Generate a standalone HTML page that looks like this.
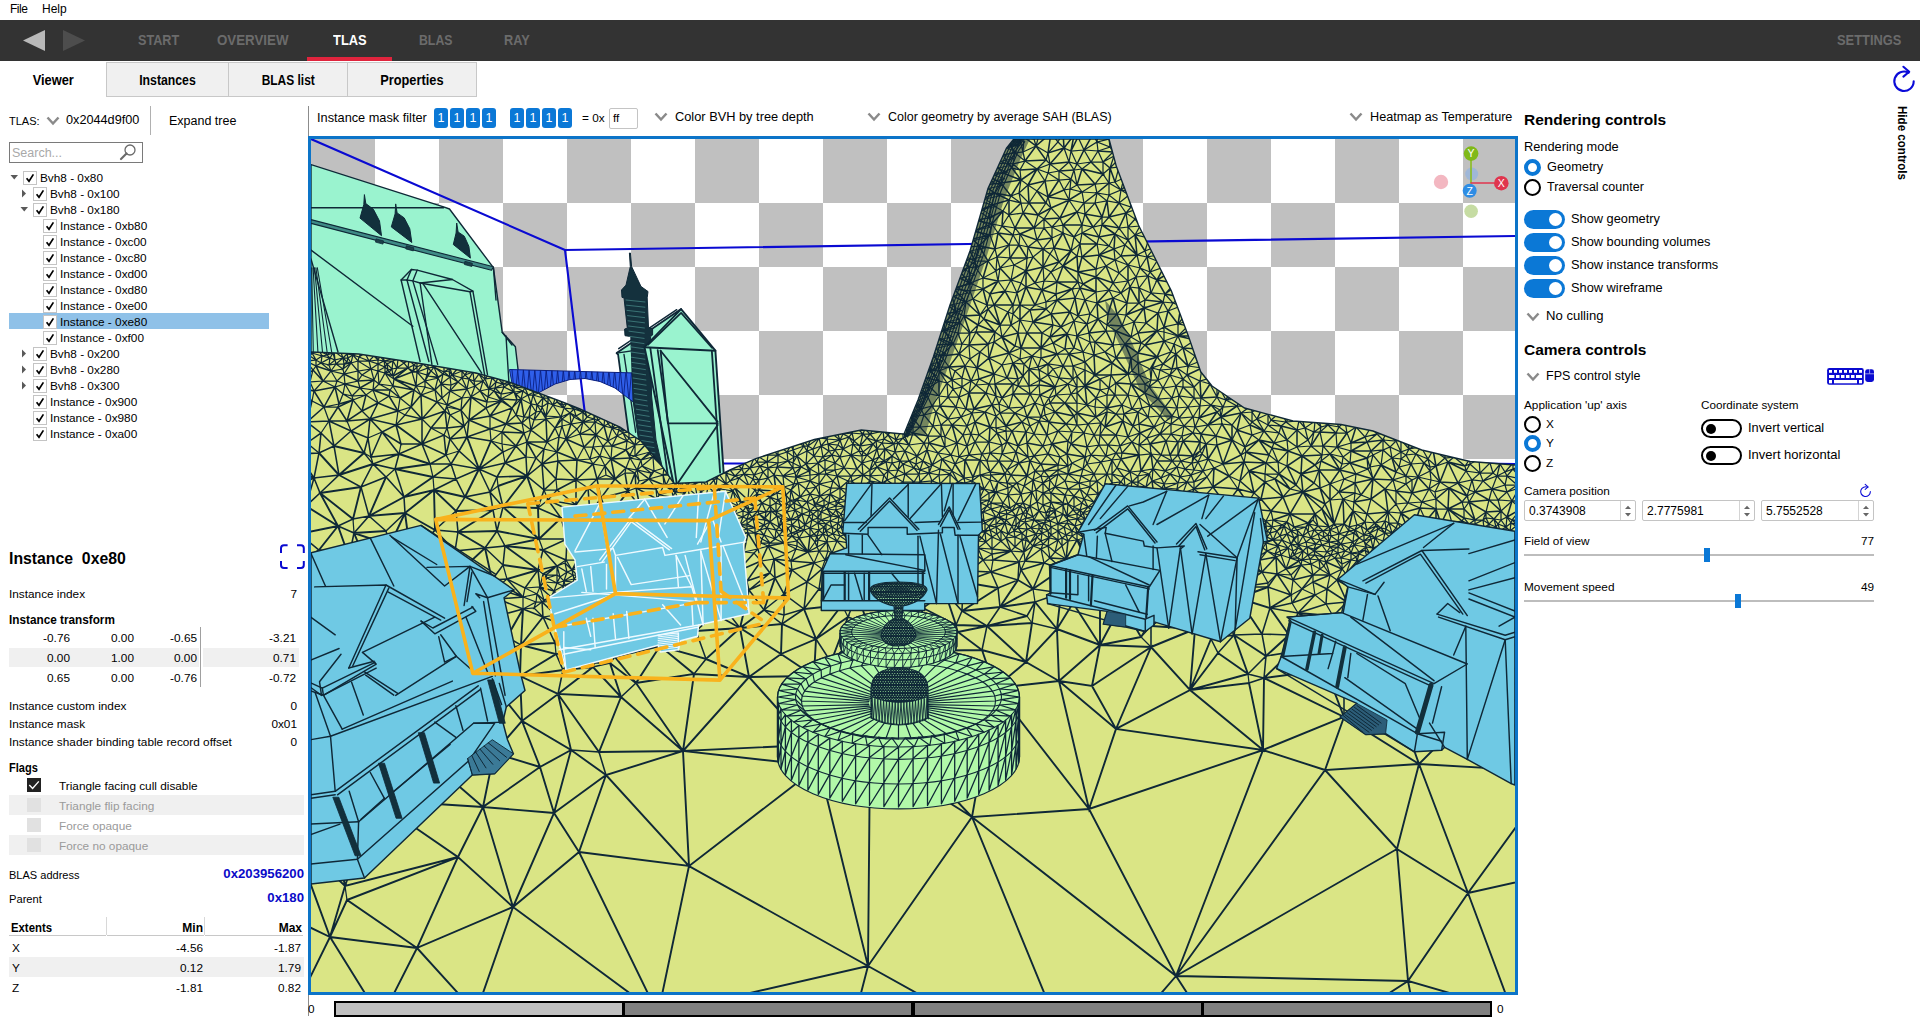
<!DOCTYPE html>
<html lang="en">
<head>
<meta charset="utf-8">
<title>Radeon Raytracing Analyzer - TLAS Viewer</title>
<style>
html,body{margin:0;padding:0;}
body{width:1920px;height:1024px;overflow:hidden;background:#fff;position:relative;
 font-family:"Liberation Sans",sans-serif;font-size:11.8px;color:#000;}
.a{position:absolute;white-space:nowrap;}
.t{position:absolute;white-space:nowrap;line-height:16px;height:16px;}
.r{text-align:right;}
.b{font-weight:bold;}
#nav{left:0;top:20px;width:1920px;height:41px;background:#333333;}
.nv{position:absolute;top:11.5px;font-weight:bold;font-size:14.6px;color:#6b6b6b;line-height:16px;transform-origin:0 50%;}
.tab{position:absolute;top:62px;height:35px;box-sizing:border-box;background:#f0f0f0;border:1px solid #c8c8c8;
 font-weight:bold;font-size:14.5px;text-align:center;line-height:34px;}
.tab span{display:inline-block;}
.cb{position:absolute;width:12px;height:12px;border:1px solid #c4c4c4;background:#fff;}
.cb svg{position:absolute;left:1px;top:1px;}
.tr{position:absolute;font-size:11.8px;line-height:16px;height:16px;white-space:nowrap;}
.bit{position:absolute;top:107.5px;width:14px;height:20px;background:#0b78d6;border-radius:3px;color:#fff;font-size:12.5px;line-height:20px;text-align:center;}
.tog{position:absolute;width:41px;height:19px;border-radius:9.5px;background:#0b78d6;}
.tog i{position:absolute;right:3px;top:3px;width:13px;height:13px;border-radius:6.5px;background:#fff;}
.togo{position:absolute;width:37px;height:15px;border-radius:10px;background:#fff;border:2px solid #000;}
.togo i{position:absolute;left:3px;top:2.5px;width:10px;height:10px;border-radius:6px;background:#000;}
.rad{position:absolute;width:13px;height:13px;border-radius:9px;border:2px solid #000;background:#fff;box-sizing:content-box;}
.rad.on{border:4px solid #0b78d6;width:9px;height:9px;}
.spin{position:absolute;top:499.5px;height:21px;box-sizing:border-box;border:1px solid #c4c4c4;border-radius:2px;background:#fff;font-size:12px;line-height:20px;padding-left:4px;}
.spin b{position:absolute;right:0;top:0;width:14px;height:19px;border-left:1px solid #d4d4d4;}
.sl{position:absolute;left:1524px;width:350px;height:2px;background:#bdbdbd;}
.sh{position:absolute;width:6px;height:14px;background:#0b78d6;}
.g{color:#9a9a9a;}
.stripe{position:absolute;background:#f0f0f0;}
</style>
</head>
<body>
<!--MENU-->
<div class="t" style="left:10px;top:1px;font-size:12px;letter-spacing:-0.5px">File</div>
<div class="t" style="left:42px;top:1px;font-size:12px">Help</div>
<!--NAV-->
<div class="a" id="nav">
 <svg class="a" style="left:20px;top:8px" width="70" height="26"><path d="M3,12.5 L25,2 L25,23 Z" fill="#b9b9b9"/><path d="M65,12.5 L43,2 L43,23 Z" fill="#4d4d4d"/></svg>
 <div class="nv" style="left:138px;transform:scaleX(0.866)">START</div>
 <div class="nv" style="left:216.5px;transform:scaleX(0.912)">OVERVIEW</div>
 <div class="nv" style="left:332.5px;color:#fff;transform:scaleX(0.884)">TLAS</div>
 <div class="nv" style="left:418.5px;transform:scaleX(0.842)">BLAS</div>
 <div class="nv" style="left:504px;transform:scaleX(0.873)">RAY</div>
 <div class="nv" style="left:1836.5px;transform:scaleX(0.883)">SETTINGS</div>
 <div class="a" style="left:307px;top:37px;width:85px;height:4px;background:#e0243d"></div>
</div>
<!--SUBTABS-->
<div class="tab" style="left:0;width:106px;background:#fff;border-color:#fff;"><span style="transform:scaleX(0.887)">Viewer</span></div>
<div class="tab" style="left:106px;width:123px;"><span style="transform:scaleX(0.846)">Instances</span></div>
<div class="tab" style="left:228px;width:120px;"><span style="transform:scaleX(0.823)">BLAS list</span></div>
<div class="tab" style="left:347px;width:130px;"><span style="transform:scaleX(0.882)">Properties</span></div>
<!--LEFT TOOLBAR-->
<div class="t" style="left:9px;top:113px;font-size:11px">TLAS:</div>
<svg class="a" style="left:46px;top:116px" width="14" height="10"><path d="M1.5,1.5 L7,7.5 L12.5,1.5" fill="none" stroke="#8a8a8a" stroke-width="2.5"/></svg>
<div class="t" style="left:66px;top:112px;font-size:12.7px">0x2044d9f00</div>
<div class="a" style="left:150px;top:106px;width:1px;height:29px;background:#b0b0b0"></div>
<div class="t" style="left:169px;top:113px;font-size:12.5px">Expand tree</div>
<div class="a" style="left:308px;top:106px;width:1px;height:910px;background:#8c8c8c"></div>
<!--SEARCH-->
<div class="a" style="left:9px;top:142px;width:132px;height:19px;border:1px solid #7a7a7a;box-sizing:content-box;background:#fff"></div>
<div class="t g" style="left:12px;top:145px;font-size:12.5px;color:#a9a9a9">Search...</div>
<svg class="a" style="left:118px;top:143px" width="20" height="18"><circle cx="12" cy="7" r="5" fill="none" stroke="#6a6a6a" stroke-width="1.3"/><path d="M8.5,10.5 L3,16" stroke="#6a6a6a" stroke-width="2.2" stroke-linecap="round"/></svg>
<!--TREE-->
<svg class="a" style="left:10px;top:174px" width="9" height="7"><path d="M0.5,1 L8,1 L4.25,5.5 Z" fill="#595959"/></svg>
<div class="cb" style="left:23px;top:171px"><svg width="10" height="10" viewBox="0 0 10 10"><path d="M1.6,5.2 L4,8.3 L8.4,1.4" fill="none" stroke="#000" stroke-width="1.7"/></svg></div>
<div class="tr" style="left:40px;top:170px">Bvh8 - 0x80</div>
<svg class="a" style="left:21px;top:189px" width="6" height="9"><path d="M1,0.5 L5,4.5 L1,8.5 Z" fill="#595959"/></svg>
<div class="cb" style="left:33px;top:187px"><svg width="10" height="10" viewBox="0 0 10 10"><path d="M1.6,5.2 L4,8.3 L8.4,1.4" fill="none" stroke="#000" stroke-width="1.7"/></svg></div>
<div class="tr" style="left:50px;top:186px">Bvh8 - 0x100</div>
<svg class="a" style="left:20px;top:206px" width="9" height="7"><path d="M0.5,1 L8,1 L4.25,5.5 Z" fill="#595959"/></svg>
<div class="cb" style="left:33px;top:203px"><svg width="10" height="10" viewBox="0 0 10 10"><path d="M1.6,5.2 L4,8.3 L8.4,1.4" fill="none" stroke="#000" stroke-width="1.7"/></svg></div>
<div class="tr" style="left:50px;top:202px">Bvh8 - 0x180</div>
<div class="cb" style="left:43px;top:219px"><svg width="10" height="10" viewBox="0 0 10 10"><path d="M1.6,5.2 L4,8.3 L8.4,1.4" fill="none" stroke="#000" stroke-width="1.7"/></svg></div>
<div class="tr" style="left:60px;top:218px">Instance - 0xb80</div>
<div class="cb" style="left:43px;top:235px"><svg width="10" height="10" viewBox="0 0 10 10"><path d="M1.6,5.2 L4,8.3 L8.4,1.4" fill="none" stroke="#000" stroke-width="1.7"/></svg></div>
<div class="tr" style="left:60px;top:234px">Instance - 0xc00</div>
<div class="cb" style="left:43px;top:251px"><svg width="10" height="10" viewBox="0 0 10 10"><path d="M1.6,5.2 L4,8.3 L8.4,1.4" fill="none" stroke="#000" stroke-width="1.7"/></svg></div>
<div class="tr" style="left:60px;top:250px">Instance - 0xc80</div>
<div class="cb" style="left:43px;top:267px"><svg width="10" height="10" viewBox="0 0 10 10"><path d="M1.6,5.2 L4,8.3 L8.4,1.4" fill="none" stroke="#000" stroke-width="1.7"/></svg></div>
<div class="tr" style="left:60px;top:266px">Instance - 0xd00</div>
<div class="cb" style="left:43px;top:283px"><svg width="10" height="10" viewBox="0 0 10 10"><path d="M1.6,5.2 L4,8.3 L8.4,1.4" fill="none" stroke="#000" stroke-width="1.7"/></svg></div>
<div class="tr" style="left:60px;top:282px">Instance - 0xd80</div>
<div class="cb" style="left:43px;top:299px"><svg width="10" height="10" viewBox="0 0 10 10"><path d="M1.6,5.2 L4,8.3 L8.4,1.4" fill="none" stroke="#000" stroke-width="1.7"/></svg></div>
<div class="tr" style="left:60px;top:298px">Instance - 0xe00</div>
<div class="a" style="left:9px;top:313px;width:260px;height:16px;background:#8fc1e8"></div>
<div class="cb" style="left:43px;top:315px"><svg width="10" height="10" viewBox="0 0 10 10"><path d="M1.6,5.2 L4,8.3 L8.4,1.4" fill="none" stroke="#000" stroke-width="1.7"/></svg></div>
<div class="tr" style="left:60px;top:314px">Instance - 0xe80</div>
<div class="cb" style="left:43px;top:331px"><svg width="10" height="10" viewBox="0 0 10 10"><path d="M1.6,5.2 L4,8.3 L8.4,1.4" fill="none" stroke="#000" stroke-width="1.7"/></svg></div>
<div class="tr" style="left:60px;top:330px">Instance - 0xf00</div>
<svg class="a" style="left:21px;top:349px" width="6" height="9"><path d="M1,0.5 L5,4.5 L1,8.5 Z" fill="#595959"/></svg>
<div class="cb" style="left:33px;top:347px"><svg width="10" height="10" viewBox="0 0 10 10"><path d="M1.6,5.2 L4,8.3 L8.4,1.4" fill="none" stroke="#000" stroke-width="1.7"/></svg></div>
<div class="tr" style="left:50px;top:346px">Bvh8 - 0x200</div>
<svg class="a" style="left:21px;top:365px" width="6" height="9"><path d="M1,0.5 L5,4.5 L1,8.5 Z" fill="#595959"/></svg>
<div class="cb" style="left:33px;top:363px"><svg width="10" height="10" viewBox="0 0 10 10"><path d="M1.6,5.2 L4,8.3 L8.4,1.4" fill="none" stroke="#000" stroke-width="1.7"/></svg></div>
<div class="tr" style="left:50px;top:362px">Bvh8 - 0x280</div>
<svg class="a" style="left:21px;top:381px" width="6" height="9"><path d="M1,0.5 L5,4.5 L1,8.5 Z" fill="#595959"/></svg>
<div class="cb" style="left:33px;top:379px"><svg width="10" height="10" viewBox="0 0 10 10"><path d="M1.6,5.2 L4,8.3 L8.4,1.4" fill="none" stroke="#000" stroke-width="1.7"/></svg></div>
<div class="tr" style="left:50px;top:378px">Bvh8 - 0x300</div>
<div class="cb" style="left:33px;top:395px"><svg width="10" height="10" viewBox="0 0 10 10"><path d="M1.6,5.2 L4,8.3 L8.4,1.4" fill="none" stroke="#000" stroke-width="1.7"/></svg></div>
<div class="tr" style="left:50px;top:394px">Instance - 0x900</div>
<div class="cb" style="left:33px;top:411px"><svg width="10" height="10" viewBox="0 0 10 10"><path d="M1.6,5.2 L4,8.3 L8.4,1.4" fill="none" stroke="#000" stroke-width="1.7"/></svg></div>
<div class="tr" style="left:50px;top:410px">Instance - 0x980</div>
<div class="cb" style="left:33px;top:427px"><svg width="10" height="10" viewBox="0 0 10 10"><path d="M1.6,5.2 L4,8.3 L8.4,1.4" fill="none" stroke="#000" stroke-width="1.7"/></svg></div>
<div class="tr" style="left:50px;top:426px">Instance - 0xa00</div>
<!--INSTANCE PANEL-->
<div class="t b" style="left:9px;top:550.5px;font-size:15.8px">Instance&nbsp;&nbsp;0xe80</div>
<svg class="a" style="left:279px;top:544px" width="27" height="26"><path d="M2,9 V4.2 Q2,1.2 5,1.2 H8.6 M18,1.2 H22 Q24.8,1.2 24.8,4.2 V9 M24.8,17 V21 Q24.8,24 22,24 H18 M8.6,24 H5 Q2,24 2,21 V17" fill="none" stroke="#0a0ad0" stroke-width="2"/></svg>
<div class="t" style="left:9px;top:586px">Instance index</div>
<div class="t r" style="left:200px;width:97px;top:586px">7</div>
<div class="t b" style="left:9px;top:612px;font-size:12px;transform-origin:0 50%;transform:scaleX(.98)">Instance transform</div>
<div class="stripe" style="left:9px;top:648px;width:190px;height:19px"></div>
<div class="stripe" style="left:203px;top:648px;width:96px;height:19px"></div>
<div class="a" style="left:200px;top:627px;width:1px;height:60px;background:#a0a0a0"></div>
<div class="t r" style="left:10px;width:60px;top:630px">-0.76</div>
<div class="t r" style="left:74px;width:60px;top:630px">0.00</div>
<div class="t r" style="left:137px;width:60px;top:630px">-0.65</div>
<div class="t r" style="left:236px;width:60px;top:630px">-3.21</div>
<div class="t r" style="left:10px;width:60px;top:650px">0.00</div>
<div class="t r" style="left:74px;width:60px;top:650px">1.00</div>
<div class="t r" style="left:137px;width:60px;top:650px">0.00</div>
<div class="t r" style="left:236px;width:60px;top:650px">0.71</div>
<div class="t r" style="left:10px;width:60px;top:670px">0.65</div>
<div class="t r" style="left:74px;width:60px;top:670px">0.00</div>
<div class="t r" style="left:137px;width:60px;top:670px">-0.76</div>
<div class="t r" style="left:236px;width:60px;top:670px">-0.72</div>
<div class="t" style="left:9px;top:698px">Instance custom index</div>
<div class="t r" style="left:200px;width:97px;top:698px">0</div>
<div class="t" style="left:9px;top:716px">Instance mask</div>
<div class="t r" style="left:200px;width:97px;top:716px">0x01</div>
<div class="t" style="left:9px;top:734px">Instance shader binding table record offset</div>
<div class="t r" style="left:200px;width:97px;top:734px">0</div>
<div class="t b" style="left:9px;top:760px;font-size:12px;transform-origin:0 50%;transform:scaleX(.92)">Flags</div>
<div class="a" style="left:27px;top:778px;width:14px;height:14px;background:#222"><svg width="14" height="14" viewBox="0 0 14 14"><path d="M2.3,7 L5.6,10.4 L11.8,3.4" fill="none" stroke="#fff" stroke-width="1.4"/></svg></div>
<div class="t" style="left:59px;top:778px">Triangle facing cull disable</div>
<div class="stripe" style="left:9px;top:795px;width:295px;height:20px"></div>
<div class="stripe" style="left:9px;top:835px;width:295px;height:20px"></div>
<div class="a" style="left:27px;top:798px;width:14px;height:14px;background:#e1e1e1"></div>
<div class="t g" style="left:59px;top:798px">Triangle flip facing</div>
<div class="a" style="left:27px;top:818px;width:14px;height:14px;background:#e1e1e1"></div>
<div class="t g" style="left:59px;top:818px">Force opaque</div>
<div class="a" style="left:27px;top:838px;width:14px;height:14px;background:#e1e1e1"></div>
<div class="t g" style="left:59px;top:838px">Force no opaque</div>
<div class="t" style="left:9px;top:867px;transform-origin:0 50%;transform:scaleX(.935)">BLAS address</div>
<div class="t r b" style="left:180px;width:124px;top:866px;color:#0a0ac8;font-size:13.2px">0x203956200</div>
<div class="t" style="left:9px;top:891px;transform-origin:0 50%;transform:scaleX(.945)">Parent</div>
<div class="t r b" style="left:180px;width:124px;top:890px;color:#0a0ac8;font-size:13.2px">0x180</div>
<div class="t b" style="left:11px;top:920px;font-size:12px;transform-origin:0 50%;transform:scaleX(.945)">Extents</div>
<div class="t r b" style="left:140px;width:63px;top:920px;font-size:12px">Min</div>
<div class="t r b" style="left:240px;width:62px;top:920px;font-size:12px">Max</div>
<div class="a" style="left:9px;top:935px;width:97px;height:1px;background:#c8c8c8"></div>
<div class="a" style="left:107px;top:935px;width:97px;height:1px;background:#c8c8c8"></div>
<div class="a" style="left:205px;top:935px;width:98px;height:1px;background:#c8c8c8"></div>
<div class="a" style="left:106px;top:917px;width:1px;height:18px;background:#d8d8d8"></div>
<div class="a" style="left:204px;top:917px;width:1px;height:18px;background:#d8d8d8"></div>
<div class="stripe" style="left:9px;top:957px;width:295px;height:20px"></div>
<div class="t" style="left:12px;top:940px">X</div>
<div class="t r" style="left:140px;width:63px;top:940px">-4.56</div>
<div class="t r" style="left:240px;width:61px;top:940px">-1.87</div>
<div class="t" style="left:12px;top:960px">Y</div>
<div class="t r" style="left:140px;width:63px;top:960px">0.12</div>
<div class="t r" style="left:240px;width:61px;top:960px">1.79</div>
<div class="t" style="left:12px;top:980px">Z</div>
<div class="t r" style="left:140px;width:63px;top:980px">-1.81</div>
<div class="t r" style="left:240px;width:61px;top:980px">0.82</div>
<!--VIEW TOOLBAR-->
<div class="t" style="left:317px;top:110px;font-size:12.75px">Instance mask filter</div>
<div class="bit" style="left:434px">1</div><div class="bit" style="left:450px">1</div><div class="bit" style="left:466px">1</div><div class="bit" style="left:482px">1</div>
<div class="bit" style="left:510px">1</div><div class="bit" style="left:526px">1</div><div class="bit" style="left:542px">1</div><div class="bit" style="left:558px">1</div>
<div class="t" style="left:582px;top:110px">= 0x</div>
<div class="a" style="left:609px;top:108px;width:27px;height:19px;border:1px solid #c4c4c4;border-radius:2px;box-sizing:content-box"></div>
<div class="t" style="left:613px;top:110px">ff</div>
<svg class="a" style="left:654px;top:112px" width="14" height="10"><path d="M1.5,1.5 L7,7.5 L12.5,1.5" fill="none" stroke="#8a8a8a" stroke-width="2.5"/></svg>
<div class="t" style="left:675px;top:109px;font-size:12.8px">Color BVH by tree depth</div>
<svg class="a" style="left:867px;top:112px" width="14" height="10"><path d="M1.5,1.5 L7,7.5 L12.5,1.5" fill="none" stroke="#8a8a8a" stroke-width="2.5"/></svg>
<div class="t" style="left:888px;top:109px;font-size:12.5px">Color geometry by average SAH (BLAS)</div>
<svg class="a" style="left:1349px;top:112px" width="14" height="10"><path d="M1.5,1.5 L7,7.5 L12.5,1.5" fill="none" stroke="#8a8a8a" stroke-width="2.5"/></svg>
<div class="t" style="left:1370px;top:109px;font-size:12.65px">Heatmap as Temperature</div>
<!--VIEWPORT-->
<div class="a" id="vp" style="left:308px;top:136px;width:1210px;height:859px;background:#0c74c8;">
<svg class="a" style="left:3px;top:3px" width="1204" height="853" viewBox="311 139 1204 853"><pattern id="ck" x="311" y="139" width="128" height="128" patternUnits="userSpaceOnUse"><rect width="128" height="128" fill="#fff"/><rect width="64" height="64" fill="#c0c0c0"/><rect x="64" y="64" width="64" height="64" fill="#c0c0c0"/></pattern><rect x="311" y="139" width="1204" height="853" fill="url(#ck)"/>
<path d="M311.0 139.0L565.0 250.0L1515.0 236.0" fill="none" stroke="#0a0ad2" stroke-width="2.1" stroke-linejoin="round" stroke-linecap="round" /><path d="M565.0 250.0L593.0 480.0" fill="none" stroke="#0a0ad2" stroke-width="2.1" stroke-linejoin="round" stroke-linecap="round" /><path d="M700.0 463.5L770.0 463.5" fill="none" stroke="#0a0ad2" stroke-width="2.1" stroke-linejoin="round" stroke-linecap="round" /><path d="M1480.0 463.5L1515.0 464.0" fill="none" stroke="#0a0ad2" stroke-width="2.1" stroke-linejoin="round" stroke-linecap="round" />
<polygon points="311.0,164.6 443.6,206.8 449.5,209.0 493.4,267.7 502.2,332.2 515.4,346.8 518.0,369.0 521.0,392.0 521.0,420.0 311.0,420.0" fill="#9af3cf" stroke="#0f2837" stroke-width="1.4" stroke-linejoin="round" />
<path d="M311.0 207.7L443.6 207.7M311.0 250.1L412.8 326.3M311.0 259.0L338.0 352.0M502.2 332.2L512.0 345.0M506.0 336.0L509.0 384.0M493.4 267.7L496.0 300.0" fill="none" stroke="#0f2837" stroke-width="1.4" stroke-linecap="round" />
<path d="M420.1 361.5L401.1 280.0L411.4 269.5L417.2 270.1L452.4 279.5L472.9 291.2L487.5 374.7" fill="none" stroke="#0f2837" stroke-width="1.4" stroke-linejoin="round" stroke-linecap="round" />
<path d="M401.1 280.0L407.0 280.0L428.9 361.5" fill="none" stroke="#0f2837" stroke-width="1.4" stroke-linejoin="round" stroke-linecap="round" />
<path d="M411.4 269.5L407.0 280.0" fill="none" stroke="#0f2837" stroke-width="1.4" stroke-linejoin="round" stroke-linecap="round" />
<path d="M417.2 270.1L412.8 280.9L437.7 364.4" fill="none" stroke="#0f2837" stroke-width="1.4" stroke-linejoin="round" stroke-linecap="round" />
<path d="M407.0 280.0L412.8 280.9L420.1 283.0L470.0 291.8L472.9 291.2" fill="none" stroke="#0f2837" stroke-width="1.4" stroke-linejoin="round" stroke-linecap="round" />
<path d="M420.1 283.0L431.9 364.4" fill="none" stroke="#0f2837" stroke-width="1.4" stroke-linejoin="round" stroke-linecap="round" />
<path d="M452.4 279.5L420.1 283.0" fill="none" stroke="#0f2837" stroke-width="1.4" stroke-linejoin="round" stroke-linecap="round" />
<path d="M423.1 283.8L481.7 373.2" fill="none" stroke="#0f2837" stroke-width="1.4" stroke-linejoin="round" stroke-linecap="round" />
<path d="M470.0 291.8L484.6 374.7" fill="none" stroke="#0f2837" stroke-width="1.4" stroke-linejoin="round" stroke-linecap="round" />
<path d="M311.7 267.7L313.3 352.0M313.1 267.7L317.9 352.0M314.5 267.7L322.5 352.0M315.9 267.7L327.1 352.0M317.3 267.7L331.7 352.0" fill="none" stroke="#0f2837" stroke-width="1.1" stroke-linecap="round" />
<polygon points="311.0,219.6 493.4,266.8 491.5,270.3 311.0,223.4" fill="#3f8a86" stroke="#0f2837" stroke-width="1.1" stroke-linejoin="round" />
<polygon points="364.4,194.6 365.8,203.6 373.4,209.3 379.5,221.0 381.5,235.7 360.0,218.1 363.8,204.6" fill="#12303c" stroke="#0f2837" stroke-width="1" stroke-linejoin="round" />
<polygon points="376.0,238.9 383.5,240.9 383.0,244.1 375.5,242.1" fill="#1b4048" stroke="#0f2837" stroke-width="0.8" stroke-linejoin="round" />
<polygon points="395.7,203.9 397.1,212.9 404.2,217.9 409.8,228.8 411.8,242.5 391.3,226.9 395.1,213.9" fill="#12303c" stroke="#0f2837" stroke-width="1" stroke-linejoin="round" />
<polygon points="406.3,245.7 413.8,247.7 413.3,250.9 405.8,248.9" fill="#1b4048" stroke="#0f2837" stroke-width="0.8" stroke-linejoin="round" />
<polygon points="456.7,223.0 458.1,232.0 464.3,236.2 468.9,246.4 470.4,258.1 453.3,244.5 456.1,233.0" fill="#12303c" stroke="#0f2837" stroke-width="1" stroke-linejoin="round" />
<polygon points="464.9,261.3 472.4,263.3 471.9,266.5 464.4,264.5" fill="#1b4048" stroke="#0f2837" stroke-width="0.8" stroke-linejoin="round" />
<polygon points="616.6,353.1 681.1,309.1 645.9,348.7 673.8,483.5 650.3,464.4 628.4,432.2 618.1,354.5" fill="#9af3cf" stroke="#0f2837" stroke-width="1.8" stroke-linejoin="round" />
<path d="M616.6 353.1L645.9 348.7" fill="none" stroke="#0f2837" stroke-width="1.4" stroke-linejoin="round" stroke-linecap="round" />
<path d="M624.0 354.5L635.7 432.2" fill="none" stroke="#0f2837" stroke-width="1.4" stroke-linejoin="round" stroke-linecap="round" />
<path d="M618.7 348.7L676.7 309.7" fill="none" stroke="#0f2837" stroke-width="1.4" stroke-linejoin="round" stroke-linecap="round" />
<polygon points="509.5,369.5 636.0,373.0 636.0,404.0 628.0,398.0 615.0,388.0 600.0,381.5 585.0,378.5 570.0,379.5 555.0,384.0 540.0,392.0 530.0,400.0 515.0,400.0" fill="#2f5fea" stroke="#0b1f80" stroke-width="1" stroke-linejoin="round" />
<clipPath id="bc"><polygon points="509.5,369.5 636.0,373.0 636.0,404.0 628.0,398.0 615.0,388.0 600.0,381.5 585.0,378.5 570.0,379.5 555.0,384.0 540.0,392.0 530.0,400.0 515.0,400.0"/></clipPath>
<g clip-path="url(#bc)"><path d="M512.0 370.0L515.0 400.0M517.7 370.0L515.0 400.0M517.7 370.0L520.7 400.0M523.4 370.0L520.7 400.0M523.4 370.0L526.4 400.0M529.1 370.0L526.4 400.0M529.1 370.0L532.1 400.0M534.8 370.0L532.1 400.0M534.8 370.0L537.8 400.0M540.5 370.0L537.8 400.0M540.5 370.0L543.5 400.0M546.2 370.0L543.5 400.0M546.2 370.0L549.2 400.0M551.9 370.0L549.2 400.0M551.9 370.0L554.9 400.0M557.6 370.0L554.9 400.0M557.6 370.0L560.6 400.0M563.3 370.0L560.6 400.0M563.3 370.0L566.3 400.0M569.0 370.0L566.3 400.0M569.0 370.0L572.0 400.0M574.7 370.0L572.0 400.0M574.7 370.0L577.7 400.0M580.4 370.0L577.7 400.0M580.4 370.0L583.4 400.0M586.1 370.0L583.4 400.0M586.1 370.0L589.1 400.0M591.8 370.0L589.1 400.0M591.8 370.0L594.8 400.0M597.5 370.0L594.8 400.0M597.5 370.0L600.5 400.0M603.2 370.0L600.5 400.0M603.2 370.0L606.2 400.0M608.9 370.0L606.2 400.0M608.9 370.0L611.9 400.0M614.6 370.0L611.9 400.0M614.6 370.0L617.6 400.0M620.3 370.0L617.6 400.0M620.3 370.0L623.3 400.0M626.0 370.0L623.3 400.0M626.0 370.0L629.0 400.0M631.7 370.0L629.0 400.0M631.7 370.0L634.7 400.0M637.4 370.0L634.7 400.0" fill="none" stroke="#0b1f80" stroke-width="0.9" stroke-linecap="round" /></g>
<polygon points="629.4,253.0 630.3,266.5 626.0,285.1 621.5,290.0 622.0,297.4 624.0,297.8 627.3,328.2 624.6,329.0 625.0,335.7 630.8,336.5 633.0,400.0 641.0,458.0 662.0,466.0 656.0,440.0 651.5,395.0 650.6,336.5 652.6,335.0 652.6,328.5 648.5,327.5 647.2,297.8 648.0,291.5 641.0,286.5 631.6,266.5 630.4,253.0" fill="#14313d" stroke="#0f2837" stroke-width="1" stroke-linejoin="round" />
<path d="M626.0 300.0L645.0 302.0M626.5 305.2L644.9 307.2M627.0 310.4L644.7 312.4M627.5 315.6L644.6 317.6M628.0 320.8L644.5 322.8M628.5 326.0L644.4 328.0M629.0 331.2L644.2 333.2M629.6 336.4L644.1 338.4M630.1 341.6L644.0 343.6M630.5 346.8L644.3 348.8M630.9 352.0L644.6 354.0M631.4 357.2L644.8 359.2M631.8 362.4L645.1 364.4M632.3 367.6L645.4 369.6M632.7 372.8L645.6 374.8M633.1 378.0L645.9 380.0M633.6 383.2L646.1 385.2M634.0 388.4L646.4 390.4M634.5 393.6L646.7 395.6M634.9 398.8L646.9 400.8M635.6 404.0L647.6 406.0M636.3 409.2L648.4 411.2M637.0 414.4L649.2 416.4M637.7 419.6L650.0 421.6M638.4 424.8L650.8 426.8M639.1 430.0L651.7 432.0M639.9 435.2L652.5 437.2M640.6 440.4L653.3 442.4M641.3 445.6L654.1 447.6M642.0 450.8L654.9 452.8" fill="none" stroke="#4b8f8c" stroke-width="0.7" stroke-linecap="round" />
<polygon points="644.5,347.2 681.1,309.1 715.4,350.7 723.6,471.8 723.9,484.4 673.8,484.4" fill="#9af3cf" stroke="#0f2837" stroke-width="1.9" stroke-linejoin="round" />
<path d="M644.5 347.2L715.4 350.7" fill="none" stroke="#0f2837" stroke-width="1.9" stroke-linejoin="round" stroke-linecap="round" />
<path d="M648.0 344.9L681.1 312.9L711.9 347.8" fill="none" stroke="#0f2837" stroke-width="1.7" stroke-linejoin="round" stroke-linecap="round" />
<path d="M657.7 350.1L676.7 483.5" fill="none" stroke="#0f2837" stroke-width="1.8" stroke-linejoin="round" stroke-linecap="round" />
<path d="M660.6 350.7L667.9 423.4L717.7 423.4" fill="none" stroke="#0f2837" stroke-width="1.8" stroke-linejoin="round" stroke-linecap="round" />
<path d="M660.6 350.7L717.7 421.9" fill="none" stroke="#0f2837" stroke-width="1.8" stroke-linejoin="round" stroke-linecap="round" />
<path d="M717.7 424.9L678.2 482.6" fill="none" stroke="#0f2837" stroke-width="1.8" stroke-linejoin="round" stroke-linecap="round" />
<path d="M711.9 351.6L720.1 472.6" fill="none" stroke="#0f2837" stroke-width="1.8" stroke-linejoin="round" stroke-linecap="round" />
<path d="M650.3 347.8L667.9 476.2" fill="none" stroke="#0f2837" stroke-width="1.8" stroke-linejoin="round" stroke-linecap="round" />
<clipPath id="tc"><polygon points="311.0,352.0 358.6,354.0 417.0,363.0 476.0,373.0 511.0,382.6 563.7,402.5 580.0,409.0 620.0,427.0 641.0,441.0 659.0,462.0 674.0,483.5 706.0,482.0 730.0,470.0 755.8,458.6 814.4,439.5 861.3,430.0 900.0,433.7 904.0,434.0 918.0,400.0 933.3,357.0 950.0,305.0 970.0,251.0 988.0,188.6 1006.5,148.0 1013.8,139.0 1109.0,139.0 1116.4,166.6 1138.4,225.0 1171.4,291.0 1188.0,335.0 1200.7,371.8 1212.0,386.0 1244.5,408.0 1293.0,421.0 1341.0,424.5 1373.0,431.0 1421.7,450.0 1470.0,461.5 1515.0,465.0 1515.0,992.0 311.0,992.0"/></clipPath>
<polygon points="311.0,352.0 358.6,354.0 417.0,363.0 476.0,373.0 511.0,382.6 563.7,402.5 580.0,409.0 620.0,427.0 641.0,441.0 659.0,462.0 674.0,483.5 706.0,482.0 730.0,470.0 755.8,458.6 814.4,439.5 861.3,430.0 900.0,433.7 904.0,434.0 918.0,400.0 933.3,357.0 950.0,305.0 970.0,251.0 988.0,188.6 1006.5,148.0 1013.8,139.0 1109.0,139.0 1116.4,166.6 1138.4,225.0 1171.4,291.0 1188.0,335.0 1200.7,371.8 1212.0,386.0 1244.5,408.0 1293.0,421.0 1341.0,424.5 1373.0,431.0 1421.7,450.0 1470.0,461.5 1515.0,465.0 1515.0,992.0 311.0,992.0" fill="#dae585"/>
<g clip-path="url(#tc)"><path d="M1367 564l6-2l-1 12l13-1l-7 7l10 6l-3-13l-2-12l8-4l5 1l5 3l12 3l9 10l3-7l9-8l11 7l-12 6l2 11l-8 7l-2 9l-4-2l6-7M1367 564l3 4l-9-1l-4-6l-6-1l-10-2l-3-5l-7 2l-4-3l-5-7l8 2l3 3l-6 2l3-5l8-3l-9-2l-5-5l4-2l2-5l-7 1l5 4l1 7l-7 3l-8 6l1 4l-7 0l2 4l9 1l7 2l-2-5l3-5l-13-1l0-2l2-5l-10-2l-3-6l-5-1l-4 5l4 5l5 6l4-4l9-3l4-4l-2-6l6 3l-1-6l6-4l-11-1l-4 4l4 4l5-3l-9-1l-3 8l-3-6l-5 4l-6-6l9-3l-12 0l-7-5l4 9l-7-5l3 8l-5 6l6 8l-8 3l1 4l5 14l5 6l10-10l1-5l1-9l-9 4l-4 3l9 3l-1-3l-8 0l3-7l-2-7l3-6l4-3l0 10l8-3l1 5l-9-2l-7-1l7 4l-4 7l-1-4l5-3l5 3l-5 7l4 2l8-1l1 5l9 5l10 6l-6-9l2-4l9-4l3-5l0-6l-8 0l-1-5l-9-2l-9-2l7-4M1367 564l-6 3l11 7l6 6M1367 564l0-7l-2-7l1-3l7 1l-2-9l-5 5l7 4l8 7l0 2l-11-3l3 8l-6-5l3-3l3-6l2-10l-4 1l-1-3l5 2l5 7l3-4l-2 6l0 3l0 5l7-4l3 6l2-3l0-7l-5-3l2-7l-7 4l2-8l-4-5l-5-2l2 3l7 4l7 0l6 5l11-3l-2 5l3-2l-2 5l5 7l2-4l5-2l-4-4l-1-6l-6 1l1 3l5-4l3 4l3-8l6 3l6-4l3-4l4 2l1-3l-5 1l-10-4l-8 6l-7 2l-4-2l-6 2l8 6l2-6l4-6l3 4l8-4l10 2l-5 1l-5-3l0-2l-11 2l-8 4l-9-4l-10-11l13 1l-5-9l0-13l-3-11l13-4l-10-4l3-5l2-8l-9-1l7 9l12-3l13-1l-8-9l5-7l-12 2l-8 3l0 7l5-4l-5-3l-11-5l6-6l-10-8l-9 1l-6-7l-6 10l-9-10l9-11M1367 564l-10-3l10-4l-8-3l-3 3l-5-4l-6-2l4-3l5-3l5-7l5-3l-3-9l4-4l2 8l8-7l10-2l4 2l-1-11l-3 9l1 8l-5-1l-3 1l-3 9l10-5l5 4l2-4l9-4l-3 9l9 2l1 3l7 3l9 3l7 4l-6-6l10 4l2-4l-1-3l-11 3l12 0l4 3l7-4l3 6l1 3l7 5l-9-2l-4 2l-9-6l-6-1l3 6l3-5l4-4l10 2l2-11l-10 2l8-10l-10 5l6-8l-8 3l2 5l-6-1l1 4l5-3l2 5l-7 1l0-3l-11 6l-1 2l-10 4l-7 0l-4-7l5-3l8-3l-1 6M755 533l5-3l4-5l3 3l8 11l-11-4l-2 4l8 4l5-4l9 4l8-7l-6 0l5-3l6-2l7-1l1-5l5 3l4 6l3 2l1 4l9 2l-4-8l5 2l9 5l9 9l-14 3l8 5l3 5l3-13l8 10l2 10l7 8M755 533l-8-4l8-1l-2-9l6-5l-7 3l6-6l8 1l5-1l5 1l5-7l-3-5l9 4l3-4l-4-5l-8 5l-2 3l-6 3l-8-3l-4 8l-3-4l-8-4l-1 4l-3 4l6 2l6-6l7-4l-6-5l-8 2l-7 2l5 5l-8-1l-8-4l-10-1l-1 9l6 1l2 5l-3 5l-1-7l-6 2l7 5l1 1l8-2l2-6l8 3l4 2l-7 6l1 6l-6-5l5-1l7-1l8 4l0 5l-7 0l-1-4l-6 2l7 2l-10 2l-3 1l0-10l-2-6l10-3l0-6l-5-5l-3 8l-8 2l-2 6l-2 5l-8-4l9-2l-1 6l5 2l2 8l-11-7l-5-3l-4-5l3-2l-2-4l-8-5l4-8l-3-3l-2 8l1 3l10-5l-2 8l8-4l8-3l3-5l-11-6l-6-2l2 6l1 2l4-1l-1-5l14-5l2-3l-5-7l-4-8l-7 1l7 10l0-11l2-9l2 6l12-1l-6-6l-6 7l5 6l4 2l5-4l5 12l7-2l-3-5l6 1l4-8l5-4l6 7l9 1l10-8l0-5l-5-2l6-4l3-1l9 8l4 5l0 6l0 6l9-7l-9 1l-1-4l-13 6l-13-1l12-3l6-6l5-3l8-8l-1-7l6-11l0-3l8 4l1 5l1 7l3 4l-7 5l10 3l9 5l13 1l5-6l-11-8l8-4l1-5l3-12l2-5l-10-3l8 8l-11-1l3-7M755 533l6 10l-3 6l10-3l2-3l-6-8l3-7l9 2l3-3l3-4l1 8l-4 4l5 8l13 3l-1 3l12 3l11-1l-5 12l8 6l3-9l7-7l-4-2l-1-9l-10 5l2 4l6 9l-11 3l-6-11l9-5l1-7l-3 2l2 5M755 533l7 6l-1 4l7 3l6 13l-13 2l-7-8l-10-1l14-3l3 12M755 533l9 2l-4-5l-5-2l9-3l-11-6l-6 0l0 5l6-5l12 1l5 2l7-6l-6-5l-1-5l0-9l6 6l0 9l9-3l5-3l5 4l-4 10l1 5l-1 8l-3-5l-6-5l9-3l-8-4l-6 0l4 3l1 4l10 2l8 3l5-3l-7-6l4-5l7 2l3 4l-7 5l-3-11l-4 2l0 3l-7 1l-10-1l2-3l4-4l8-2l7-3l8 4l5-5l-8-4l-7-5l-2-14l12-2l-14-4l2 6l-7 7l9 7l6-8l10-2l3-3l1 12l10-2l-6 6l5 3l7 3l-9 3l2-6l1-9l10-6l0 11l-4 2l0 5l9 1l-4 7l-5-4l3 7l-6-3l-2 2l-10 4l5 4l4-3l2 6l5 3l7 5l7 2l3-6l1 3l6 3l3 3l-6-1l-8 4l1-6l4-3l3-4l-2-4l-2 5l4-1l5 4l9 4l7-4l2-3l-5-1l-13 4l1 6l10 4l-2-6l10 4l3-4l9 0l8-1l-9 9l4 6l5 10l6-11l0-8l10 2l7 3l9-7l7 9l9 6l-6-8l-3 2l-12-1l7 10l5-9l3-9l4-10l0-5l0-2l-7 0l-1 10l-5-3l-1-5l-2-5l-5 3l0 6l-4-3l4-3l-3-4l4-4l-1-5l2-5l6-2l13-2l3 4l7-2l-10-2l-1 4l-2 8l-4-4l-6-6l-8-1l2 3l5 7l7-3l-7 8l7 6l7 7l9 3l6 2l4-1l-5-8l5-3l6 4l4-9l2-3l-5-4l6-1l7-5l4 3l11-3l-11-3l5-11l-7 1l-5-4l10 2l2 1l7 11l5-8l5-9l4-3l7 3l-3 8l2 9l7 3l-3 7l-4 0l3 5l-6 3l3-8l-7 3l-10 4l1-6l-7 3l6 3l-5-1l-5-2l-11 6l4 3l7-9l-12 4l-5-5l4-4l13 5l3-4l7-3l4-2l6-4l4 2l-4 10l-4 10l4-1l0-9l-4-5l4-7l7-1l3 6l1 4l6 4l6-6l7 9l2-3l2-6l4 1l1-2l1 7l2 7l6 3l-6 4l8 4l-4 3l-4-7l-7 4l-2 3l-1 8l10-6l4-2l6 3l-6 5l-7 6l-5 6l-6 5l-3-14l-8-3l10-2l-2-3l-4-4l5-4l6-2l-4-8l-5 1l0 5l3 4l-6 1l1 3l-7 6l-6 9l-9-5l7-7l-7-3l-7-3l4-8l-7-3l1-3l6 6l2 5l8 2l0 7l4 0l0-3l1-8l-2-7l9-2l12 0l-2 3l7 4l-1-6l8 3l5-10l0-9l-8 5l-4-8l-1 5l5 3l8 4l4 2l1-12l-3-9l9 1l0 11l6 3l-7 0l1-3l-6-3l6-8l8 7l2-4l4 8l7-1l-4 4l-3-3l-8 3l-3 4l4 2l2-3l2 6l8-2l8 3l4 6l9-2l-2-4l-4-7l-3 4l7 3l6-4l4-4l5 6l2 6l5 0l8 2l0-6l-1-6l-8 4l1 2l-5 4l3 3l-7 3l5 5l-8-1l5 3l3-2l6 1l4-5l0 2l11-2l3 4l2 5l-5 4l-11-3l1 7l-11 4l-9-6l7-4l3 6l-10-2l-5 3l-12 5l-7-6l4-8l-2-3l-5 4l3 7l-3 0l-7 3l-3 5l13 7l7-9l-10-6l-8-5l8-2l0 7M810 511l-3-9l6-3l7-3l11-8l9 0l8-7l3-5l6-7l6 6l-1-12l0-7l5-1l6 5l6-3l5 4l1-12l9-5l-12-1l3 6l7 7l0 7l-4 8l-1 9l-6 7l14-1l12 2l3 7l-10 0l3 12l-5 4l-9-6l-3 4l-5 4l-6-6l-2 2l2-6l6 0l-1-9l1-7l1-4l-12-2l-1 6l12 0l5 10l5 4l6 2l3-8l9 8l1-8l2 9l1 10l7-5l7 2l7 2l0 5l-6-2l6-3l1-9l4-14l11-3l-10-3l10-10l2-3l6 11l1 5l6-4l7 3l0-5l-7 2l4 10l-2 6l1 6l-3 8l-7-2l-3 2l-4-7l-4 0l2 5l6 2l4 4l-1 5l4 5l-5-1l-2-5l4-4l3 2l5 5l5 5l4 4l9-2l-12-3l3 5l-1 4l7 1l4 4l6-5l9 4l10 10l8 11l2 8l4-9l-6 1l5-10l9-6l8-5l8-3l9 2l-3 12l-7-6l-7 3l9 9l-2-12l-5-2l6-6l-1-7l3 4l0-8l7 4l0-7l10-4l-1 3l5 8l5 2l2-2l3-7l-5-5l-10-3l1 4l9-1l8 0l3 6l1 4l-3-1l-1 5l7 4l-8 1l-7 2l-9 1l4-5l5-3l-2-7l-8-3l-3 4l2 8l2 6M810 511l-1 5l4-2l5-4l3 2l0 8l-3-2l0 5l6 4l2 4l0-7l-2 3l-5 3l-1-7l3-3l9 1l8 2l5-3l5-4l8-2l1 5l1-3l11 3l0 4l10 2l-8-8l2-8l8 4l6 1l11-3l5-2l5-3l1-3l3 1l7-4l6 6l4 0M810 511l3 3l5 4l3-6l3-6l5-3l7-2l2 2l7 4l2-6l11 1l-3 3l-5-1l8-2l2-2l4-1l3-5l-8 1l1-6l-8-8l-4 0l3 9l9-1l10-8l-7-6l-3 14l9-2l11 7l6 3l-3 4l-2 2l0 10l0 3l-10 1l-2 6l7 7l3-5l9 2l-8-1l1 5l7-4l1 6l9-3l8 0l-4-6l7 2l8-1l7-5l-5-7l-6 1l6 4l-6 1l-9-3l-2-3l-1 7l3-4l5 10l1 9l6 1l-2-6l7 5l-5 5l-8 3l-6-6l4-7l4 5l4-5l9-3l1-7l8 1l2-3l0 8l-7 4l2 3l6-2l2 6l7 4l-4-7l8-3l4 7l5-4l0-4l-9 1M810 511l-8 3l0-7l-8-4l3-3l-3 0l0 3l-4-3l0 6l-3-2l-1-9l-9-2l-1-2l-8-13l0-10l10-5l-11-1l-7 4l-6 9l-4-7l4-10l-9-6l-1 11l-2 6l8-1l10-2l-3-4l10 0l1-7l10 0l0-10l9 7l4-7l2 5l11-4l-10-5l-1 9l4 6l-4 7l1-6l-1-7l-6 2l7 5M810 511l8-1l0 8l-6 2l1-6M1148 276l-8-8l-4 9l-8 4l-9-8l-4-13l-1-11l11-4l-4 11l7 9l9-10l10 2l10 4l-7 11l-2 4l-9 12l-9-1l6-10l12-1l9 4l-7-8l14-5l-7-6l9-8M1157 280l-6 13l-12-5l6 12l-6 3l-12 0l-14-5l-4-8l12 3l-8-10l-4 7l-13 2l1 11l-7 11l-5-14l-5-12l3-4l-5-2l2 6l-5 10l-5 14l4 9l-7 13l10 2l13 6l-1-9l6 9l11-11l-8-12l10-5l9 0l9 1l1-12l-6-10l-8 5M1433 572l-11 2M1433 572l2-4l-10-1l-13-6l-4-3l-7 3l11 0l2-8l-6 5l-1-5l-11-1l6-7l-4-4l-10 3l0 7l5 3l3-2l7-6l-1-1l5-5l-9 1l-5 6l3 5l5 9l6-8l6-3l1 3M1433 572l-8-5l-12-3l-1-3M1226 543l2-2l5 2l10-3l6 2l-2-5l1-4l-7-6l-3-6l7-8l-12 1l-1 9l-3 5l-8-1l0 7l8-1l-1-3l1-2l-3-5l6 0l-6-4l-11 2l-5 2l-6 7l6 5l-1 4l-3 7l-9-7l3-5l-2-6l4-5l8 0l1 4l4 3l6 4l0 4l7 3l1-8l8 5l-5-8l10 4l5 3l12-1l3-2l4-8l0-5l5-10l2 9l9 5l-5 6l-4 9l-7 3l-3 5l4 3l11-5l-5-6l-7 1l1-4l-8-1l7 5l0 2l-9 1l-6 4l-1-4l-1-2l10-6l-2 8l-7 0l-11 4l10 4l-6 3l-3 11l-6 6l2-10l4 4l-2-7l5-4l-5-5l0 9l-6-2l-15-3l2 11l-5 5l-3 12M1226 543l6 4l1-4l-7 0l-8-3l-1 9l-4 1l4 4l0-5l9-6l-5-5l8-5l3-3l-4 0l-7-3l-6-6l0 9l-3 8l9-4l7-4M1226 543l-9 11M783 476l-6-9l1-4l0-8l-4-4l-3-5M783 476l1 11l10-3l2-7l5-10l-8-4M783 476l11 8l-3 6l-7-3l-8 4l-6 6l7-4l7-6l2 8l5-5l3 10l-4 0l1-10M794 484l4-1l8 6l4-8l6 6l4 9l-4 8l8-4l0 6l-8-2l-3-5l-3-5l-10 3l-3 3l5 7l5-5l3-8l10 2l4 4M1290 558l-9-3l-6-1l5-3l-2-6l10 3l3-4l-9-4l-9 0l-3-7l2-6l10-2l5-3l-3 4l-4 10l-3-5l7-5l-2-1M1290 558l-2-10l-7 7l-5 2l-1-3l3-8l2 5M1290 558l-4 11l-9 5l-9 9l-6-11l-2-12l-2-3l9-6l-7 9l-11 2l-9 4M1093 517l4-3l8-4l6-1l2-5l6 2l3 6l4-3l1-7l5 4l1 8l3-5l3-7l4 3l0-5l10 6l5 3l8 4l-6-8l12-4l-6-9l-6 13l-5-2l3 6l-3 7l3 7l-4-4l-7-3l2-7l5 5l4-5l2-4l-5-4l-2 5l-10-1l-2 9l-5-5l2-8l-9-1l3 6l4 3l7-4l6 4l-8 5l-7 6l8 0l5-4l4 7l0 5l9 3l3 4l-5 2l6 10l0 2l-13-2l-10 1l2 10l-13-6l-7 7l-7-10l-2-7l-8-8l-6-1l1-7l4 0l-5-4l1 4l1 3l3-3l0-9l-8-3l4 6l4-3l0-7l-1-7l3-8l12-2l11 0l2-11l-2-10l-13-4l7 9l6-5l8 4l3-5l-11 1M1093 517l7 5l-12 3l-2 3l-4-4l3-5l-4-3l-4 3l0-5l-10 2l-4-11l5-1l5 6l4 4M1093 517l-2-7l6 4l-2-8l-1-4l-7-7l11-1l-8-7l-10 2l7 6l3-8l-11-4l-11 6l-3-8l14 2l-11-9l-10-4l0-5l10 1l-1-12l5 9l11 6l-2 7l9 5l7 0l-3-7l13 0l5-14l-6-4l-5 6l6 12l-3 13l3 8l-4 6l-5-7l9 1l6 9l6-11l6-7l7-4l6 4l8 1l-3 13l-5 1l-6 5l-6 3l7 5l0 4l-6 0l7 2l0 4l8-4l9 3l3-4l0-5l1 2l11-3l5-4l-11-4M1093 517l-5 8l-6-1l-7 2l4 5l7-3M1093 517l-10-4l8-3M797 500l10 2M1505 485l-8-9l-14 5l-11-1l-14 3l11 7l-2 6l-5 6l2 7l0 9l5 6l-4 6l4 5l-6 0l-3-9l9-2l6-4l0 4l-2 4l11 0l1 5l-3 7l1 7l2 4l2 4l-5 5l-8-6l-6-2l-1-4l-2-5l-7 0l0-6l4 0l1 2l2 4l8-6l1 3l1 3l1 7l-8 2l-10 3l1 5l12 2l-8 8l-4 3l-5-5l-9-2l1-6l-5-10l-6 1l2 3M1505 485l12 0l4-6l-8-10l-8 3l-5-8l-10-1l5-5l5 6l5-8l8 7l0 6l-6 7l-2-4l8-9l12 1l-12 5l13 1M1505 485l2 7l-9 8l-6-11l5-13l-4-3l-13 0l10-10l-11-4l1 14l-14-2l-1-5l5-2l0-5l-5 7l-11-9l2-6M1505 485l-13 4l-9-8l-3-8l-10-9l9-5M1505 485l2-9l14 3M1212 538l-2-3l5-5l6-3l5-4l0-4l-5-3l-5-5l0 3l5 2l-6 0l-8 3l-1-5l-3-8l1-9l-10-8l-11 4l-6-4l-12-1l13-5l2-6l7 5l4-7l3 7l13-5l6 10l-9 10l-12 9l5 7l2-4l-7-3l-5 4l-5 0l1-7l-9 4l8 3l-7 3l6 1l4 7l8-3l1 3l1 1l3 6l-4 10l-10 3l-3 3l-4-8l7 5l13 6l-11 4l-3 10l-1-8l4-2l-5-7l-6-4l3 6l-14 1l-8-7l-6-3l4-2l4 2l2-6l-6 4M1212 538l6 2l-7 4l4 2l-3 3l-14 6l-1-8l0-8l5-2l2-7l7-3l4-6l11 2M1212 538l9 0l-3 2l-3 6l2 3M1212 538l-3 1l2 5l-5 2l6 3l1 1l2-4M1212 538l-1 6l1 5M1338 544l3 0l12-2l6-4l-4-8l-6 1l0-4l8-2l-4-14l1-9l7-7l10 4l-4 15l8 9l6 5l4-7M1338 544l0 3l7 4l-7 2l-5-3l5-3l3-3l4-8l4-5l-10 3l-1 7l7-5l-6-2l5-10l5 3l6 3l9 5l0 6l7-2M1338 544l0-3l-7-5l8-2l-2-7l7-3l5 7l5 2l-9 3l8 6l-4 6l-8-4l4 7l-4 7l1 6l0 5l-12 6l-3 14l-12 6l-13-6l11-7l2 13l11 9l7 12M1051 272l-7 9l13 1l-1 12l1 6l-6 14l-5-5l-11-4l-15 0l-7 0l4-12l9-6l9-4l7 7l4 12l10-8M1051 272l-8-5l1 14l-9 2M1051 272l12-6l-4-4l-9-8l4-6l-11 1l9-11l0-11l11 6l-11 5l2 10l5 14l-8 10l6 10M1175 540l2-4l6-6l2 3l-1 8l2 10l12 4l5 10l11 5M1175 540l-9-1l2-3l5-1l2 5l-11 7l-13 0l5-7l2-3l8 2l-2 8M1175 540l-7-4l5-5l-10-4l0 8l3 4M1297 430l-10 10l-8-7l-5 10l13-3l10 7l5 9l9-10l11 9l-1 6l-2 9l-5 13l-11 9l-13-3l-7 8M1297 430l8-2l10-7l6 6l7-2l6-6l5 8l6-6l11 6l1-9M1297 430l2-9l-13 1l-5 4l-13-1l-11-6l-5 3l-11-9l10-7l-14 0l-14 1l-6-10l9 3l11-6M1297 430l-11-8l8-11l5 10l6 7l-4-12l-2 5M1297 430l11 10l3 6l3-14l-6 8l-11 7l14-1l12 0l-3-14l8-7l1-11l-10 7l-4 0l-1 11l-9-4l3 12M1042 528l-3 1l-3 5l-6 9l3 3l4-9M1042 528l2-5l-10-3l-3 8l-4 1l-9-1l7-6l-5-1l-2 7l-4 3l1 6l7-4l4 4l10-3l-9-5l-5 4l-4-5l-2-3l-2 6l-6 3l-7-3l0 10l-4-7l-1-7l0-3l5-5l-1-2l-1-4l8 1l-1-4l-4-4l-3 7l-8-4l0-6l12 0l7 5l-8-2l1-3M1042 528l-3-4l-5-4l5-9l-2-9l6-9l6-3l1-10l-7 3l6 7l6-3l13 2l12 0l4 10l10 3l4-8l6-7l8-4l0-9l5-6l4-9l-5-6l6 0l10-11l-4-5l-12-2l4 11l8-9l5-11l7 7l-8 9l7 3l8-7l7-11l6 7l11-10l-6-2l-5 12l11 0l-5 7l4 14l2 6l5 6l3 10l11-2l3-5l4-8l4-8l-2-3l-7 5l-1 7l2 7l-9-1l-4-8l12-5l1 2l-2 5l-7 6l-8-2l-7 7l8 9l-14 1l1 4l9 6l9 9l0-10l-9 1l-8-2l-1-4l-3 0l-10-7l12 3l-2 4l4 4l-11 9l-1-5l-8-9l6-6l-3-7l4-5l12 2l7-10l-11-6l5-14l12 1l0 13l3 6l-9 0l6-6l-8 0l-9 0l-4 6l-6-7l-12 1l0-10l12 9l-1-10l-11 1l1-12l-1-9l-6 2l-10-5l1-7l8-5l-10-4l6-10l3-11l8-9l-11-1l3 10l14 0l6-4l-1-11l-11 6l-1-12l0-10l-7 5l1 13l7 4l6 9l0 9l13 6l7 8l-5 9l-10-10l-8 2l6 9l2-11l-11-9l-11-2l-13 0l-6-7l2-13l1-12l-7-11l-11 3l-9 7l-2-10l11 3l-4-13l5 0l10 10l11 6l-3-13l3-14l6-5l9 11l-6 7l-12 1l-8 7M1042 528l0 5l-1 8M1042 528l6 3l3-4l7-3l9-1M1319 560l5 6l-4 3l-1-9l-4-5l9 2l7-2l4 3l7 6l9-4l5-3l1 4l2-7l6-4l-6 2l7-5l-2-6l6-5l0-3l5 5l8 3l5 3l-7 3l-1-2l-7 3l8 2l7 1l5-4l9-2l6-2l-1 10M1319 560l-8 4l2 11l7-6M1319 560l5-3l-10-6l-7-4l1 8l-6 5l-3 1l2 4l10-1l-9-4M1024 407l-15 1l4-14l5-8l12 8l-1-8l11-6l-1-10l9 5l11 3l4-12l10 0l12 4l10 5l5 4l9 9l-2 7l0 13l-12-1l-8-2l9-7l4-8l9-2l7-5l12-9l4-3l6-8l-7-5M1024 407l11-4l6 14l8 5l-10-1l-5 13l13 1l-4 11l-9-12l-4-8l-3-9l-5 5l4 10l1 11l7 13l14-2l12 3l-8-13l-4 10l-5-8l9-2l6-13l8-7l11 1l11-1l8-7l11-5l9 2l-9-6l-11-10l11-3l8 0l7 10l2 9l-8 0l6-9M1024 407l3 10l12 4l-9 5l-4 6l-14-1l-6 0l1 11l11 4l10 11l-12-5l-14 2l5-12l-10-9l-1-5l0-12l4-3l15 0l-6-5l-10-4l3-6l11-4l0-10l-6-6l-5-13l7-12l12-5l11 8l-12 3l4 5l-11-1l7-4l1-11l-6-2l3-13l2-13l7 13l6-11l-3-12l5-5l11-3l0 7l11-9l-11 2M1024 407l-9 6l12 4l14 0l3-11l6-3l5 9l-11-6l1 9l-4 2l-2 4M1024 407l6-13l10 1l4 11l5-8l7-3l9 8l-10 9l-10 3l4 7l9 9l14 1l-4 9l-1 13l4-10l-3-3l-10-10l-11 4l2-13l6-10M1107 495l7-5l-2-7l9-1l4 4l-1-9l8 5l6 0l8 5l3-13l-11 8l0 4l0 10l5 4l11-4l12-4M702 508l-5 3l-10 1l-6-2l2-4l10 0l-3-6l7-4l-2-12l-7 4l-6 1l2 4l0 2l4-7l-4 5l-9-1l-2 5l-1-6l-13 4l14 2l6 3l4 6l0-3l-4-3l-4 4l-1 7l0 7l-1 5l5-2l-3 10l8-5l3 0l4-6l6 3l0-6l-9-5l-5 2l-8-3l-4 2l0-5l5-4l-2-7l-3 11l4 3l7-1l1 4l2 2l0 7l-6-2l-4-3l-4-5l-7-3l-4-2l-2-9l-3 13l-14-5l10 10l-13 1l5 6l6-4l-2 6l8 3l-3 7l6 4l0-6l-3-5l6 0l5 9l-4 5l6-2l2 8l-1 5l5 3l-4-8l-10 0l-4-1l6-5l-2 6l-7 1l-3-2l-9 3l-7 1l-6-9l-3 12l7 4l-2 1l2 4l-1 11l4-6l4-9l2-9l-3-5l-3-7l-7 4l-7-2l-4 3l-4 5l4 6l-4 3l4 4l5 2l-4-7l7-2l8-2l6 7l-5-8l4-6l2-1l10 3l3-5l-8-2l-10-2l-3-3l-4 7l10 3M702 508l-2-6l4-2l-3-8l-6-8l7-3l-1 11l5 5l7-6l7-2l-4-2l-3 4l-5-4l-2 10l9 3l-8 3l-1-6l7-3l7-5l6-5l7 7l8 11l6 1l2 6l0 4l-3-6l3 2l6-2l-7-7l9-6l-2-4l-6-4l-1 14l7-10l4 0l-3-6l3-4l9-2l-9 12l0-10l-5-5l9-3l-3-6l8 2l-1-6l-8-5l8-5l1 3l-9 2l-4-8l-1 9l5-1l-2 5l-3-4l-10 5l-8 0M702 508l-1 5l2-2l8 3l6 2l-4 4l2 3l4 7l-2 3l-3-6l-9-1l5-4l-6-2l7-4l0-2M702 508l-9-2l-6 6l3 8l6-3l8 3l-8 3l9 3l5 5l-8 1l-7-2l-2 4l-9 3l-8-3l7-3l-8 0l1 3l4 7l-9-5l-4-3l-2 5l-8-4l-6 2l-6-2l-7 1l6 6l7-5l-7 1l1-3l1-8l-7 4l3-6l-5 3l1 8l-4 4l5 6l5-4l0-4l-6-2l-7 1l-11 5l-3 0l-5 2l-8 5l-13 4l8-1l-6 4l8 2l-2 4l6 5l11 2l-7 6l-4-8l11-4l1-5l-5 1l-11-4l-8 1l-8 3l-8 2l-5 10l-5 2l-10-6l9-6l11 0l2 3l-7 7l11-3l2 5l4-6l0-2l-4-6l-2 9l6-1l4 9l-8-3l-1 6l9-3l5-4l3-6l2 2l2-1l-4-1l-12-1l-6 3l-4-4l6-5l6-6l2 3l6 6l2 4l-10-4l2-6M702 508l5-5l6 3l3-4l3 8l4 4l2-3l10 3l-8-7l11-1l3-4l-5-1l-3-10l-3 11l6-1l2 5M768 468l9-1l11-6l-10-6l9-3l1 9l5 7l8-1l8 4l-3-7l12-1l5-6l-2-11l6-7l3-7l10 8l9-3l5 4l-2-8l-9 1l2-7l7 6l-3 4l-6 12l-8 1l5 7l11-2l2-11l6 7l3 5l-11-1l-8-6l-3-9l-4-10l7 4l6 3l4 7l7 2l3 6l10-8l-13 2l-6-5l9-7l7 0l13-3l1-8M777 467l-3 8l-6 3l-5-6M1114 524l7 2l4 4l-3 4l-6-3l5-5l-3-6l-6 0l-7 6l1 8l11 4l5-4l-1-8l8-2l-4 6M1114 524l4-4l9-2l-1-9l-7-3l-1 10l-7-7l-1-3l3-2l-9-1l6 3l-5 4l3 3l3-4l8-3l0-13l8 9l2-2l9-4l0 5l1 1l4-2l12 1l0 2l-2 3l-4 3M1114 524l2 7l1 7l11 4l2-7l2-8l4 9l4-3l2-7l-2 5l-8-4l2-3l6 7M605 572l-1 4l-6-5l-1 6l-2 9l-3 2l-4-6l-4-4l0 8l1 5l-8 11l-1-6l1-7l-3-4l-7 9l-4-8l-6-3l0-8l-10 3l-1-3l-2 7l-4 5l3-13l1 8l13 1l-3 8l9 7l0 5l-7 12l-1-14l-4-4l-7 3l11 1l-1-10l-3 6M605 572l-7-1l5-4l2 5l0-6l7-8l-11-1l0-3l11-5l5 0l-1 6l1 2M605 572l4 2l1 4l-6 3l-7-4l7-1l6 2l9-3l-2-4l6-5l8-2l7-4l6-1l-4-8l6 2l1 7l-3-1l2-6l3-5l-5-7M609 574l-5 2l0 5l6-1l-6 12l2 3l12-2l-7 9l-2 15l-10 5l10 0l0-5M609 574l10 1l4-9l-2-2l3-9l-3-7l-1-7M609 574l8-3l-1-3l5-4l8-4l-5-5l-7-6l4-1l-5-4l-4-1l-1 5l-7 0l-5 3l2 3l3-6l8 1l-1-1l5-4l1-3M616 544l1 5M1060 218l3 7l-11 2l-8 1l-7 12l-3-12l10-9l7-11l-5-5l-8 12l-4 13l10 0l0-9l8 8l8-9l-9-10l-3-11l-11-6l-8 12l-6 10l-2-10l-10-7l-2 4l12 3l-2-10l9-8l-7-5l-1-10l5-9l-2-9l-8 1l5-13l4-3l10 2l5-4l-3 11l12 7l-2 7l4 4l-13 5l9-9M1097 244l2-7l3-12l7-8l-7 0l0 8l-9 2l-11-2l-8 12l6 7l-9 7l3-14l8-4l-2 11l2 13l-5-1l3-12M1097 244l12 2l-10 9l7 11l-10 3l0 8l10-11l9-6l6-4l-7-7l-5-3l6-12l10 11l3-5l0-13l7-8l-9-6l11-4l-2 10l6-5l-1 12l-5 9l-7-8l-2-14l-7-10l-10-8l-12-2l10 8l2-6l12-5l8 5l-10 8l12 4l3-3l-5-9l5-3l-13-2l-2 13l-12-2l-12 2l-10 11l-8-2l-8-12l15 3l-7 9l5 13l3-11l-1-11l-2-11l-5-7l-7 4l12 3l15 1l-2 10l-11 0M1097 244l2 11l-3 14M710 531l4-4l1-4l-5-1l1-6l-10-3l3 7l1 6l-3 6l-9 2l-7-8l9 4l1-7l-10 3l-2-3l6-3l-6-4l3-4l-4-6l-8-2l6 6M710 531l7 2l13 4l-1 8l6-9l-7-7l7-3l-10-4l3 7l-9 1l4-3M710 531l1 14l6-12M711 545l2 8l0 4l-8 7l-7-10M982 538l-4 3l0 7l14 6l-9 6l8 12l2-12l-1-6l0-5l9-8l5-3l-5-7l4-8l-9 4l5 4l-4 3l-7-4l-1-4l7-2l9-1l3 11l-2 4l5 13l4-4l0-10l-9 1l9 9M982 538l3-6l7 5l-2-7l6-3l-7-1l-4 5l0-8l-1-2l-1-9l4-6l2-6l0-7l5-2l-4-11l-6 9l-4-14l0-15l2-6l-13 1l6-13l4-7l-8-1l4-12l-8 4l-4 9l4 11l2 9l11 5l10 12l9-11l6 13l2 9l1 5l0 7l-12-3l12-4l-10-6l-7-7l14-1l6 1l-4 8l6 3l8 8l11-2l-2 14l7-4l6 3l3 8l4-6l-7-2l8-3l12 1l2-8l-10-8l10-6l3-7l13 2l13-2l7-12l11-2l0 14l9 8l-7 8l11-4l5 7l8 3l8-9M982 538l-6-5l9-1l5-2l-5 1l0 1l1 10l-8-1l-3-4l-6 6l-6-7l-1-9l10 2l1-1l12-5M1059 180l5 10l7-11l6 6l-3-15l-5-8l2-11l6 13l-8-2l-10 9l12 8l-12 1l-11-7l-11-4l8 12l-8 10l-9-6M1059 180l0-9l-9-7l-2 9l11-2M1059 180l-14 1l3-8M577 575l8-3M577 575l-5-5l-7-7l1-3l6 10l1 5l1 4l4 2l-5 1l1 3l4-4l-1 8l8 2l-9 5l-1-5l-1-6l-9 0l8-3l-9-1l9-6l-6-3l-3 9l-1 5l2-1l-1-4l-4-4l-3-11l0 9l-11 0l-3-1l-5-4M577 575l7 3l-6 3l-1-6l6-8M577 575l-4 0M577 575l-3 4l-1 3M574 579l-10 2l-7 2l3-6l-3-2M1267 551l-1-8l12 3l0-1l4-5l-2-4l7-2l7 4l-3-7l7 4l-1-5l-3-3l14-4l-2 4l3-3l4-4l2-6l7-5l3-5l5-4l13-1l-4-7l-9-8l-10 4l-6-5M1267 551l8 3M1267 551l9 6M1311 538l-8-2l3-9l2 5l1-8l9 2l-5-6l-5 3l1 1l5 6l-6 2M1311 538l-5 4M1311 538l5 6l6 1l-8 4l-7-2M1128 240l-9-12l-4 6l13 6l7-5l14 3l-4 13l10-4l-8 10l-2-6l-8 4l3 13l-12-3l-13-5M1135 235l9-4l-4-5l8-4M1119 506l8-4M927 450l2-7l-1-7l-4 7l3 7l-10 6l-12-5l4-6l-11-2l7 8l-5 10l9 0l5 7l6 2l9-3l-6-6l-7 3l-7-3l-6 3l11 4l5 6l-5 8l-9-8l-10 3l3-7l2-9l-8 2l-6-1l-9 5l-2-4l4-6l6-8l10 3l3-9l5-5l2-1l8-4l0-6l-1-10l12-2l9 11l8 10l4 1l0 10l-4-11l-12 7l9 10l13 2l8 2l6 3l4-5l-10 2l-2-14l6-8l8-1l4 8l14 0l1 11l12-8l-13-3l-7 12l5 7l-7-1M927 450l11 3l4 6l-10 6l-3 8l10 2l1 9l-1 6l8 4l1 8l4-7l6 9l10 1l7 1l-6 4l5 2l3 7l-10-3l2-6l-1-5l1-3l10-2l-4 6l-1 6l-7 4l0 8l10-5l7 2l-11 7M927 450l-4 11l-6-5l-1 8l4 6l9 3l-9 9l9 6l-10 7l12-2l4 11l12 2l-6 4M539 393l-6 2l-2 9l-3-9l6-3l6-2l6 4l2 4l5 7l4-3l2-4l4 7l4-2l0-7M539 393l4 5l5 0l8-2l-3 9l8 12l3-9l6 5l4 4l9 5l-7-6l-2-7l9 3l2-1l5-5M539 393l1-3M539 393l7 1l2-5M539 393l-5-1l0-7l-9 3l-2 3l-9-4l3-9l-5 4l1-4l-5 4l1-10M1407 527l2 8M1354 533l-1 9l1 3l-3 8l8-1l0 2l-8-1l-10 5l-6 0l7 11l4 5l6 6l1 9l-6 13l9-3l8-4l-11-6l3 10M1354 533l5 5l5 3l2 3l0 3l4 7l11 1l10 2l-10 0l2 4l-10 1l8-5M1354 533l1-3l6-4l6 4l9-4l-1-3l-10-1l2-8l-14-3l-10-12l12-6l-1 9l-11-3M990 472l1 3l-1 5l-10-5l-7 2l-1 4l-8-3l-12-7l-12-2l10 5l-11 1l1-6l2-10l9-4l-6-8l12-4l10 3l8-4l7 12l8-1l12 1l-3 7l14 0l6 2l11-2l11 3l-7-8l-6 1l-1-14l7-9l-8-2M990 472l-3-11l12 0l8 9l4 5l8-12l-3-11l-3 9l-6 9l-2 4l-7 8l9 1l10 0l4 11l-5 10l-8-9l2 13l2 3l-5 3l9 2l4 5l-4 4M990 472l-10 3l11 0M980 475l-8 6l12 8l-12-3l1 6l11-3l-5 11l2 3l6 3l4-3l-2-3l-10 0l10-7M1273 540l5 5M1273 540l7-4M1273 540l-6-3l0-6l-1-5l6 1l5 4l-7 2l-3-2l5-4l-6-6l-1 3l1 2l-9 5l-7-1l-9-3l1 7l-5 4l6 2l-4 8l-1 2l-6-3l0 10l6-7M1161 478l3 6l6-10l10 3l5-8l6 6l12-4l4 6l7-9l-6-9l15 5l6 12l9 13l2-8l9-10l-5-9l2-10l-1-5l7-12l7 5l5-9l-7-12l11-5l3 6l-3 5l11 8l2-7l-10-6l11-9l4 11l-15-2M1161 478l9-4l-5-3l-8-10l-4 8l-1 12l9-3l4-7l12-4l4-6l11 2l6-1l5 9l5-12l-10 3l-4-4l6-7l6-7l-6-2l1-8l5 10l10-8l1 9l-11-1l-4 10l-8 4M1161 478l-8-9l-12 2l8 3l-11 2l0 6M1128 281l2 6l-9 6l7-12l-15 2l6-10l-13-7M1142 526l9-3l7 0l5 4l8-2l3 2l9 0l5 2l7-7l2-9l9 1l-2 2l-7-3l-3 8l-9 0l-4-4l3 7l4 5l6 9l6-4l2 3l7 2M1142 526l9 2l7-5l7-3l6 5l2 6l4 5l-4-1l0-4l1-4l9 3l0-3l1-3l1-3l3 8l10-1l6 2l-4 4M1142 526l9 5l-1 6l-10 4l-12 1l-1-5l-10 1l-3 4l-13-2l5-6l10-3l-11-5M944 548l0-7l3 3l10 3l12-4l9 5l14 1l0-12l5-3M944 548l13-1l6-11l-11 2l-5 6l-3 4M371 369l-9 6l-4 6l2 7l-8 8l1 4l13-5l12 8l11-7l1-6l10 8l11 9l-13 4l2-13l-7-12l-8-13l9 6l-1 7l-3 4l-11-6l-6 6l1-10l-3-11l7-5l6-3l1 6l-7-3l0-4l2-4l3-3l12 5l-11 3l9 0l-1 8l-5-5l6-3l4 7l11 0l5 3l4-4l0 5l8 9l0 6l10 3l-14 5l-7-5l2-4l9-5l3-5l10 2l-3 12l-10-9l13-3l0-1l-7-6l3-4l-6-3l0 4l6-1l-7-5l1 2l-5 0l5 4l3 3l-4 4l-10-3l6-8l-6-2l0 5l-3-2l-1 6l-1 1l5 0l-1 14l-4-14l-4-4l6-3l3-3l-8-2l-1 8l-4-5l-7 5l-4 8l-8-3l4-1l-1-2l-1-6l-2 3l3 3l-3 3l-7-2l0-7l-9-3l-4-8l3-4l6 7l4 4l-9 1l5-5l1-2l3 6l6 1l3 3M371 369l-13 2l-7-8l-3-5l-5 0l4 4l1-4l5-3l10-5l-4 7l-6-2l-3-5l-3 4l3-6M371 369l-13-8l0 10l4 4l12 5l5 4l-1-13l-4 9M371 369l-2-8l-11 0l1-4l6-4l9 3M371 369l7 2l7-4l0 6l-6 11l14 2M501 584l-3 5l0 10M501 584l-9-4l6 9M501 584l6-5l-4-14M744 474l6-6l7-6M744 474l-2-5l-7 7l-5 5l9-3l10 8l-14 2l-9-4l-10 3l-2-7l-8-4l11 2l2-4l-9-6l7 10l-3 2l-6 7l-2-11l-4 5l-7-9l0 12l-5-4l-2 6l-6 3l-4-2l-4 3l-8-5l6 6l2-1l1-7l0-6M744 474l10 1l-1 4l-4 7M744 474l9 5M744 474l-9 2l-9-3l4-3M1388 512l8-8l12-1l12 5l2-6l14 7l0-10l-14 3l-10-9l0-13l-6 4l-13-4l-8 9l11 2l10-7l6 9l-4 10l-7 10l-3 10l3 6l-5-1l-4 5l-3-10l9 0l-2 5l-7-5l-3 6l6 4M1006 510l6 1l8-5l3 7l3-4l4-3l9 5l7 2l4-2l0-4M903 464l-5 6l-10 1l7 6l-8 3l-5 3l2-8l3 5l8 6l5 9l7-7l-4-6l2-8l14 0l1 8l12-1l8 3l-11 4l10 2l-8 3l-2-5l3-7l7-6M903 464l-3-3l-5-9l-3 4l8 5M903 464l2 10l9-6l2-4M905 474l-7-4l-6-7M713 491l0 3M837 476l-2-6l-10 0l-7-7l-8 6l-1 2M837 476l3 12l-7-7l-2 7l-12-4l7-10l9-4l0-7l5-6l4 11l7 8l1 5l-1 9l8 5l-1 7l8 4l2 6l5-3l-7-3l9-3l-11-4l2 7l-8 4l-2 4l-7-5l1-5l-3-3l-9 2l-2 3l0 4l9-3l5-3M837 476l11 5M837 476l7-8l7-13M837 476l14 0l12-1l7-5l0 6l7-9l11 4l-4 4l-14 1l12 7M837 476l-4 5l-14 3l-9-3M837 476l-11-2l-1-4l0-10l-7 3l1 11l6-4l10-7l-3-8l3-5l-6 1l-8-5l-2-8l-6-5l-5 13l-1 5l7 5l7-10l7-2l7 6l3-5l5 4l10-5l1-3M697 511l-1 6l5-4l-4-2l-4-5l7-4l-10-2l-2-12l9 8l7 4l2-3M1014 265l12 6l-5 12l-4 10l-6-13l10 3l5 4M1014 265l-4-7l-1-13l-14 4l2 8l-1 14l4-3l10-10l-13-1l3 11l-2 13l13-1l-6 11l12 2l3 12l10 5M1014 265l-3 15M1014 265l-14 3M1014 265l13-7l6-1l-5-10l-9-2l-10 0l4-10l-11-9l7-11l-6-4l-11-6l-13-4M637 518l11 2l6 4l6-1l1 5l7-8l2 8l5 3l-8 2l-7-4l-6-5l-4-7l4-5l9 4l-6 4l3 3l3-7l0-6l7-2l-11 0l4 8l7-3l-2 7l6-2l8-4l-4 7l6-5M637 518l3-11M637 518l0 9l2 3l6 4l9-5l0-5l3-4l-3-8l5-4M637 527l-6 9M795 510l-1-7l-4 3l-3 6l4 8l7-4l-3-6l7 4M919 495l-5-5l-4 5l9 0l1-13l-6 8l0-8l-11 0l-8 4l-9 11l14-2l-9 6l-2 4l-8-2l5 6l1 5l8 3l-1 7l-4-4l-9-4l0 3l-2 6l11-5l-3-6l-6 2M919 495l0 5l8 3l-2 3l2 5l-8 2l0 5l-2 7l6 2l-2 8l8-2l1 4l5-6l-8-1l-6 5l9 2l4 4l3-4l3-3M919 495l8 8l4-10M1341 544l-3-3l-9 1l2-6l-1-6l4-6l10 0M1506 527l1-10l4 6l6 1l-5-4l-5-3l-6 3l0-9l6 6M1506 527l4 4l-4 6l0-4l4-2l6-5l-5-3l-1 8l7 2l2 7l-8 5l0 7l-8 0l8-7l4 2l2-2l-6 0l-8-4l-3 3l2-6l-2-7l-4-4l-7 3l2 5l-6-2l5 3l3 5l7 3l1 4l10-3l-5-8l13 3M1506 527l-6 4l-7 10l-2 4l-6 6l-2 5l-9-2l3 9l9 6l9-8l6-4l-9-2l3 6l-1 0l-4-4l-4 12l10 11l3-3l8 1l6-12l12 2M1506 527l-5-7l-3 4l-4-5l-8-1l-3 2l6 4l7 3l-2-8l7-8l-3-11l14 1l9 8l-9 11l-1 3l-5 4l-8-3l2 7l6 2l-4 5l1 3l3-4l11-4l6 4M1506 527l0 6M894 444l-10-5l-1-8l5 4l8 5l2 3l-4 1l2-4l-3-12l-5 7l-4 4l-2 4l-5 6l-1-8l-9-3l3-4l6 7l6 2M894 444l-6-9l0-8l-5 4l-7-5l-6 8l-5-5l3-5M894 444l1 8l10-1l4 10l8-5l-8-11l4-12l-10-5l0 10l-7 2l7-12l10-1l7 0l4-12l-3-6l11-3l7-10l-13-3l4-6l-7-4l-9 1l6 5l10-2l9-6l-9-11l9-3l0 4l-9-1l-7 7l0 6l-3 6l-3 4l9 0l-12 7l1 6l-6 3l3 8l8 10l8 9l5-10l8-1l7-6l8-12l3-10l7 12l6 4l2-4l-8 0l-5 8l11-4l13-1l11 4l-6 11l7 6l9-2l0-5l-6-13l9-5l-7-10l-6-2l-7-12l-3 9l6 12l-7 7l-10 10l-3-9l-5 13l-15-1l-7 12l-4-12l11 0l9-8l6 9l4 8l-4 12l-8 11l-4 7l-4-9l6-12l-12-6M1451 533l0-6l1-4l10-2l7 3l4 4l1 2l10-2l5 2l-4 3l-11-3l-9 0l8-2M1451 533l2 8l5-4l5-2l-1 2l7-2l4 2l12-4M1451 533l7 4l-3-8l-4-2l-10-3l11-1l-4-14l-12 0M1451 533l4-4l8 6l2-5l-5-4l-5 3l-3-6l8 3l2-5l2-3l11 2l8 0l3-8l8 7l-5 5l0 6M1451 533l-4-3l-6-6M1023 376l6 10l10-1l1 10l-5 8l-5-9l9-9l1-5l8-5l5-6l10-3l-15-2l-10 3l3-9l0-10l12-5l-3-6l-8-4l11-8l8 2l13-6l4-5l12-2l8 5l-11 5l3-10M1023 376l-5 10l0-7l-11-1l-12 6l1 12l3 8l-7 1l4-9l-10-3l-10-8l3-6l-2-11l-7-9l-1-14l1-12l-12 0l2-10l-4-11l-13 2l2 8l-6 3l5 5l14 3l4 11l-3 10l-6-10l5-11M1023 376l6-7l9-2l-6-11l9-8M1023 376l-5 3l-5 5l5 2l11 0M1023 376l1-12l5 5l3-13l9 2l7 6l5 5l6 9l9 6l5-5l4 8l0 6l8-7l-8-10l8-6l0-8l-12 4l4 10l0 11l-6 7l-3-10l-13 3l1 8l-6 8l-1-5l6-11l-7-12l0-11l-9 6l-1-3M1024 364l8-8M1321 427l-2-6l9 4l8 8l11 0l9-6l15 0M1321 427l-1 5l-6 0l7-5M1486 512l3-12l3-11M1486 512l0 6l3 6l-5 4l-1-8l-8 4l9 4M1486 512l-11 8M1060 457l8 9l-10 4l0 4l-3 13l-4 6l14 2l3-6l6 7l6-7l-1-6l2-7M1060 457l-2 8l-10-11l-7 10l3 7l-3 5l2 7l0 10l-7-3l1 12l-5-10l1-12l3 10l7-7l-10-3l-6-4l-3 10l9-6l2-9l9 0l14-1l-9 7l1 3l8-6l7 7M1060 457l7-3M1476 550l7-3l-8-4l7-3l9 5l4 3l5-4M1476 550l9 1l7 4l-5 0l3 2l2-2l3-7l6 9l12 9l-13 8l7 4l-1 11l-7-12l1-3l-5-13M1476 550l-9-2l-6-1l-3 8l-7-3l7-9l5-4l6-4l5-5l-1 7l9 3l8-4l1-1l2 6l2 7l8 4l4 2l4 0l3 1l-1 11l-2-12l0-2l4-5l8 4l-9 4l14 2M1476 550l-2 4l-3 8l6 1l5-3l8-3M1476 550l7 6l-1 4l4 9l-2 6l12 5l10 9M1483 556l4-1M1315 421l0-6l4 6M427 375l1 1l10 1l-4-10l10-2l6 3l-3-4M427 375l1-7l-11 4l-4-1M427 375l-2 6M837 541l3-5l-3-6l4-3l12-5l4 2l7 3l-1 7l-2 3l-3 2l-3-5M837 541l-4-7l7 2l10 7l-4 7l-6 8l-15 2l3-9l-9 0l8-9l1-6l5-2l4-4l1-7l1-6l4 3l-2 7l-3-4l-6 4l-6 4l7 3l-1-7l-6-3l-8-1l-8 5l0 8l5 6l2-6l6-2l-4-4l-9-2l2-8l6 3M837 541l-10 1l5 11l5-12l13 2l14-3l8-2l4-8l4-4l-1-1M957 547l13 3l-1-7l-2-8l8 2l-3-8l-5 6M957 547l-5-9l-8 3l-10 0l-5 8l-4-1l-4-13l-5 1l0 4l2 5l-10 6l-6 8l-5-7l11-9l2-8l-8 2l-3-2l7-5l3-4l5 4l3-5l-4-6l0-5l-9 2l-1-7l10 5l-5-8l-5 1l6-4M957 547l-7 9l5 10l-4 5l-1-15M725 511l2-4l-7-6l-5-1l-2 6l6 4l-2 6l-6 0M841 514l7 2l1-7l-4-2l3 9l5 6l3 4l1-2l0-5l12 0l2-2l10-4M841 514l2 6l10 2l1 9l-10 4l-4 1M841 514l-2 3l-8-1l-4-7l-3-3l-9 0l1-2M839 517l-9 4l1-5l-10-4l6-3l6 5l3-4l-9-1M1376 526l-6 7l8-4M898 511l-1-8l6 4l0 2l-1 4l-7 4l6 3l1 4l-6 2l-7 7l5 5l0 3l-9-3l8 8l-15 2l5 11l3 14l-8 12M898 511l4 2M898 511l-3 6l-5 3l-2 7l8-1l-2-2l7-4l-5 6l2 4l4-6l2-8M1469 535l-4 8l9-3l8 0M1465 543l-4 4l7 5l-9 8l4 10l-9-2l5-8M642 524l4 2l8-2M684 495l6 5l-7 3l1-8l-5 5l-4-8l-3-1l-8-6l-1-10l1-7l6-4M679 500l5-7M655 548l-3 2l-5 10l-9 0l-7-1l0 5l3 5l14 3l-1-12M655 548l-3-5l5-3l4 3l8 6l11-8l4-4l-1-6l3-5M655 548l2-8l8-2l2 3l4-5l5-2M910 535l6 5M649 479l14-4l-9-4l10-3l7-1M649 479l5-8l-1-14l-12 3l1 6l11-9l-3-3l6-3l-3 6l6-3M649 479l7 10l1 10l2-4l5-10l-8 4l3 6M649 479l-10 2l-3 7l-8 3M649 479l2-6l-9-7l-5 4l-11-2l4-10l7 12l2 11l-4-8l-10 0l-10 6l-9-4l-1-9l-8 13l-9 9l-12-8M1437 547l6-4l-2 7l9 8l1-6l10-5l-3-4l-5-2l-5 5l-5-3l-7-2l-12-2l-4 5l4 5l-11 1M767 452l7-1l4-6l13 0l-4-6M774 451l-6 4M1197 513l-4 5l-6-8l10 3l5 10l-7-1M1202 523l2-7l3 3l3 4M1202 523l5-4l8 2l6-5l5-11l-10 6l-13-5l-4 3l7 5l10-3M1202 523l2 7M1491 545l-8 2M1491 545l-1-9M1491 545l1 10l2 6l-8 8M393 376l-1-7l-3 3l4 4l1 3M1112 144l8 0l-7 8l-10 10l-5-11l12-4l-1-8l9 1l-6 4l-2 3l-13-5l-13 8l-6-13l-4-2M1112 144l-3-5l1-5M1112 144l1 8l11-1M1113 152l5 6l-4-2l4 4l-8 8l-7 6l-8 10l14-1l6-1l9-4l-3 12l-6-8l4-15l-9 1l-7-6l11-6l-4 12M1113 152l1 4M1113 152l-3-5M1184 426l-13 8l11 2l11-3l8 1l-6-7l4-9l-6-1l2 10l13-2l8 11l6-12l-14 1l-7 9M1184 426l9-9l-14 1l-7-2l5-8l-5-10l-7 9l12 1l2-12l-3-10l-4 12l-9-10l-14-1l9 12l-8 7l-5-13l4-6l9-7l-7 0l1-12l5-11l6 7l8-12l-7-11l10 3l4-8l5 12l12-8M1184 426l-5-8l-8 6l1-8l-12 0l-12 1l6 10l11-5l7-6l-7-9M1184 426l-13-2l0 10l7 8l5-1l-1-5l-4 6M1184 426l9 7l7 9l0 9M1184 426l11 1l-2 6l-10 8M1184 426l-2 10M359 357l10 4M1138 476l-6 6M344 364l1 0l-2 5l8-6l-7 11l1 10l-8-3l-2 6l10-3l-2 10l-8-7l-12-6l-9 10l-4-9l-11-1M344 364l-8 0l-1-4l8-2l-7 6l-5 7l-2-6l-8-2l-5 3l0-6l5 3l10 8l-8 10l14 0l-6-10l13 3l14-3l0 10l-13 3l7 12l14-1l7-5l-13-2l6 7M344 364l3-2l4 1l2-8l1-8M344 364l-1 5l-12 2M344 364l-1-6l-3-8l-6 1l0-3l-1 5l-6 2l-3-9M1161 455l-10-1M1440 482l-11 7l7 10l-1-7l14-4l-9-6l-9-2l-13-3l-12-1l5-12l-5-9l10-1l-5 10l-10-5M1440 482l-10-11l0-4l-2-8l-7-12M1440 482l-5 10l-6-3l2-9l-1-9l6-5l9-8l3 4l-12 4l-8-7l-12-5l-7-5l-8-9l6-7M1042 533l7 5M932 521l-4-5l-9-3l1-4l-1-9l-9-5M1241 455l3 7M1241 455l4-8l-13-7l5-10l13-5l-9-12l-4-7l-11-6l-6-11l13-4M1241 455l5-3M329 365l1-7l5 2l-1-9l-1 2l2 7l-6 5l7-1l7 5l1 5l-7 7M987 461l3-8l9 8M990 235l8-2l4-7l13 2l5 6l8 13l9-7l6 9l7 5l-7 13l-10-10l10-8M990 235l2-11l-3-6l-14 2l5-8l-1-2l13-5l-12 7l-8 2M990 235l5 14l-7 12l-13 0l1 7l-7-1l-7-12l13 6l-6 6l-8 6l-2 5l11 5l13-5l-7-10l12-7l8 10l2 10l7 10M735 526l3 9l3-4M1163 527l-3 4l-2-8M1163 527l2-7l1-7l5 5l0 1l0 6M1163 527l5 9l-5-1M1477 563l7 12l-6 12M945 514l4-3l3 6l-5 4l1 3l9 2l0 4l-9-4l-7-2l-6 7M945 514l-4 10l6-3l8 0l3 1l4-3l3-6l4-3M945 514l7 3l7 0l6-4l2 3l-5 3l0 8l-5 3l6 6M945 514l2 7M945 514l-11 4M1411 529l4 5l6-4l5-7l1 10l4-7l2 3l6 4l-4 4l-11 2l-6-1l-2 2l-6-2M1415 534l3-7l3 3l3 9l1 8l-5-3l-2-6M1469 524l6 0M1082 192l13-8l2 9M1315 465l7-10l8-1l7-7l6 10l-1 7l-2 6l10-7l1-12l0-8l-14 4l-14-1l7 8l13 3l7 6l6 11l-12 5l11 4l6 12l-6-2l0-10l1-9l12-5l5 10l-3-12l-3-9l6-3l8 10l11-7l-9-8l-12 1l-4-9l10-8l-1-4M1315 465l6-4l9-7M1315 465l4 5M928 436l13 0l0-11l-5-13l4-6l-8 0l4 6l12 7l13-2l-5-10l-8-10l-9-1l8-13l5-3l10-2l0 9l-9 2l-6-6l-8-2l0-10l8 12l1 14l5-8l6 8l3-10l9-6l6-13l-12-2l-6-12l10-9l7-13l2-7l6-6l4-10l6-4l-4-11l-3 11l7 0l14 7l5 2l7 6l-9 5l-11 0l2 12l9-12l2-11l0-9l-5 7l3 13l7 8l9 0M373 390l5 13M1153 506l1 8l-7 2l-6-2l-8 0l-6 4l-9-2l-10-3M1160 531l-9 0l0-3M859 451l4 1l4 3l-5 8l11-3l2 3l-5 7l3-10l4-11l2 8M863 452l-1 4M501 394l3-7l-9 1l1-6l-4-4l-7 1l-1-10l-5 5l0-3l-6 1l1 9l9 0l-4-7l-5 7l1 5l5 5l7 11l-1 6l4 8l0 13l1 12l11-9l0 12l14 2l11-4l4-12l3-10l7-9l-4-6l-6-1l-7 13l-2 6l9 7l-2-13l7-5l5-1l1-4l6-4l-2 13l-4-9l1-9l-10-3l-5 0l-5-4l-2 8l10 5l-2 13l-5 0l-8-2l-4-7l5-8l-1-6l7-3l-9 1l-13 7l-7-8l-5-2l-1 8l-8-6l3-10l2-2l4-5l3 4l2-7M501 394l-7-3l7 10l0-2l11 9l9-9l-4 1l-3-8l0-5l11-3l0 4l-11-1l-5-3l-6 0l-7-2l2-4l5-4l5 8l4 0l-3 2l-5 3l10 5l-13 2l-6-6l-6 1l-9 2l-9 6l-9 1l-1 12l-11 5l-5-4l-8-9l5-4l-1-14l-3-6l5-4l1-2l0-7M501 394l0 5M693 506l-10-3M877 449l8 0M877 449l-4-5l3-3l7-10M877 449l-10 6l6-11l-6-6l-4-4M778 455l-11 7M846 494l-6 5l-10-5l6 7M846 494l13 1l1 5l6 6M846 494l5-4l-11-2l6 6l1 7l12-6l5 4M955 464l-3 7M955 464l-13-5M955 464l10-4M858 510l-3-5l-6 4l9 1l10 2l3 5l10 2l9 1M858 510l0-8M858 510l0 6l-2-2l-3 8l4-3l7 8l12 3l3 4l3 8l11 4l1-5l8-4M858 516l10-4l1 7l-5 8l5-4M1135 219l5 7l-12 1l-9 1l-10-11M1140 226l8 1M1025 561l-1-9l-2-12l4-3l4 6l-4-3l-2 12l-13-1M601 587l-6-1l2 9l-2 12l-4 9l-11 6l-9-4l6-9l3 13l7 12M601 587l3 5l11-6l11-1l-8 8l-3-7l-5-8l0 2l-9 7l-4 8l-5-7l-7 3l12 4l9 0l9-9l4-11l7 10l2-9l-5-10l7 9l-2 1l-9-1M601 587l3-6l-9 5l-7-4l-4 4l8 2M1174 344l9 4l-7 6l1 14l-7 7l2-6l5-1l10 7l1-9l7-10l3 6l-10 4l-11 2l6 11l11 8l0 11l-6 9l-9-11l4-9l0-8l-13-4l-10-5l-2 10l-6-12l-2 1l-12-6M1174 344l2 10l-5-2l-14 5l-7 12M1174 344l-3 8M1313 575l0 7M1109 246l-10-9l-6-10l9-10M779 535l7 1l2-8l4-3l6-6l2 9l4 2l6 6l-11 2l-2-5l7-3l6-2M779 535l-4 4l1-9l7 1l5-3M779 535l-3-5l-6-8l-5-4l6-7l-1 11l9 5l-2-11l-1-4l7 4l2-7l-4-4l6-1l-2 5l2 3M1181 514l0 3l-6-4l-4 6l10-2l-7 10l10-3M1181 514l1-4M1181 514l6-4l-4-7l-11-2l2-7l3-5l1-6l9-1l7 7l0-7l-7 0l-4 11l5 10l-5 0M1044 281l-2 9M965 366l5-7l10-7l9 6l13 7l-8 9l1 10l-6 0l-10-5l-8 2l-2 12l-7-6l-10-7l3-9l-6-4l-10 0l2-11l8 11l3 13l1 9M965 366l-10 5l7 7l9 3l5 4l-7 8l-10 4l-11 0l-8 9l-1-10l-9-9l-7-10M965 366l-3 12M1083 469l4-5l4-9l-4-8l12-2l9 0l-8-10l-6 0l7-12l4 4l11 8l-8 10l8 8l-10 3l-15-1l8-10l1-10l5-8M1083 469l2-12l2 7l7 10l-4 7l-11 2M1083 469l11 5M1039 524l-8 4l5 6M1340 470l4 9l-14 5M1344 479l-5 13l-9 8M760 530l7-2l3-6l-6 3l1-5l-6-6l-1-3l-9 2l3 4l1 2M1118 520l0-4M1107 474l5 9M1107 474l5 0l12 3l-3 5M1107 474l-10 7l7 6l10 3l5 3l10 7l1-7l8-7M1464 509l5-7l-7 0M596 409l0 6l2 5l6 6l1-10l3 8l4 4l7-1l6-3l-2 6l6 2l-6 1l6 5l7-1l5 3l4-4l1 8l5-3M952 296l-2-7M952 296l-10 0M952 296l-9 5M952 296l14 6l-2 14l-8-4l10-10l4-11l3 8l14 6l1 4l-8 6l4 4M952 296l2-7l5-11l-5-6l7 1l-3-13l11 7M496 382l-7 7l3-11l6 0l-2-4l-4 4M1268 414l1-10M1268 414l-4-9l-12 7l5 7M1268 414l0 11l-4 6l-12 4l-2-10l2-3l0-10l-1-6M959 517l-1-6l10-6M450 377l-1-6l3 4l10-4l-2-7M450 377l-7-3l-2 10l9 7l8-9l-7 3l-10-1l-6 6l2 12l10 3l-5-7l8-7l12 7l5-9l-5-11l0-7l-4-3l-8 0l2 7l10 3l7 1l-4-4l4-7l4 4l6 2l6 5l4 10l-6-8l-8 5l-4 11l-4-8l8-3l-6-7l-2 10l-9-7l-6-7l6-7M450 377l2-2M450 377l1 8l-1 6l-3 14l0 2l-2 4l2-6l14 5l8 10l-5 6l3 11M450 377l8 5l4-4l3-3l8-3l5-5M450 377l-9 7M450 377l-6-5l5-1l1-3l3-7M1323 446l-1 9M1503 541l-2 7l2 4l-2 5l6-3l4-2l3 3l1-8M1501 548l-6 0M1009 200l-6 11M652 550l9 3l8-4M652 550l0-7l-1-7M652 550l-6 3M411 407l-6 8l-7-4l-2 14l9-10M879 534l6 4l4-5l-8-2l4 7M808 552l-11-11l0 5l11 6l7-10M843 449l-3 8l-8-2l-9 2l6-6M522 423l2 10l7-3M522 423l-6-8l-10 9l-4 8l-12-3M522 423l7-6l5 3l2-8l1-7l5 2M1128 437l12-4l7 5l13-4l6 7M806 489l4 5l6-7M850 543l-6-8l-3-8l13 4M438 362l-4 5l9 7l-5 3M434 367l10 5l6-4M1145 384l4 3l2-7l-12-5M1272 448l6 14l-9-7l-3 8l12-1l1 12l8-8l1-15l-1-11M1272 448l2-5M1272 448l-3 7M1185 521l2-11l1-7l4 3l11 0M797 533l0-2l-5-6M797 533l-6 0l1 3l7 2l-2 3l-13 2l-14 0l-9 0M797 533l-5 3l5 5M616 555l8 0M1050 337l3-12l-2-11M930 370l-7-11l11-6l-11-1M930 370l-8-7M930 370l-6 2M606 595l5 7M861 537l-3-7l6-3l-8-1M1124 414l14-2l-6-3l7-12l3 11l-4 4l10 5l-9 7l-1-12M1249 552l2-4l4 4l-6 0l0 10l-6-7l-4-7l-7-1M1249 552l9 5l-3-5l8-4l-6-4l-2 8M1249 552l1-8l-7-4l4-3l10-6l-2-8l-5-4l0-10l-2 8l-3-4l-9 5l-4 5l9 4l4-2l3-8l2 2l-5 6l7 1l3-3l10 1l-8 7l5 3l5 3l3-4M621 548l6-5l5 10l1-1M909 445l-4-8l-2-9M909 445l-6-7M909 445l15-2l5 0M924 443l-7 13M678 521l5 5l0 5l10 3M683 526l1-3M564 408l-1-3l-6-3l-1-6M564 408l-11-3l-7 11l15 1l-6 11l-9-9l15-2l1 2l9 5l12-2l12 0l-1-3l0-7l2 3l-2 4l4 1l-3 2l9 4l4-2l5-4l3 4l3 3l4 3l7-3l-1 5l3-2l4 7l5-4l0 7l-6 5l-9 5l4 5l0 3l11 2l9-8l-15 4l-5 2l-4-8l1-9l8 4l-6-7l-2 3l-10-5l2-6l-7-2l-8-2l-8 9l-3 12l-9 0l-4-13l-14 5l-4-13l-3 11l7 2l11-10l-6-5l-1-11l4-4l0-2l0-7l-7 3l7 6l-10-1l3-5l-8-5M564 408l-7-6M1007 442l5-11l-6-5l-10-10l-4-11l8 8l-1-9M1007 442l-5 3l-5-12l-8 9l-10-7l11-8l6 1l10 3M1007 442l9 10l2-6l9-3M1474 540l-7 8l8-5M976 332l-6 1l-8 11l7 1l11 7l8-8l7-12l-1 10l8-5l-7-5l5-7M1337 580l-10 9M1337 580l9-6l5-14l0-7l-2-5M1337 580l-7-5l-4-13l5-7l2-5M1337 580l15 0M1337 580l5-11l9-9M1470 464l-4 7l6 9l3 12l-6 10l-2-6l8-4l8-11l10-8l7-9l13-1l5-5M1466 471l-8 12l-9 5M674 490l1 2l3-5l2-6l-5 2l-9 2l-3-10l6-2l-5-5l0-7l-11-4M675 492l7-3l1-9l5 6l0-5M1303 536l-5 9l0 3M1267 531l-5 3M993 560l-10 0l-5-12l-8 2M818 463l-4-7l9 1l2 3M781 519l-2 8l4 4l3 5l-2 7l12 6l-10 5l5 7l1 9M735 536l-5 1M1234 572l-7 10l13 5l-2 11l-14-4l0 8l1 14M1227 582l-3 12M1008 495l13-1M648 520l2-3l7 3M810 469l9 5l0 10M819 474l7 0l7 7M1424 463l4-4l5-9l12 8l9-1l-9-9l0 10M1424 463l6 8l-12 6l-6 3l-6-4l-7-9M1424 463l6 4l6-1M715 523l2-7M1077 336l-3 12l-9 1l4 5l5-6l9 4l-14 2l-12 0l8-5l-12-6l4 11l6 12l6-12l4 12l0 13l-14-1l-4 9M1077 336l-3-15l13 3l2 9l-12 3M610 580l5 6M548 403l0-5l5-6l-7 2l-3 4l-6 7l-4-10l1-3l-9-4l3 7l-7 4l-5-5l-2-2l-5-8l-1-2l-5 2l1 3M548 403l-5-5M548 403l5 2M1237 430l-5-5l-11-8l2-10l-3 3l1 7l-4-5l-6-7l-10-7l-1 8l-12 1l-11 1l2 10l9-11l5 10l7-11l11-1l6-8l0-11l-7-2l12-8l-2 13l-3-3M1458 537l5 2M862 463l8 7l7-3l7 8M1257 531l2 5M1257 531l-5-5l-2-7M1257 531l-9 2l2-3l-5-5l-7-4l-2-3l-3-4l-7 5M1364 535l6-2l-3-3l-3 5l6 1M939 371l10-4M1229 528l3 2l0-7l6-2l10-4M1232 530l9-3M934 353l-9-6M934 353l0-8l7 11l-7-3M897 503l-8 2l-2 9M889 505l-6-4l8 0M1263 548l-5 9l-9 5M752 517l-5 2l2-6l-6 4l-3 8l-7-5l-6-4l-4-2M1030 461l4-5l9-10M1030 461l-2-4l-9 6l-12 7M1030 461l5 10l6 5l8 1l9-3l10 0l0-8l4-3l13-6l2-10l-3-14l10 2l5 10l7 11l2-11l12 1l2 7l-1 6l-9 1l5 8M1021 570l-3 10M953 344l9 0M715 500l4-4l1-7l13 2M988 261l9-4M1112 460l4-7l4-7l12-4M1239 548l-6-5l4-5l-9 3M1090 481l0 6l7-6l1 13M1029 369l10 1M975 422l4 13M932 481l-3-8l0-6l3-2l6-12l7-6M1386 529l-1 4M1288 548l5 3M1330 530l9 4M1330 530l7-3l-3-3l-5 3l1 3M1383 440l3-7M1383 440l0 10l7-3l2 11l9-6l0-12l-5 1l3-8l2 7M1383 440l13 1l-3-11M1383 440l7 7M1383 440l-6-6l-12 3l2 5M708 487l-7 5l-4 4l3 6M708 487l-6-6M708 487l8 0l1-9l9 6l4-3M562 419l8-6l6 3l7-4l-9-5l9-1l2 5l9 1l-7 5l-4-5l0 10l7 7l-10 5l3-12l4-5l7 2l-11 3l-6 7l3 5M562 419l0 7l-7 2l4 9l-12 5l10 10l1 9M562 419l-7 9M1063 225l0 8l11 4M913 519l-4 7M1343 457l8-6l-14-4l-1-14l3-6l8 6l-2-12M531 404l5 8M642 466l12 5l-3 2l-14-3l-2 3l-9-5l-1 5M1445 566l-10 2l-1-9l12 1l8 8l-4-10l2-3l6 0M629 438l0-6l7 5l-1 8l-5 10l5 1l6 4l9-6l0-2l-4-8l7 2l-3 6l6-1M1084 433l-12-1l5-7l-3-9l3-3l0 12l7 8l4-9l6 11l-7 12M1264 431l15 2M913 427l-10-5l9-5l9-8l-6-3l-7-3M1388 551l-7-4l-8 1M1248 533l-6 1l1 6M1287 466l-9-4l10-11l9-4M1013 235l2-7l-6-13l14-2M1013 235l6 10l1-11l-7 1M1092 537l8-4l-1 4l7-3l-4-5l-2 4l-11-4l3 8l-6 6l-9-3l-5-4l0-5l3-5l2-7M1092 537l7 0M1092 537l2 4l7-1l3 14M1027 513l-1 5l-1 4l6 6l8 1M1050 480l5 7M1080 510l3 3l5-6l6-5l9-1l1 2l-9 3l10 4M1080 510l2-7l6 4M1080 510l1 6M956 407l10 2M626 450l-14-4l5-10l-9 5l4-13l4-4l1-4l2 7l0 3l4 0l0 3l4 8M903 482l-8-5l0 9M1406 476l0 8M1357 525l4 1M1357 525l8-3M1357 525l-2 5M547 442l-3 7l13 3M591 616l8 6M1429 489l-7 13l-14 1M948 419l4 6M705 564l-9 7l3 8M1047 435l5 9M560 577l7-5l-2-9l-8 3M1315 555l-5 4M925 548l5-11l7 0M1082 503l-8 4M1057 354l-9 10M490 492l8-6l-1-9M921 535l-3 10M1107 395l-7-5l0-11l11-4l5 8l-1 12M1127 518l-6 8M340 350l7 4l1 4M927 524l7 2l7-2M661 528l6 5l3-5l3-5l2 8l-4 5l-6 2M661 528l9 0M661 528l-1 1l-3 5M660 529l0-6l8-3l5 3M685 564l-15 0l-9-11l7 1l2 10l3-7l12 7l11 7M800 497l-6 3M319 350l8 5l3 3l-9 5l1-7l-6 4l-6-4l2-3l-7-7M319 350l-7 3l-8 0l6 3l-4 5l7 9l-3 12l-11 6M319 350l3 6l5-1l7-7M1147 438l3 6M750 468l-6-5l-2-8M1020 305l-7 9M1328 535l3 1M1050 164l-2-11l10-11l5-10M1215 516l1-2l-10 0l9 2l0 5M593 575l2 11M593 575l-5 7M593 575l4 2M1051 535l7 5l4 6l4 13l9 7l2 3l-9 10l-6-10l13-3l9-10M1058 540l0-9M668 520l-5-4M1273 520l-7 1l-11 2l-5-14l-2-6l13-4l-7-6l-6 10l-3 10l5-4M1273 520l-1 7M1273 520l14 2l3-8l4 13l-3 4l6-1M632 553l-1 6M883 501l-3-7l-5 9l-8-9l13 0M1221 516l12-2l-7-9M843 434l-3 6l-13-1l-8-1l-11 8l-6-7l2 7l-7 10l10-5l-1 13M1202 454l6 5M755 528l-8-2l0 3l-7-4l7 1l0-2M1043 544l-2 5M404 363l-6-4l11-5M404 363l5-3l5 5M404 363l5-5l-11 1l-2-5l-1 4l-6-8M975 506l6-3l8-3l7-8l2-10l-4 9M975 506l-6-4l4-10l-4 1l-10-6l-9 0l2 8l7-8l8 12l2 3M975 506l5 5l1-8M1085 457l6-2l10 7l-14 2M629 560l-6 6l-7 2l0-6M1322 545l-2-5l4-3M877 467l7-6l2 1l2 9M1084 150l7 12l12 0l0 12l6 9l12 7M1084 150l14 1l-7 11l-9 7l-5-5l-3 6l8-1M1084 150l-13 1l-7-3l-6-6l-7-9M1146 323l-8 10l-4-11l-3 15l7-4l3 10l4 2l-7 8l3-10l-10-6M1146 323l-12-1l-8-7l-4 11l12-4M1146 323l11 8l7-4l-6-14l5-11l5 9l5-8l-8-9l10-7M688 488l0-2l7-2M838 503l2-4l7 2M743 511l-8 3M996 428l10-2M765 520l0-2l1-6l-7 2l6 4M444 435l3-7l3-13l-3-8l14 3M444 435l6 4l9 12l-13 4l5 9M444 435l-13-7l-9-9M1015 413l7 9l8 4M1022 422l-10 9M465 375l-3-4l7-3M1002 445l0 9l11 7M1151 544l-1-7l-10-4l0 8l-4-5l-8 6M1151 544l-10 4l-10 0l9-7M1151 544l0 3l-8 11M1406 455l3-6l11-6M1040 395l9 3M1013 164l-5-1l4 5l-9 5l-2 10l-6 10l-12-8M1013 164l7 6l-8-2l1-4l12-3l-10-8l-7 10l-13 1l8 9l5-10l-5-8l-6-8M1013 164l2-11l-12 2l-11 2M488 397l6-6l1-3l8-4l-5-6M488 397l13 4l-14 1l1-5M1095 506l8-5M474 381l-5-2l4-7l2-8M1173 303l-10-1l2-8l10-11M1173 303l8-6M1173 303l8 3l-13 5l-10 2l-14-5l1-8l6-7l14 1M612 549l0 9M914 490l-7-2l7-6l6 0M1116 414l7 7M380 351l0 5l4 5l-1-8M380 356l-5-2M1139 397l6-4M1308 523l7-9l3 12l5 5M1085 533l4-4l12-3M1085 533l-6-2l5 7l2 5l1 8M1085 533l-1 5l-7-5l0 7M1109 183l0 12M1008 488l5-2M974 409l11 3M1252 526l-2 4M1073 379l4-3M987 305l-7 10l-2 10l-8 8l-10-10l4-7M1185 533l9 5l3 9l9-1l-8 9M1185 533l3-4l-5 1l-10 1M1185 533l-8 3M1032 492l4-2M1032 492l-8-6M1032 492l-9 11l-3 3l6 3M671 475l-8 0M671 475l4 8l3 4M671 475l-5 10l-2 0M398 359l-1 9l-5 1l-4 1M398 359l-5 2l2-3l3 1M1303 551l5 4l6-4M1077 403l-6-9l-6 9l12 0l0-10l-6 1l-15 1M1077 403l10 2l9 12l5 6l6-11l0-4l-11 9l-1-10l1-9M1077 403l0 10l10-8M1051 502l0-9l-2-3M1051 502l-8-9l0 12l-4 6M1051 502l12 3l0-2l5 1M1011 475l6 8l10-7l8-5l6-7M1144 308l-5-5M555 601l8-3l4-4l8-3l2-2l7-3l-6-5M555 601l8 2l14-1l-10-8l-2-9M555 601l-13 1l-5-8l-14 3l2-9l15-1l-3 7l-12-6M542 602l-8 6l2-6l-13-5l0 12l13-7l1-8l7 6l-4-13M542 602l2-2M542 602l-6 0M1070 189l-6 1l5 10l1-11l1-10l3-9M1164 558l0-9l14-3l4 7l-1-9l-3 2M1001 519l4 4M978 541l-9 2M1117 538l4 8l2 13l0 6l-13 7l6 10l7 8l-1 14M1121 546l-7-4M613 420l-1 8l5 8l6-3l-4-3M605 566l-4-9M323 381l-13 1l-2-8l5-4l3-4l-10-5l10-1l-4-7l-8-4M659 549l2 4M1516 526l1-2M1516 526l1 7l4-2l-5-5M1165 520l6-2l4-5l-1-6l-3 2l0 9M1165 520l-10-4l-1 3M1165 520l6-1l3 8M1033 517l-3-11M1033 517l-7 1l8 2l-1-3M1048 197l-2 6M1101 520l-1 2l-11 7M748 500l-1 3M1002 226l-10-2l6 9M563 603l4-9l9 2M1119 273l9-8l8 12l3 11M777 493l1 7l-8-3l-11-7l-2 4l-1 4l-1 9M950 487l8-5l7 1l-1-5l9-1M950 487l0-13l8 8l6-4M950 487l-3 7l5 1M948 526l9 0l1-4M1175 513l-4-4l1-8l2 6M1365 550l5 4M635 456l0-11l11-1l-5-4M1128 395l4 14l10-1M813 499l2 7l3 4l6-4M1025 161l12 8M1009 353l6-7M1009 353l11 6M1009 353l4 10l-11 2M762 503l8-6l-13-3l5 9l4 9l4-6l6 6M1221 417l1 7l10 1l9-12l11-1M990 480l8 2M524 433l3 9M1507 492l12-4l-2-3l-10 7l5 9l-11 10M1512 501l7-13M1493 541l9-3l4-1M503 384l0-10M778 463l10-2M959 278l-10 7M913 433l7-6l13-1l3-14l-12 3l8-9l-6-13l-6-4l-8-2M333 353l-3 5l-8-2l-10-3l2-3M835 470l9-2M626 585l9 5l5 8M682 489l-2-8M1211 527l-1 8l-8 2l4 9M776 503l5 2M1364 541l-10 4l5 7M719 474l-1-7l8 6M339 404l-15 3l-12-6l-11 6M339 404l4-10l9 2M339 404l-1 3l-14 0l5 14l-8 12M1507 554l6 12M1082 225l0 8l11-6M1127 303l-10 11l-10 11l9 6l9 13M1117 314l5 12M867 438l-7 8M948 524l7-3l-3-4l3-4M1468 552l3 10M1194 398l7 0l-7-11l-7-12l13 6l7-2l3 5l-10-3l-6 6l-11 0l-7-1l-6-11l-7 13l-5 11l14-1l7-2l15 2l6 8l-1 12l9 7M591 561l-6-3M591 561l-2 3M591 561l8 0M875 503l0 4l6-4M1373 562l-3 6l2 6M447 428l3 11M570 413l-9 4M1480 473l-8 7l-3 10l6 2M876 426l-11 3l-5-9M590 459l-13 1l7-13l6 12l10-3l5 10l6-7l-11-3l-7 8l12 2M590 459l3-12l7 9l3-10l-7-11l-1-13l-5 7l6 6l12 6l4 5l-1 13l-8-13l5-5M590 459l3 5M970 283l13 6l-13 2l0-8l-9-10l-8-9M1044 471l5 6l-6 6M949 511l2-5l7 5l0-7l9-5l6-7l6 8M1044 523l6-2l6-4l-2-5l-6 5l8 0l7-3l5 6l7 6M1044 228l8 10M536 458l-10-1M536 458l6 6M536 458l8-9M597 595l7-3M1035 403l9 3M804 530l-5 8M970 571l-7 11M1328 425l11 2M1424 539l3-6l8 4l-2-8l7-2l-1 6M567 403l7 4l4-4M1095 342l-1 13M1194 482l9-11l11-3l9-4M1088 424l13-1l-1 12M705 526l-10 4M1041 476l-8 4M1440 527l7 3l4-3M1020 320l13 2l9 11M976 385l13-1l5-10l13 4M925 506l-5 3l-8-5l-4 2M1220 389l-3 8l-7-13M1294 555l4 3M347 362l-2 2l6-1l7-2l-5-6l-6-1l-4 4l-9-7M800 528l-3 3M639 530l-1 5M1085 386l-8 1l-9-3M1087 324l-9-8l-8-4M641 460l-4 10M758 549l-4 4M1194 538l3 1M915 406l-3 11l-5-3M1393 554l3 4l0-6M809 516l-4 9M491 441l11 3l1 8l13-6M1023 152l13-6l-2-7l-2-5l-8 3l-3-2l-1 5l-2-2l-6-3M1023 152l-3-12l-13-1l11-1l3-3M1023 152l1-15M343 394l10 6l9 11l8 8M797 456l4 11M1294 538l0 2l-3 4l-4-10l4-3M435 390l7 8M978 548l8-6l6 7M1098 319l9 6l-1 6l10 0M1107 325l1-11M1043 493l8 0M1154 427l6-11l5 6M739 478l-4 10M1291 595l11-6l-9-9l-2-5l-14-1M1291 595l2-15M1291 595l1 8l6 10M1248 674l1 9M503 452l2 11M1187 482l-10 7M886 462l6-6l-8 5l-9 2M1194 470l9 1M1229 476l11 5M512 382l2 5l10-5M577 602l0 7M860 489l7 5l2-7M1055 552l11 7l-4 10M1072 289l3 9l10 2l12 3M1072 289l8-1M1072 289l6-7l0-10l5 12M1011 196l8-3l2-13M1019 193l10 10l-8 0M813 449l-6 2l-3-5l4 0l5 3l8-3M1497 476l3-12M1497 476l8-4M1497 476l10 0l10 9M784 543l2 11l-12 5l-4 14l5 5M979 516l1-5l3 1l8-3l5 8l4 0M597 479l9-4M831 488l-1 6M1347 433l4 10M824 527l-1 7l3-3l2 5M823 534l-5 6M919 518l5 2M585 411l2 6M1028 247l-1 11l-1 13M1200 381l2-13l-14-2M1249 542l8 2l9-3M1425 599l3 13M1075 566l-7 13M1354 545l12 2M858 539l-7-2M996 517l0 7M593 447l10-1l9 0M966 302l7-3l10-10l7 5M793 468l2 5l1 4l14-2M936 559l0 7M915 574l3 9l1 6M1083 352l7-10M1098 151l-1-9l1-8l11 5l-12 3l-4-8M363 350l2 3M1195 356l4-7M1195 356l-12-8M1195 356l10 0l-7 6l4 6l5 11l6-11M1073 510l-6 6M1038 215l6 4M1396 472l-3 8M501 401l11 7M876 441l8-2M1064 148l5 14M1490 463l3 10M1164 341l14-5l-14-4l-7-1l7 10l0-9l0-5l14-3l10 2l-10 10l0-12l9-11M1160 370l12-1l-9-5l-11 4l8 2l3-6M382 432l-14 6M881 487l-11-6l0-5l-7-1l-11 6M1481 604l-4 14l-6-2M562 426l9-2l3-7l2-1M1237 406l3-7l-14 1l-3 7l-12-2l9 5l-3 2M756 484l-1 6M1373 455l10-5l-2 15l-11 2l-2 2l-1-11l4-7l2 4l-3 12M546 419l-12 1M546 419l0-3l-5-5l5 8M1498 524l-2 3l-5 8l9-4M1170 375l-12 5l5 8l13-2l7-7l4-4M972 486l-3 7M349 557l-9 7M874 544l4 4l-1 3l6 8M874 544l3 7M874 544l8-2l-4 6M1072 536l-6-1l6-4l-8-4M1077 164l14-2M1083 131l-5 6M1350 463l-8 1M423 364l-6 3M423 364l4-2M423 364l2-7l-8 5l0-9M598 571l-9-5l12-1M595 663l-2 4M921 409l-7-9M639 545l1 6M1396 441l5 11M1062 538l0 8M1183 561l-1 3l-10 9M1154 496l8-8M995 193l-3 12l-3 13l-9-6M389 396l11 2M557 583l-10-5l-3 4l10 9l9-5l0 12M1150 272l-10-4l7-11l11-2l-1 6M1489 500l9 0M1494 519l7 1M1420 508l6 13M523 609l11-1l9 9l13-2l2 8l13-5M1203 565l-8 8M1178 324l12-4M888 527l6-3M1050 511l5-1M718 597l4 8l-7 9M1188 529l6-8M1131 548l-1 4M996 271l-13 7l0 11M610 663l5-6M1435 551l-4 2M941 317l4 5l-1 8l-8 7M1224 602l14-4M1071 444l1-12l-6-8l8-8M1072 463l-4 11M1232 557l4 5l2-3M1061 327l6 7M1131 207l-2-12l8 3M1131 207l6 2M1131 207l-5 6M431 371l-3 5M598 420l7-4l-9-1l8-2M902 559l0 3M548 500l-4-10l13 0l-1-11M548 500l9-10M548 500l-10 8M843 563l11-3M794 441l-3 4M842 605l6 12M1074 496l10 3l3-4M1071 251l6 5M1508 605l-13 7M1096 292l-11 8M999 152l4 3l-8 9M583 406l0 6M796 549l-5 12M609 517l2 10M989 358l-1-14l6-2M782 624l2-9M1419 624l-6 7M1397 682l-3 12M667 541l13 0M959 354l11 5M493 510l10-3M411 558l-10 7M973 231l0 8l-5 8l11-1l-6-7l-3-3M956 625l2 7M434 490l-1-13l-3-13M1116 358l-4 5M1512 520l12 1M345 886l2 14M734 564l4 7l9 10l2 9M1266 463l-1 11l14 0l-4 5l-10 3l0-8l10 5M1454 457l-6 5M314 391l-2 10M1151 647l-10-10l10-11l-1-4M1296 485l7 7M1296 485l5-11M1296 485l-6 4M1032 623l-5-7M401 444l-2 10M1446 592l2 13M307 443l12 10M680 582l-3 6M352 586l3 11l7 10M897 552l11-1M891 628l-6-11l-1-13M807 582l12 7l10-5M1195 629l8-6M665 605l10 1M561 518l12-6l3-7M1268 583l0 4M347 421l4 10M353 519l1 14M447 651l6 3M395 469l-9 8M692 624l4 7M555 643l1 11M383 649l-3 11M1033 589l2 13M539 539l4 11M501 615l-14 5M923 461l-3 9l-1 4l10-1l11-4l-8-4l-9-4M840 440l-2 5l-10-1l12-4M898 530l1 5l-5 3l4-8M416 386l9 1l-4 8l-5-9M1046 513l2 4l2 4l-4-1l0-7M819 530l-2 6l-7 0l4-2l5-4M1390 537l8 4l0-3l-8-1M371 457l-7-4l9 11l-2-7" fill="none" stroke="#0f2837" stroke-width="1.25"/><path d="M1301 565l-15 4l13-8M1301 565l12 10l17 0l-17 7l14 7l20 13l-21 2l-28 9l17-18l-23 8l10-14l11-14l-20 5l-16-6l-1-17l-16 3M1301 565l-8 15M1107 325l15 1M1041 348l16 6l-16 4M1041 348l-20 0l6-15l15 0l-1 15l-14-15M1041 348l9-11l17-3l-14 9M506 424l16-1M506 424l6-16l-22 8l11-15l-15 7l-17 12l21 9l-23 8l24 4l12 11l-24 17l-23 10l-5-15l-21 0l16-9l-24-11l22-9l2 20l4-16l14-13l-17 2l-16 0l-9 16l8 20M506 424l18 9l-22-1l14 14l10 11l1 19l-30 1l-7 15l-25 5l-9 14l2 21l-3 19l-20-21l23 2M506 424l-16 5M506 424l-16-8l-21 4l-2 17l-17 2M412 697l15-21l20 16M546 575l11-9l-19 4l2 17l11 10M447 635l25-8l15-7l-26-13l-20-17l-19-16l-11-16l-21-13l11 20l21 9l-5 18l24-2l16-16l21 17l20-2l25 8l-22-13M447 635l0 16M447 635l6 19M995 332l-17-7l-14-9l16-1l-14-13l-12-13l16 2M995 332l-11-13l16 6l8-13M995 332l-19 0l12 12l-19 1M877 551l-21 19l-13-7l-14 21l-7-15l-15 13l-3 27l-22 15l-18-14l20 5l20-6l-20-15l8-24l-17 8l-1-19l18 11l22-7l-7 19l-23 12l-9-16l-26 12l21-17l-23 8l14-20l7-15l18 8M877 551l-23 9l-4-17M877 551l-13-11l-10 20M923 377l16 4l0 15M1436 525l0-16l-10 12M1085 370l0 16l11 12M936 566l15 5l12 11l-1 29l25 15l-5 24M936 566l14-10l-14 3l-21 15l-13-12l-16 11l13 19l-21-7l6 19l15-12l19-9l27 9l-26-3l4 19l-24-16l16-18l10-26l-17 3l7 23l-29-1l-23 5l20-19l10-13l15-3M936 566l-18 17M936 566l9 26l17 19l-6 14M936 566l-21 8M391 594l26-2l4 21M957 547l-2 19l15-16l13 10l-13 11l21 1l28-10l-26-2l18-9l-19 3M992 224l11-13l-14 7M992 224l-17-4M992 224l-19 7l17 4l-11 11l9 15l-5 17l15 3l-8 13l15-3l8 14l-19 0l11-14M1123 565l-7 17l-16 9l-27 12l-12-10l-26 9l-3 21l25 6M1123 565l20-7l4 15l19 19l21 1l8-20l-12-12l15-6l15-5l-10 15l14-11l15-7M1123 565l0 25l24 9l0-26l17-15l-21 0M1123 565l7-13M1123 565l24 8l-24 17l-23 1l-3-28l-20 6l7-13l-7-16l-11 19l2-18M1147 573l25 0l-8-15l19 3M1286 569l-10-12l-14 15l15 2l-9 13l23 8l-14-21M1021 180l16-11l-17 1M1021 180l-18-7l-20 0l18 10l10 13l-16-3l-16 8M1021 180l-9-12M1021 180l-10 16M1021 180l-20 3l-18 2M973 299l7 16M1097 563l-3-15M1097 563l13 9l-6-18l19 5l-13 13l-10 19l22 13l25-5l19-7l6-19l15 20l24-11l-1 28l14-16l-13-12l-16-9l-13-9l-18-6l18-5l-18-4M1097 563l-10-12l-10-11M1166 592l10 16l19 21l16 10l14-23l-22 7l8 16l7 14l16-18l-9-19l-15-6l14-8M1065 403l9 13l-19-4l11 12l-17-2M1065 403l-15 0M1065 403l12 10l19 4M1077 413l11 11M393 376l15-8l-14 11l18-7M1183 441l10 15l7-14l-17-1l-5 14l15 1M404 646l-14-11l-7 14l21-3l-24 14l-14 22M380 660l-12-26l-6-27M1297 447l0-17l-16-4l6 14M1428 612l20-7l-23-6l21-7l-11-9l-13-9l-19 5l-15 7l-24 9l8-21l-20 6l12 15l14-15M1428 612l-7-15l-22 1l4-19l-2-18l-16 12l18 6l10-15M1428 612l-9 12l2-27l-18-18l24 11l19 2l8-24l-19 15l10-17M1419 624l-29-8l-2-30l11 12l-9 18l23 15l-15 1l-8-16l-29-2l-28 2l1 20M1062 569l-12-11l16 1l18-3M1062 569l-1 24l7-14l5 24M1062 569l-18-6l-19-2l8-15M991 572l27 8l15 9l-12-19l23-7l-11 26l28 4M991 572l-28 10l-8-16l15 5l0-21M991 572l7 16l2 19l27 9l8-14M998 588l20-8l1-18M1037 191l9 12l-17 0l9 12l13-7l18-8l-9 18l-16 1M431 428l14-17l2 17M445 411l-23 8l-1-24l16 7l-15 17l-17-4M713 553l-15 1l13-9l18 0l5 19l-29 0l-6 15l-19 3l-10-18l-22 8l-10-12M713 553l16-8l-12-12M713 553l21 11l10-12l-9-16M734 564l-21-7l-15-3l-14-17M919 589l-20 3l-14 25l-17 8l-20-8l9-24l6-15l15 7l-21 8l-1-23l27-11l14-7M1229 476l-16 11l1-19l15 8l15-14l22 1l13 11l17 11l-9-19l15-10l-14-5l-14-8l-10-12l-14-6M498 599l-11 21l20 17l-9 15l23-7l-14-8l-6-22l-3-16l25-2l-16-18l-15 1l11-15l-18-17l12-17l-4-21l-3-18l13 15l-6 24l8 15l-20 2l-30 3l2 23M498 599l-20-8l14-11M498 599l25 10l20 8l-1-15l14 13l15 3l-8-15l14 6l18-2l14 10M523 609l-22 6M567 539l10 21l14-8l-24-13l-1 21l-23-10l-5 20l-13 18l-18-9M567 539l-6-21l-13-18l28 5l12-17l2 26l-17-2l-6 27l-28 0M567 539l-24 11l14 16l-14 8M1448 605l23 11l8 20l-4 21l-18 14l-16 22M1471 616l10-12l-3-17l-19-14l-13 19M1237 430l4-17l-20 4l16-11M1237 430l8 17l14-7l10 15l-23-3l20 11l-17 8l16 11l-4 17l10 12l-21-2l11-10l22-2l20-5l-13 22l-17 6M1237 430l15 5M1009 200l-17 5M1009 200l0 15l12-12M1009 200l-14-7l-17 2M1221 417l-13 8l9-13l-18 6l12-13M738 571l23-10l9 12M738 571l16-18M738 571l6-19l-15-7M1288 451l-16-3l-13-8l-13 12M956 312l-11 10l15 1l-16 7l9 14l-12 12l18-2l-10 13l16-1l6 15M956 312l-4-16M956 312l-13-11M1219 565l15 7l6 15l28 0l2 21l28 5l-9 22l2 17l-25 4l-18 18l16 4l-15 5M1219 565l13-8M1219 565l17-3M1219 565l8 17l-16 0l-8-17l16 0M673 497l-16 2l13 9M640 507l-12-16l-13-12l-14 19l-4-19l-21 1l-20-1l2-18l18 19l17-16l4 15l18 0l-10-13M640 507l17-8l-21-11l13-9l-12-9M640 507l-4-19l-1-15l-7 18l-3-18M636 488l20 1M1207 379l15-3M1330 500l0-16l10-14l-10-16l12 10M1330 500l4 24l-12-15l7 18l-14-13l-12-22l17-4l5 16l9 20l9-25l1 25l9-13l-4 16M1330 500l-10-12l-1-18l21 0l16 4l17 5l-2 20l17 13l-3-23l11 15M1327 589l-1 15M1214 570l13 12M1113 298l-5 16l-11-11l16-5l4 16M577 609l14 7l-4 18l12-12l-4-15l11-12M486 408l-15-11l-10 13l3 16l-14-11M665 605l-14 18l9 23M665 605l-25-7l-29 4l-16 5l-10-16M665 605l12-17l-2 18l17 18l23-10l-19 17l10 28l-12 15M456 511l-21 19M577 460l-20-8l-15 12l2-15l-17-7l9 16l-9 18l17 14l-6 18l23 10M577 460l-11-21l5-15M577 460l-1 20l-19 10l19 15l0-25M577 460l-19 1l-16 3l14 15l-12 11l-2-26l-15 12l-22-13l11-17l8-13M577 460l16 4M998 281l-15 8l4 16M1250 509l16 12M1071 444l16 3M1071 444l13-11M1071 444l14 13l-18-3l-15-10l16-3M1248 503l-15 11M1248 503l-10-14l16 4l-14-12l4-19l-21 2l18-9l-9-15l-9 24l-6-19l15-5l-16-4l-15-2M1248 503l-22 2l-22-8l-16 6l6-14l13-12M1011 475l16 1l3-15M1027 476l-8-13M819 589l3-20l21-6l-18-3M819 589l23 16l-13-21l28 9l27 11l-16 21l23 3M819 589l-15 20M963 582l-18 10l-22 16M945 592l6-21M987 626l13-19M1201 398l9-14M1201 398l-1-17M1201 398l16-1M1099 255l15-6l1-15l-16 3l-17-4l15 11l-15 13l14 12l-18 3l-15-6l15 16l-21 0l-15 8l-16-3l0-16l9 12l8-16l0-18l-15-2M1099 255l-17 2l-4 15l-1-16l-14 10l-6 16l15 7l-16 5l-14-4l-7 15l-9-18l-6 18l0 15l10-10l16-1l-13 13l18-8l10 13l9-15l-13-12l18-2l3 18l7-16M1099 255l16 5M1315 514l-25 0l-19-3l12-14l7 17l18 9M640 598l8-26l-18 3l5 15l-7-14M640 598l11 25l24-17M640 598l-22-5l17-3l13-18M1477 618l25 15l-7-21l-14-8l25-15l27-2l-26-9l23-3M1477 618l2 18l23-3l6-28l-2-16l-11 23l-18 6M1330 484l-11-14l-18 4l1-18l20-1M1147 599l3 23l-9 15M1211 639l23-4l28-1l4 22l-2 22M1041 464l17 1l-14 6M857 593l-15 12M1364 595l-3 19l-14-12l-10-22l16 9M1361 614l-5-15M1039 421l8 14M1408 503l-12-12l16 2l17-4l-11-12l6-14M1102 217l-7-14M1102 217l-17-3l8 13M1102 217l5-16l2 16l10-14M1015 153l-8-14l-4 16M320 493l-6-15l5-25l2-20l-14-11l22-1l22 10l17 7l2-19l12 13l-11 25l28-3l23-10l0-25l-26 6l5 19l-19-12l14-7l-26-6l-19 12l-17 15l5 29l-25 3l-16-24l21-1l15-7l-5-25l9-14l15-7l-6 21l15-10l4-16M320 493l-14 13l8-28M320 493l19-18l22 12l8 29l-15 17l-16-7l15-7l16-3l17 15l19-18l-1-16l-18-20l-25 10l12-23l22 5l4-15l-17-22M1265 474l-16-3l5 22l11-11l18 15l-8-18l15 10l-11-15M1291 595l-21 13l-8 26l27 1M1270 608l22-5M1139 303l0-15M1139 303l-13 12l18-7l-10 14M1139 303l-9-16l-3 16M1050 337l11-10M1448 509l14-7l-13-14l-13 11l12 10l16 9M1448 509l16 0l11 11l-6-18l20-2l-14-8l17-3l15 3M1448 509l-7 15l-5-15l-16-1l-5 15l-14-10l19-5M1448 509l14 12M1448 509l1-21l18 8l-9-13l-18-1l8-20l17 4M1073 379l-10-13M1021 348l-3-15l-16 4l13 9M524 417l-3-18l-5 16M351 431l13 22l4-15l3 19M469 420l2-23l16 5M1023 213l15 2M1023 213l11 15l-14 6l17 6l15-2M1023 213l-8 15l19 0M637 527l-26 0l1 16M1262 572l-13-10M1262 572l-22 15l28-4M1262 572l-22-6l0 21l-16 7M956 407l-16-1l8 13M1072 289l-15 11M1139 455l-7-13M1139 455l2 16l10-17l2 15M1139 455l-17-2M1139 455l-9 17l-9-13l18-4M478 591l-17 16l11 20M1007 378l6-15l10 13M1013 363l5 16M307 443l14-10l13 13M609 517l-8-19l27-7M609 517l-19-3l21 13l9 14M609 517l28 1l-26 9l20 9M1213 487l25 2l-12 16l-13-18l-19 2M1150 622l26-14l11-15l23 17l-7 13M1041 549l-16 12M1157 461l15 0M1481 604l15-24l-18 7l-15-17l21 5M329 421l18 0l23-2l28-8l-9-15l-16-6l17 0M347 421l-9-14M588 488l13 10l-11 16l-14-9M505 546l-2 19M404 497l-9-28M1029 386l0-17l11 11l15 7l-15 8M1458 483l-10-21l18 9M1427 590l-5-16M505 463l-8 14l-18-8l-28-5l-18 13l23 2l9 18M505 463l-26 6l-20-18l-8 13M505 463l21-6l1-15l20 0l8-14M1109 217l17-4l-7 15l-17-3l13 9M411 407l10-12M411 407l11 12M411 407l3-17l-21-4M698 554l-18-13l-7 16M698 554l-13 10l-5-23M698 554l4-22l9 13M698 554l-5-20M698 554l-2 17l-16 11l5-18M1198 555l-3 18l-23 0M1069 162l-19 2l14-16l-16 5l3-20l-15 13l-11 15l21-1l-10-14l-12-9M1063 225l14-13l-17 6M1063 225l11 12M1063 225l19 0M1373 562l12 11l6-16M1385 573l11-15M1063 266l8-15l-8-18l-9 15l17 3l-12 11l-16 5l-17 4l7-14M386 531l4 14M749 590l15 20l20-16l0 21M354 533l-5 24l3 29l17-18l-20-11M1116 358l12 16l-17 1l-16 0l17-12l-18-8l1 20l-10-13l-16-8M1116 358l9-14l13 9l19 4l-12-12l12-14l-16 12l-16 1l6 14l-3 16l-16-11M1116 358l15 0M1353 511l12 11M399 454l-26 10l13 13M1176 354l-13 10M1176 354l-4 15M1176 354l12 12l-5-18l16 1M383 649l-15-15l22 1M792 570l15 12M1217 445l-9 14l-2-15M1114 542l-10 12M1222 424l10 16l0-15M1302 456l13 9l-14 9l13 9M1160 434l-10 10l11 11M1150 444l16-3M456 479l-22 11M1002 337l7 16l-20 5l5 16l-17-6l12-10l5-16l15 11M1065 349l2-15l7 14M1039 385l16 2M401 444l21 0M1367 442l-16 1l5-16M1367 442l16-2l-12 11l-20 0l16 7l-17 5l18 6M1367 442l-16 9M1115 395l-8 13l15-3M378 403l20 8M378 403l-8 16M378 403l-16 8M1084 203l13-10l12-10l1-15l5 14M1287 466l14 8l2 18l22 12M611 641l-24-7l-12 19l19-5l21 9l-4-16l-2-19M611 641l-12-19M611 641l-17 7l16 15l-17 4l-18-14l20 10l15 0M1352 580l9-13l-15 7l11-13M661 553l-14 7l23 4l7 24l22-9l19 18l-3 17l25 14l-18-23M929 443l16 4M1131 384l-15-1l12 12M1131 384l14 9M1131 384l8 13M646 444l-11 12M1100 379l-15 7l15 4M969 393l5 16l12-16l-17 0l-3 16M558 623l-3 20l-12-26l15 6l22-1M1037 169l-9 16l1 18M1028 185l17-4l3 16l16-7M1164 558l-13-11M479 469l11 23M1121 256l16-1l-12-10M1145 300l18 2l-19 6l2 15l12-10l-1 18l-19 2M1163 302l-12-9l-3-17M1303 492l19 17M1373 479l-18 4l-16 9l16 1M1373 479l12 10l-14 10l-17 3l13 12l21-2l-13 11M1373 479l20 1l-12-15l15 7l-4-14M1373 479l8-14M1373 479l-12 16M925 548l11 11M299 534l20 16l21 14l12 22M353 400l-14 4l-4-17l-11 20l-10-16l-15-3l13 13l-5 21l17-15M955 464l9 14l1-18l8 17l7-17l-15 0M1252 422l12 9M927 450l5 15M1095 375l-10 11l2 19l-10-12M1508 605l29 6M912 651l-18 10l1 29M467 437l-8 14M968 247l7 14l4-15l16 3l3-16l11 12l-12 12M990 427l-15-5M990 427l-5-15M990 427l-1 15M1469 502l17 10l15-1l-12-11M1365 437l-14 6M1087 324l-10 12l6 16M939 371l13 9M988 309l12 16l-6-20M664 485l-15-6M1063 132l1 16l10-13l-3 16l7-14l15-3l-9 16l-7 14M462 398l-15 7M1268 414l14-3M1521 509l-14 8l5-16l19 0M309 632l21 12M939 367l-5-14l-4 17M816 639l15 23l-17 14M344 374l14 7l16-1l-14 8l-15-4M555 643l20 10l-12 17l-7-16l19-1M1080 244l17 0M970 283l6-15M970 283l-1-16M970 283l-16 6M1321 461l19 9M1082 192l-13 8l-21-3l11-17M571 750l28 2l7 23M952 495l15 4M1259 440l15 3M814 563l-23-2l17-9l2-16M1164 267l-7 13l14-8M738 535l6 17l4-19l10 16l-3-16M774 559l17 2M1140 433l14-6l-15-3M992 549l19 2M1033 322l20 3M1051 314l19-2M1204 497l12 14M1026 271l-15 9l-11-12M851 455l6 14M1194 336l-16 0l14-7M1233 385l-7 15M1022 422l-16 4l9-13M1105 427l11-13M1105 427l2-15M1105 427l18-6l5 16M1123 421l-7 14l-16 0M810 745l9 21M587 634l7 14l1 15M1301 416l14 5M595 607l-18-5M1068 384l-12 11M1412 493l6-16l-7-13M1121 190l12-10M1150 406l15 1M883 559l19 3M548 500l25 12M498 486l5 21M799 538l9 14M1059 171l15-1M777 467l16 1M630 458l-19 1l15-9M1151 626l0 21M964 316l6 17M1347 602l-14 14M1096 277l-13 7l13 8l-16-4M1096 277l17 6l-7-17M1096 277l13 13l-12 13l1 16l-9 14l17-2l7 14l-18-3M1096 277l-18-5M1096 277l0 15M501 399l16 1M759 490l17 1l-2-16l10 12M1477 563l-14 7M580 434l16 1l-12 12l-18-8l-9 13l2-15M1003 211l-1 15M1175 283l-18-3l8 14l16 3M604 548l7-21l6 14M1311 446l9-14l16 1l-13 13M979 379l15-5M980 352l-3 16M741 502l-6-14l13 12M1507 578l18-10l-11-13M1454 457l16 2M768 546l16-3M1147 257l3 15M1440 482l-4-16l-3-16M974 409l18-4M314 391l21-4M934 345l19-1l-17-7M1424 549l1 18l-11-14M1425 567l6-14M331 371l-15-5l7 15l-10-11M1398 632l-25 14l-9 14M973 239l17-4M1098 151l15 1M1082 169l13 15l-18 1l5-16l21 5l-12-12M416 386l-22-7l20 11l-14 8M990 472l15 2M1035 403l-8 14M1083 469l-15 5M1051 493l12 10M1145 251l-10-16l2 20l-9-15M554 591l-14-4M1030 394l-17 0l11 13M1116 331l15 6M563 670l-5 24M1499 577l-13-8l14 5l1-17M1181 306l-3 18l-10-13l-4 16l14 9l17 4M1027 443l16 3M486 681l16 15l18-20M1347 433l-10 14M604 426l4 15M1138 363l19-6l7-16l-19 4M1187 375l15-7M942 459l10 12M636 683l-15 14M924 443l-11-10l15 3M1012 431l6 15l8-14M998 233l15 2M311 814l-18 22M957 443l-5-18l11 10M1225 616l13-18M1264 405l-7 14M1178 442l-8 13M1401 513l6 14M1344 694l0 23M1183 387l11 11M1152 481l2 15M1128 265l0 16M653 457l11 11M1138 412l-5 14l-9-12M947 494l-12 10M467 389l-17 2M627 441l-15 5M1326 562l16 7M1407 433l2 16M926 393l-5 16M611 459l4 20l11-11l-15-9M1019 245l-9 13l17 0l-8-13M995 384l7 14l11-14l-18 0M547 442l-1-23l-15 11l16 12" fill="none" stroke="#0f2837" stroke-width="1.55"/><path d="M640 507l-31 10l19-26M870 753l-60-8l-61-68l-66 74l127-6l67-28l18-27l-64-28l37-37l-11-32M870 753l-2 213l104-149l110 268l-214-119l-179-100l130-100l49 200l-210 48l31-148l-83-91l-35-25l-13-56l-38-18l-22-24l-45 2l33 27l-42 42l50 30l-70 3l-49 44l83 57l25-50l71 6l25 39l-66 55l-30-100l57-40l-18-46l49 29l-17 63l-41 94l145 107l-79-162l27-77l77-24l-47-68l-21-26l45-11l32-22l-41-1l-42-1l31-24l-31 19M870 753l7-36l-63-41l2-37l-34-15l-1 30l33 22l-65 1l-55-3l-11 77l136 15l51-13l102 64l23-129l-100 2l17-39l-21-23l32-20l33 17l-44 26l83 37l94 121l87 167l221-127l22-85l35-35l44-22l58 65l-137-8l-94 6l72 79l71 44l-60 88l104 30l-44-118l166-37M405 513l29-23l1 40l-24 28l44-7l-33 23l35 0l28-26l7 32l-35-6l4 33l-40 6l-31 22l1-41l-29 13l-32 37l50 16l47 16l26-22l-6 38l-35 5l12 59l20-33l3-31l39-11l12-29l-11-32l-9-29M405 513l-36 3l17-39M405 513l6 45M405 513l30 17M405 513l-15 32l-36-12l15 35l22 26l30 19l20-23M390 545l-21 23l32-3l16 27M540 767l14 46l52-38M540 767l31-17M540 767l-46-14l8-57l20 25l36-27l41 58l22-55l-28-30l-30 3l-43 6l36-22l-35-9l34-2l25-21M683 751l6 115l-110-14M683 751l-84 1M683 751l-62-54l-63-3l35-27M621 697l-11-34l26 20l24-37l46 13l34-31l24-18l11-32M1457 671l-31-11l-7-36l29-19l33-1M1457 671l41 36l33-47l-29-27l35-12l-29-16l25-18M1457 671l42 6l-24-20l-49 3l53-24l-31-31l30-18l-32 5M1499 677l32-17M1499 677l-1 30l-57-14l-44-11l-33-22l-20 34l50 0l-50 23l-81 33l1-72l62-8l8-34l27-22l12 32l17-30l-26-21M1499 677l3-44l-27 24M373 464l-34 11l25-22l-30-7M339 475l-20-22M483 807l-108-7l-64 14l25 27l39-41l-49-62l34-15l-30-22l-4 37l-38-37l42 0l0-57l38-10M483 807l11-54l28-32l-2-45l-34 5M483 807l-59-51l-64-33l15 77l-30 86l-15 51l-123-59M651 623l-40 18l49 5l36-15l44-3l9-38l-27 15M380 660l32 37l-46-15l-36-38l25-47l-52 12M404 497l30-7l22 21l37-1l-28-13l-31-7M404 497l29-20l-38-8l35-5l-31-10M404 497l-35 19M636 683l58-9l-34-28M587 634l-32 9M1059 681l-2-52l-22-27l-35 5l33-18l29-20M1059 681l33 5l8-41l51 2l39 43l58-16l-14-39l32 21l23-21l-19-27l-32-10l24 36M1059 681l41-36l-27-42l-16 26l-31 33l33 19l30 128l27-80l74-39l28-37l30 21M1059 681l57 48l35-82l-59 39l24 43l147 21l-87 226l232 5l24 122M1059 681l-64 7l-13-38l-24-18l-46 19l70-1l44 12l-31 26l-118 29l-46-55l63-1l-3-33M1397 682l29-22l-13-29M1397 682l-24-36l-39-10l30 24l-38 10l18 47l75 47l-25-70l47-1l13 36l-60-35l-30-34M1397 682l1-50l28 28l15 33M330 937l87 11l-70-48l-17 37l-37-101l52 50l113-29l-41 91l59 65l37-106l-96 41l-36 71l-51-82l-67 136M362 607l28 28M447 635l14-28M447 635l-43 11l23 30l20-25l-43-5l17-33l26 22M856 570l-27 14M502 696l-58 27l-32-26l-52 26l6-41l-36 19l-27-32l27-25M718 597l20-26l-33-7l13 33l29-16M718 597l31-7M718 597l-43 9l40 8M675 606l24-27M453 654l19-27l26 25M831 662l17-45l-32 22l26-34l-38 4l12 30l-35 15l-32 23l-43-18M781 654l-41-26l9 49M1344 694l-18-24l-35-18l43-16l-36-23l35 3M987 626l40-10M987 626l-31-1l-11-33M987 626l45-3l-6 39l-39-36l-29 6M347 900l111-43l55 50M345 886l-9-45l-43-5M868 625l26 36M479 469l12-28M479 469l-12-32M479 469l-14 28M354 533l32-2M810 745l4-69M311 814l-16-62l31-14l-15 76l-74-38M1082 1085l94-109l149-206l19-53l-80-39l27-26M740 628l42-4M320 493l33 26l8-32l-41 6l18 33l-32-20M338 526l-39 8M338 526l11 31l-30-7l-26 18M338 526l-19 24l-20 36l41-22l-37 35l52-2l36-3l10-29M507 579l31-9l-35-5M538 570l-33-24l34-7l-42-8l-39 1l27 16M303 599l49-13M1325 770l-62-20l-174 59l-117 8l204 159l71 109l161-104l-11-132M1419 764l49 129l88-121l-102-43M1567 679l-69 28M877 717l95 100M539 539l22-21M539 539l-1-31l-35-1l24-31l-29 10M539 539l-36-32M527 476l11 32M396 425l26 19M1334 636l-45-1M1018 580l-18 27l-38 4l36-23l-35-6M369 568l-14 29l-46 35M1122 604l19 33l-41 8l0-54l-32-12M1122 604l-22 41l-43-16l4-36M1122 604l28 18M283 491l31-13l-32-15M1211 639l-21 51l59-7l14 67l-73-60l5-61l-44-3l25-18l34 2M868 966l-37 143M912 651l11-43l-38 9M493 510l-35 22M1195 629l-44 18M1234 635l4-37l30-11M1147 599l29 9l27 15M520 676l1-31l2-36l-16 28M543 617l-22 28M1100 591l-23-22M590 514l-23 25M590 514l14 34M590 514l1 38M665 605l-17-33l29 16M505 546l38 4M1479 636l-60-12l-20-26" fill="none" stroke="#0f2837" stroke-width="1.9"/>
<polygon points="904.0,436.0 918.0,400.0 933.3,357.0 950.0,305.0 970.0,251.0 988.0,188.6 1006.5,148.0 1013.8,139.0 1030.0,139.0 1020.0,160.0 1004.0,200.0 985.0,262.0 965.0,320.0 950.0,362.0 935.0,402.0 925.0,436.0" fill="#0f2837" opacity="0.5"/>
<path d="M904.7 436.2L919.6 400.4L935.7 357.6L952.7 305.7L972.7 251.7L990.5 189.2L1008.9 148.6L1016.0 139.5" fill="none" stroke="#0f2837" stroke-width="1.2" stroke-linejoin="round" stroke-linecap="round" />
<path d="M905.5 436.4L921.3 400.8L938.0 358.2L955.5 306.4L975.5 252.4L993.1 189.9L1011.2 149.2L1018.2 140.1" fill="none" stroke="#0f2837" stroke-width="1.2" stroke-linejoin="round" stroke-linecap="round" />
<path d="M906.2 436.5L922.9 401.2L940.4 358.8L958.2 307.0L978.2 253.0L995.6 190.5L1013.6 149.8L1020.3 140.6" fill="none" stroke="#0f2837" stroke-width="1.2" stroke-linejoin="round" stroke-linecap="round" />
<path d="M906.9 436.7L924.5 401.6L942.8 359.4L960.9 307.7L980.9 253.7L998.2 191.1L1016.0 150.4L1022.5 141.2" fill="none" stroke="#0f2837" stroke-width="1.2" stroke-linejoin="round" stroke-linecap="round" />
<path d="M907.6 436.9L926.2 402.0L945.1 360.0L963.6 308.4L983.6 254.4L1000.7 191.8L1018.3 151.0L1024.7 141.7" fill="none" stroke="#0f2837" stroke-width="1.2" stroke-linejoin="round" stroke-linecap="round" />
<path d="M904.0 436.0L908.0 433.0L906.3 430.0L911.2 427.0L908.7 424.0L914.3 421.0L911.0 418.0L917.5 415.0L913.3 412.0L920.7 409.0L915.7 406.0L923.8 403.0L918.0 400.0L927.0 397.0L920.5 392.8L930.2 389.8L923.1 385.7L933.4 382.7L925.6 378.5L936.6 375.5L928.2 371.3L939.9 368.3L930.8 364.2L943.1 361.2L933.3 357.0L946.3 354.0L936.1 348.3L949.4 345.3L938.9 339.7L952.5 336.7L941.6 331.0L955.6 328.0L944.4 322.3L958.8 319.3L947.2 313.7L961.9 310.7L950.0 305.0L965.0 302.0L953.3 296.0L968.3 293.0L956.7 287.0L971.7 284.0L960.0 278.0L975.0 275.0L963.3 269.0L978.3 266.0L966.7 260.0L981.7 257.0L970.0 251.0L985.0 248.0L973.0 240.6L987.8 237.6L976.0 230.2L990.7 227.2L979.0 219.8L993.5 216.8L982.0 209.4L996.3 206.4L985.0 199.0L999.2 196.0L988.0 188.6L1002.0 185.6L991.1 181.8L1004.9 178.8L994.2 175.1L1007.8 172.1L997.2 168.3L1010.8 165.3L1000.3 161.5L1013.7 158.5L1003.4 154.8L1016.6 151.8L1006.5 148.0L1019.5 145.0L1007.7 146.5L1020.6 143.5L1008.9 145.0L1021.6 142.0L1010.1 143.5L1022.6 140.5L1011.4 142.0L1023.7 139.0L1012.6 140.5L1024.8 137.5" fill="none" stroke="#0f2837" stroke-width="1.0" stroke-linejoin="round" stroke-linecap="round" />
<polygon points="1105.0,300.0 1120.0,318.0 1133.0,345.0 1150.0,385.0 1175.0,418.0 1168.0,420.0 1140.0,390.0 1122.0,350.0 1108.0,320.0" fill="#0f2837" opacity="0.5"/>
</g>
<polyline points="311.0,352.0 358.6,354.0 417.0,363.0 476.0,373.0 511.0,382.6 563.7,402.5 580.0,409.0 620.0,427.0 641.0,441.0 659.0,462.0 674.0,483.5 706.0,482.0 730.0,470.0 755.8,458.6 814.4,439.5 861.3,430.0 900.0,433.7 904.0,434.0 918.0,400.0 933.3,357.0 950.0,305.0 970.0,251.0 988.0,188.6 1006.5,148.0 1013.8,139.0 1109.0,139.0 1116.4,166.6 1138.4,225.0 1171.4,291.0 1188.0,335.0 1200.7,371.8 1212.0,386.0 1244.5,408.0 1293.0,421.0 1341.0,424.5 1373.0,431.0 1421.7,450.0 1470.0,461.5 1515.0,465.0" fill="none" stroke="#0f2837" stroke-width="1.4"/>
<polygon points="846.7,483.1 979.5,483.4 982.4,531.3 978.5,535.2 977.5,603.6 924.8,603.6 924.8,610.4 821.3,610.4 821.3,600.7 822.2,571.3 830.0,553.8 846.7,547.9 845.7,534.2 842.7,533.3" fill="#6fc9e4" stroke="#0f2837" stroke-width="1.45" stroke-linejoin="round" /><path d="M858.4 529.3L889.6 498.1L918.9 529.3" fill="none" stroke="#0f2837" stroke-width="1.45" stroke-linejoin="round" stroke-linecap="round" /><path d="M860.3 531.3L889.6 501.0L917.0 530.3" fill="none" stroke="#0f2837" stroke-width="1.45" stroke-linejoin="round" stroke-linecap="round" /><path d="M938.5 524.5L949.2 506.9L960.0 529.3" fill="none" stroke="#0f2837" stroke-width="1.45" stroke-linejoin="round" stroke-linecap="round" /><path d="M940.4 526.4L949.2 509.8L958.0 529.3" fill="none" stroke="#0f2837" stroke-width="1.45" stroke-linejoin="round" stroke-linecap="round" /><path d="M842.7 533.3L868.1 534.2L868.1 527.4L907.2 527.4L907.2 534.2L942.4 532.7L942.4 527.4L954.1 527.4L955.1 535.2L978.5 535.2" fill="none" stroke="#0f2837" stroke-width="1.45" stroke-linejoin="round" stroke-linecap="round" /><path d="M842.7 522.5L866.2 522.5" fill="none" stroke="#0f2837" stroke-width="1.45" stroke-linejoin="round" stroke-linecap="round" /><path d="M915.0 522.5L940.4 521.5" fill="none" stroke="#0f2837" stroke-width="1.45" stroke-linejoin="round" stroke-linecap="round" /><path d="M956.0 522.5L981.4 522.1" fill="none" stroke="#0f2837" stroke-width="1.45" stroke-linejoin="round" stroke-linecap="round" /><path d="M872.0 483.1L844.7 520.6" fill="none" stroke="#0f2837" stroke-width="1.45" stroke-linejoin="round" stroke-linecap="round" /><path d="M872.0 483.1L871.1 515.7" fill="none" stroke="#0f2837" stroke-width="1.45" stroke-linejoin="round" stroke-linecap="round" /><path d="M908.2 484.4L893.5 499.1" fill="none" stroke="#0f2837" stroke-width="1.45" stroke-linejoin="round" stroke-linecap="round" /><path d="M908.2 484.4L908.2 516.7" fill="none" stroke="#0f2837" stroke-width="1.45" stroke-linejoin="round" stroke-linecap="round" /><path d="M941.4 483.4L910.1 518.6" fill="none" stroke="#0f2837" stroke-width="1.45" stroke-linejoin="round" stroke-linecap="round" /><path d="M941.4 483.4L942.4 516.7" fill="none" stroke="#0f2837" stroke-width="1.45" stroke-linejoin="round" stroke-linecap="round" /><path d="M952.1 483.4L944.3 510.8" fill="none" stroke="#0f2837" stroke-width="1.45" stroke-linejoin="round" stroke-linecap="round" /><path d="M953.1 483.4L953.1 514.7" fill="none" stroke="#0f2837" stroke-width="1.45" stroke-linejoin="round" stroke-linecap="round" /><path d="M975.6 484.4L958.0 520.6" fill="none" stroke="#0f2837" stroke-width="1.45" stroke-linejoin="round" stroke-linecap="round" /><path d="M918.0 536.2L918.0 585.0" fill="none" stroke="#0f2837" stroke-width="1.45" stroke-linejoin="round" stroke-linecap="round" /><path d="M919.9 536.2L936.5 603.6" fill="none" stroke="#0f2837" stroke-width="1.45" stroke-linejoin="round" stroke-linecap="round" /><path d="M938.5 530.3L936.5 603.6" fill="none" stroke="#0f2837" stroke-width="1.45" stroke-linejoin="round" stroke-linecap="round" /><path d="M940.4 534.2L958.0 603.6" fill="none" stroke="#0f2837" stroke-width="1.45" stroke-linejoin="round" stroke-linecap="round" /><path d="M958.0 535.2L958.0 603.6" fill="none" stroke="#0f2837" stroke-width="1.45" stroke-linejoin="round" stroke-linecap="round" /><path d="M960.0 536.2L977.5 596.7" fill="none" stroke="#0f2837" stroke-width="1.45" stroke-linejoin="round" stroke-linecap="round" /><path d="M830.0 553.8L924.8 554.7L924.8 571.3L822.2 571.3" fill="none" stroke="#0f2837" stroke-width="1.45" stroke-linejoin="round" stroke-linecap="round" /><path d="M845.7 554.7L924.8 570.4" fill="none" stroke="#0f2837" stroke-width="1.45" stroke-linejoin="round" stroke-linecap="round" /><path d="M822.2 573.3L924.8 573.3" fill="none" stroke="#0f2837" stroke-width="1.45" stroke-linejoin="round" stroke-linecap="round" /><path d="M848.6 535.2L848.6 553.8" fill="none" stroke="#0f2837" stroke-width="1.45" stroke-linejoin="round" stroke-linecap="round" /><path d="M862.3 535.2L862.3 553.8" fill="none" stroke="#0f2837" stroke-width="1.45" stroke-linejoin="round" stroke-linecap="round" /><path d="M868.1 535.2L881.8 554.7" fill="none" stroke="#0f2837" stroke-width="1.45" stroke-linejoin="round" stroke-linecap="round" /><path d="M848.6 573.3L848.6 599.7" fill="none" stroke="#0f2837" stroke-width="1.45" stroke-linejoin="round" stroke-linecap="round" /><path d="M864.2 573.3L864.2 599.7" fill="none" stroke="#0f2837" stroke-width="1.45" stroke-linejoin="round" stroke-linecap="round" /><path d="M854.5 573.3L862.3 599.7" fill="none" stroke="#0f2837" stroke-width="1.45" stroke-linejoin="round" stroke-linecap="round" /><path d="M891.6 573.3L901.3 585.0" fill="none" stroke="#0f2837" stroke-width="1.45" stroke-linejoin="round" stroke-linecap="round" /><path d="M821.3 600.7L924.8 600.7" fill="none" stroke="#0f2837" stroke-width="1.45" stroke-linejoin="round" stroke-linecap="round" /><path d="M823.2 599.7L831.0 585.0L844.7 585.0" fill="none" stroke="#0f2837" stroke-width="1.45" stroke-linejoin="round" stroke-linecap="round" />
<path d="M823.2 572.3L823.2 599.7" fill="none" stroke="#0f2837" stroke-width="2.2" stroke-linecap="round" />
<path d="M844.7 572.3L844.7 599.7" fill="none" stroke="#0f2837" stroke-width="2.2" stroke-linecap="round" />
<path d="M869.1 572.3L869.1 599.7" fill="none" stroke="#0f2837" stroke-width="2.2" stroke-linecap="round" />
<path d="M922.8 572.3L922.8 587.0" fill="none" stroke="#0f2837" stroke-width="2.2" stroke-linecap="round" />
<path d="M777.5,697 A121,50 0 0 1 1019.5,697 V757 A121,52 0 0 1 777.5,757 Z" fill="#b2f9a9" stroke="#0f2837" stroke-width="1.2"/>
<ellipse cx="898.5" cy="697" rx="121" ry="50" fill="none" stroke="#0f2837" stroke-width="1.1"/>
<ellipse cx="898.5" cy="697" rx="103" ry="41" fill="none" stroke="#0f2837" stroke-width="1.1"/>
<ellipse cx="898.5" cy="701" rx="97" ry="38" fill="none" stroke="#0f2837" stroke-width="1.1"/>
<path d="M777.5,709 A121,50.4 0 0 0 1019.5,709" fill="none" stroke="#0f2837" stroke-width="1.1"/>
<path d="M777.5,733 A121,51.1 0 0 0 1019.5,733" fill="none" stroke="#0f2837" stroke-width="1.1"/>
<path d="M928.5 703.0L995.5 701.0M995.5 701.0L1001.3 699.7M1001.3 699.7L1019.5 697.0M1001.3 699.7L1018.5 703.5M928.2 704.6L994.7 706.0M994.7 706.0L999.5 705.0M999.5 705.0L1018.5 703.5M999.5 705.0L1015.4 709.9M927.5 706.1L992.2 710.8M992.2 710.8L996.0 710.2M996.0 710.2L1015.4 709.9M996.0 710.2L1010.3 716.1M926.2 707.6L988.1 715.5M988.1 715.5L990.9 715.1M990.9 715.1L1010.3 716.1M990.9 715.1L1003.3 722.0M924.5 709.0L982.5 720.0M982.5 720.0L984.1 719.8M984.1 719.8L1003.3 722.0M984.1 719.8L994.5 727.4M922.3 710.3L975.5 724.1M975.5 724.1L975.9 724.0M975.9 724.0L994.5 727.4M975.9 724.0L984.1 732.4M919.7 711.5L967.1 727.9M967.1 727.9L966.4 727.8M966.4 727.8L984.1 732.4M966.4 727.8L972.2 736.7M916.8 712.5L957.5 731.1M957.5 731.1L955.7 731.1M955.7 731.1L972.2 736.7M955.7 731.1L959.0 740.3M913.5 713.4L947.0 733.9M947.0 733.9L944.1 733.8M944.1 733.8L959.0 740.3M944.1 733.8L944.8 743.2M910.0 714.1L935.6 736.1M935.6 736.1L931.6 735.8M931.6 735.8L944.8 743.2M931.6 735.8L929.8 745.3M906.3 714.6L923.6 737.7M923.6 737.7L918.6 737.2M918.6 737.2L929.8 745.3M918.6 737.2L914.3 746.6M902.4 714.9L911.2 738.7M911.2 738.7L905.2 737.9M905.2 737.9L914.3 746.6M905.2 737.9L898.5 747.0M898.5 715.0L898.5 739.0M898.5 739.0L891.8 737.9M891.8 737.9L898.5 747.0M891.8 737.9L882.7 746.6M894.6 714.9L885.8 738.7M885.8 738.7L878.4 737.2M878.4 737.2L882.7 746.6M878.4 737.2L867.2 745.3M890.7 714.6L873.4 737.7M873.4 737.7L865.4 735.8M865.4 735.8L867.2 745.3M865.4 735.8L852.2 743.2M887.0 714.1L861.4 736.1M861.4 736.1L852.9 733.8M852.9 733.8L852.2 743.2M852.9 733.8L838.0 740.3M883.5 713.4L850.0 733.9M850.0 733.9L841.3 731.1M841.3 731.1L838.0 740.3M841.3 731.1L824.8 736.7M880.2 712.5L839.5 731.1M839.5 731.1L830.6 727.8M830.6 727.8L824.8 736.7M830.6 727.8L812.9 732.4M877.3 711.5L829.9 727.9M829.9 727.9L821.1 724.0M821.1 724.0L812.9 732.4M821.1 724.0L802.5 727.4M874.7 710.3L821.5 724.1M821.5 724.1L812.9 719.8M812.9 719.8L802.5 727.4M812.9 719.8L793.7 722.0M872.5 709.0L814.5 720.0M814.5 720.0L806.1 715.1M806.1 715.1L793.7 722.0M806.1 715.1L786.7 716.1M870.8 707.6L808.9 715.5M808.9 715.5L801.0 710.2M801.0 710.2L786.7 716.1M801.0 710.2L781.6 709.9M869.5 706.1L804.8 710.8M804.8 710.8L797.5 705.0M797.5 705.0L781.6 709.9M797.5 705.0L778.5 703.5M868.8 704.6L802.3 706.0M802.3 706.0L795.7 699.7M795.7 699.7L778.5 703.5M795.7 699.7L777.5 697.0M868.5 703.0L801.5 701.0M801.5 701.0L795.7 694.3M795.7 694.3L777.5 697.0M795.7 694.3L778.5 690.5M868.8 701.4L802.3 696.0M802.3 696.0L797.5 689.0M797.5 689.0L778.5 690.5M797.5 689.0L781.6 684.1M869.5 699.9L804.8 691.2M804.8 691.2L801.0 683.8M801.0 683.8L781.6 684.1M801.0 683.8L786.7 677.9M870.8 698.4L808.9 686.5M808.9 686.5L806.1 678.9M806.1 678.9L786.7 677.9M806.1 678.9L793.7 672.0M872.5 697.0L814.5 682.0M814.5 682.0L812.9 674.2M812.9 674.2L793.7 672.0M812.9 674.2L802.5 666.6M874.7 695.7L821.5 677.9M821.5 677.9L821.1 670.0M821.1 670.0L802.5 666.6M821.1 670.0L812.9 661.6M877.3 694.5L829.9 674.1M829.9 674.1L830.6 666.2M830.6 666.2L812.9 661.6M830.6 666.2L824.8 657.3M880.2 693.5L839.5 670.9M839.5 670.9L841.3 662.9M841.3 662.9L824.8 657.3M841.3 662.9L838.0 653.7M883.5 692.6L850.0 668.1M850.0 668.1L852.9 660.2M852.9 660.2L838.0 653.7M852.9 660.2L852.2 650.8M887.0 691.9L861.4 665.9M861.4 665.9L865.4 658.2M865.4 658.2L852.2 650.8M865.4 658.2L867.2 648.7M890.7 691.4L873.4 664.3M873.4 664.3L878.4 656.8M878.4 656.8L867.2 648.7M878.4 656.8L882.7 647.4M894.6 691.1L885.8 663.3M885.8 663.3L891.8 656.1M891.8 656.1L882.7 647.4M891.8 656.1L898.5 647.0M898.5 691.0L898.5 663.0M898.5 663.0L905.2 656.1M905.2 656.1L898.5 647.0M905.2 656.1L914.3 647.4M902.4 691.1L911.2 663.3M911.2 663.3L918.6 656.8M918.6 656.8L914.3 647.4M918.6 656.8L929.8 648.7M906.3 691.4L923.6 664.3M923.6 664.3L931.6 658.2M931.6 658.2L929.8 648.7M931.6 658.2L944.8 650.8M910.0 691.9L935.6 665.9M935.6 665.9L944.1 660.2M944.1 660.2L944.8 650.8M944.1 660.2L959.0 653.7M913.5 692.6L947.0 668.1M947.0 668.1L955.7 662.9M955.7 662.9L959.0 653.7M955.7 662.9L972.2 657.3M916.8 693.5L957.5 670.9M957.5 670.9L966.4 666.2M966.4 666.2L972.2 657.3M966.4 666.2L984.1 661.6M919.7 694.5L967.1 674.1M967.1 674.1L975.9 670.0M975.9 670.0L984.1 661.6M975.9 670.0L994.5 666.6M922.3 695.7L975.5 677.9M975.5 677.9L984.1 674.2M984.1 674.2L994.5 666.6M984.1 674.2L1003.3 672.0M924.5 697.0L982.5 682.0M982.5 682.0L990.9 678.9M990.9 678.9L1003.3 672.0M990.9 678.9L1010.3 677.9M926.2 698.4L988.1 686.5M988.1 686.5L996.0 683.8M996.0 683.8L1010.3 677.9M996.0 683.8L1015.4 684.1M927.5 699.9L992.2 691.2M992.2 691.2L999.5 689.0M999.5 689.0L1015.4 684.1M999.5 689.0L1018.5 690.5M928.2 701.4L994.7 696.0M994.7 696.0L1001.3 694.3M1001.3 694.3L1018.5 690.5M1001.3 694.3L1019.5 697.0" fill="none" stroke="#0f2837" stroke-width="1.2" stroke-linecap="round" />
<path d="M1019.5 697.0L1019.5 709.0M1019.5 697.0L1018.6 715.0M1019.5 709.0L1019.5 733.0M1019.5 709.0L1018.6 739.0M1019.5 733.0L1019.5 757.0M1019.5 733.0L1018.6 763.0M1018.6 703.0L1018.6 715.0M1018.6 703.0L1016.0 721.0M1018.6 715.0L1018.6 739.0M1018.6 715.0L1016.0 745.0M1018.6 739.0L1018.6 763.0M1018.6 739.0L1016.0 769.0M1016.0 709.0L1016.0 721.0M1016.0 709.0L1011.6 726.7M1016.0 721.0L1016.0 745.0M1016.0 721.0L1011.6 750.7M1016.0 745.0L1016.0 769.0M1016.0 745.0L1011.6 774.7M1011.6 714.7L1011.6 726.7M1011.6 714.7L1005.6 732.2M1011.6 726.7L1011.6 750.7M1011.6 726.7L1005.6 756.2M1011.6 750.7L1011.6 774.7M1011.6 750.7L1005.6 780.2M1005.6 720.2L1005.6 732.2M1005.6 720.2L998.1 737.4M1005.6 732.2L1005.6 756.2M1005.6 732.2L998.1 761.4M1005.6 756.2L1005.6 780.2M1005.6 756.2L998.1 785.4M998.1 725.4L998.1 737.4M998.1 725.4L989.1 742.2M998.1 737.4L998.1 761.4M998.1 737.4L989.1 766.2M998.1 761.4L998.1 785.4M998.1 761.4L989.1 790.2M989.1 730.2L989.1 742.2M989.1 730.2L978.7 746.4M989.1 742.2L989.1 766.2M989.1 742.2L978.7 770.4M989.1 766.2L989.1 790.2M989.1 766.2L978.7 794.4M978.7 734.4L978.7 746.4M978.7 734.4L967.2 750.1M978.7 746.4L978.7 770.4M978.7 746.4L967.2 774.1M978.7 770.4L978.7 794.4M978.7 770.4L967.2 798.1M967.2 738.1L967.2 750.1M967.2 738.1L954.7 753.3M967.2 750.1L967.2 774.1M967.2 750.1L954.7 777.3M967.2 774.1L967.2 798.1M967.2 774.1L954.7 801.3M954.7 741.3L954.7 753.3M954.7 741.3L941.4 755.8M954.7 753.3L954.7 777.3M954.7 753.3L941.4 779.8M954.7 777.3L954.7 801.3M954.7 777.3L941.4 803.8M941.4 743.8L941.4 755.8M941.4 743.8L927.5 757.5M941.4 755.8L941.4 779.8M941.4 755.8L927.5 781.5M941.4 779.8L941.4 803.8M941.4 779.8L927.5 805.5M927.5 745.5L927.5 757.5M927.5 745.5L913.1 758.6M927.5 757.5L927.5 781.5M927.5 757.5L913.1 782.6M927.5 781.5L927.5 805.5M927.5 781.5L913.1 806.6M913.1 746.6L913.1 758.6M913.1 746.6L898.5 759.0M913.1 758.6L913.1 782.6M913.1 758.6L898.5 783.0M913.1 782.6L913.1 806.6M913.1 782.6L898.5 807.0M898.5 747.0L898.5 759.0M898.5 747.0L883.9 758.6M898.5 759.0L898.5 783.0M898.5 759.0L883.9 782.6M898.5 783.0L898.5 807.0M898.5 783.0L883.9 806.6M883.9 746.6L883.9 758.6M883.9 746.6L869.5 757.5M883.9 758.6L883.9 782.6M883.9 758.6L869.5 781.5M883.9 782.6L883.9 806.6M883.9 782.6L869.5 805.5M869.5 745.5L869.5 757.5M869.5 745.5L855.6 755.8M869.5 757.5L869.5 781.5M869.5 757.5L855.6 779.8M869.5 781.5L869.5 805.5M869.5 781.5L855.6 803.8M855.6 743.8L855.6 755.8M855.6 743.8L842.3 753.3M855.6 755.8L855.6 779.8M855.6 755.8L842.3 777.3M855.6 779.8L855.6 803.8M855.6 779.8L842.3 801.3M842.3 741.3L842.3 753.3M842.3 741.3L829.8 750.1M842.3 753.3L842.3 777.3M842.3 753.3L829.8 774.1M842.3 777.3L842.3 801.3M842.3 777.3L829.8 798.1M829.8 738.1L829.8 750.1M829.8 738.1L818.3 746.4M829.8 750.1L829.8 774.1M829.8 750.1L818.3 770.4M829.8 774.1L829.8 798.1M829.8 774.1L818.3 794.4M818.3 734.4L818.3 746.4M818.3 734.4L807.9 742.2M818.3 746.4L818.3 770.4M818.3 746.4L807.9 766.2M818.3 770.4L818.3 794.4M818.3 770.4L807.9 790.2M807.9 730.2L807.9 742.2M807.9 730.2L798.9 737.4M807.9 742.2L807.9 766.2M807.9 742.2L798.9 761.4M807.9 766.2L807.9 790.2M807.9 766.2L798.9 785.4M798.9 725.4L798.9 737.4M798.9 725.4L791.4 732.2M798.9 737.4L798.9 761.4M798.9 737.4L791.4 756.2M798.9 761.4L798.9 785.4M798.9 761.4L791.4 780.2M791.4 720.2L791.4 732.2M791.4 720.2L785.4 726.7M791.4 732.2L791.4 756.2M791.4 732.2L785.4 750.7M791.4 756.2L791.4 780.2M791.4 756.2L785.4 774.7M785.4 714.7L785.4 726.7M785.4 714.7L781.0 721.0M785.4 726.7L785.4 750.7M785.4 726.7L781.0 745.0M785.4 750.7L785.4 774.7M785.4 750.7L781.0 769.0M781.0 709.0L781.0 721.0M781.0 709.0L778.4 715.0M781.0 721.0L781.0 745.0M781.0 721.0L778.4 739.0M781.0 745.0L781.0 769.0M781.0 745.0L778.4 763.0M778.4 703.0L778.4 715.0M778.4 703.0L777.5 709.0M778.4 715.0L778.4 739.0M778.4 715.0L777.5 733.0M778.4 739.0L778.4 763.0M778.4 739.0L777.5 757.0M777.5 697.0L777.5 709.0M777.5 709.0L777.5 733.0M777.5 733.0L777.5 757.0" fill="none" stroke="#0f2837" stroke-width="1.3" stroke-linecap="round" />
<clipPath id="ch1"><path d="M871,690 Q871,668 899,668 Q928,668 928,690 V718 Q899,732 871,718 Z"/></clipPath><path d="M871,690 Q871,668 899,668 Q928,668 928,690 V718 Q899,732 871,718 Z" fill="#b2f9a9"/><g clip-path="url(#ch1)"><path d="M800.0 664.0L854.4 732.0M854.4 664.0L800.0 732.0M802.6 664.0L857.0 732.0M857.0 664.0L802.6 732.0M805.2 664.0L859.6 732.0M859.6 664.0L805.2 732.0M807.8 664.0L862.2 732.0M862.2 664.0L807.8 732.0M810.4 664.0L864.8 732.0M864.8 664.0L810.4 732.0M813.0 664.0L867.4 732.0M867.4 664.0L813.0 732.0M815.6 664.0L870.0 732.0M870.0 664.0L815.6 732.0M818.2 664.0L872.6 732.0M872.6 664.0L818.2 732.0M820.8 664.0L875.2 732.0M875.2 664.0L820.8 732.0M823.4 664.0L877.8 732.0M877.8 664.0L823.4 732.0M826.0 664.0L880.4 732.0M880.4 664.0L826.0 732.0M828.6 664.0L883.0 732.0M883.0 664.0L828.6 732.0M831.2 664.0L885.6 732.0M885.6 664.0L831.2 732.0M833.8 664.0L888.2 732.0M888.2 664.0L833.8 732.0M836.4 664.0L890.8 732.0M890.8 664.0L836.4 732.0M839.0 664.0L893.4 732.0M893.4 664.0L839.0 732.0M841.6 664.0L896.0 732.0M896.0 664.0L841.6 732.0M844.2 664.0L898.6 732.0M898.6 664.0L844.2 732.0M846.8 664.0L901.2 732.0M901.2 664.0L846.8 732.0M849.4 664.0L903.8 732.0M903.8 664.0L849.4 732.0M852.0 664.0L906.4 732.0M906.4 664.0L852.0 732.0M854.6 664.0L909.0 732.0M909.0 664.0L854.6 732.0M857.2 664.0L911.6 732.0M911.6 664.0L857.2 732.0M859.8 664.0L914.2 732.0M914.2 664.0L859.8 732.0M862.4 664.0L916.8 732.0M916.8 664.0L862.4 732.0M865.0 664.0L919.4 732.0M919.4 664.0L865.0 732.0M867.6 664.0L922.0 732.0M922.0 664.0L867.6 732.0M870.2 664.0L924.6 732.0M924.6 664.0L870.2 732.0M872.8 664.0L927.2 732.0M927.2 664.0L872.8 732.0M875.4 664.0L929.8 732.0M929.8 664.0L875.4 732.0M878.0 664.0L932.4 732.0M932.4 664.0L878.0 732.0M880.6 664.0L935.0 732.0M935.0 664.0L880.6 732.0M883.2 664.0L937.6 732.0M937.6 664.0L883.2 732.0M885.8 664.0L940.2 732.0M940.2 664.0L885.8 732.0M888.4 664.0L942.8 732.0M942.8 664.0L888.4 732.0M891.0 664.0L945.4 732.0M945.4 664.0L891.0 732.0M893.6 664.0L948.0 732.0M948.0 664.0L893.6 732.0M896.2 664.0L950.6 732.0M950.6 664.0L896.2 732.0M898.8 664.0L953.2 732.0M953.2 664.0L898.8 732.0M901.4 664.0L955.8 732.0M955.8 664.0L901.4 732.0M904.0 664.0L958.4 732.0M958.4 664.0L904.0 732.0M906.6 664.0L961.0 732.0M961.0 664.0L906.6 732.0M909.2 664.0L963.6 732.0M963.6 664.0L909.2 732.0M911.8 664.0L966.2 732.0M966.2 664.0L911.8 732.0M914.4 664.0L968.8 732.0M968.8 664.0L914.4 732.0M917.0 664.0L971.4 732.0M971.4 664.0L917.0 732.0M919.6 664.0L974.0 732.0M974.0 664.0L919.6 732.0M922.2 664.0L976.6 732.0M976.6 664.0L922.2 732.0M924.8 664.0L979.2 732.0M979.2 664.0L924.8 732.0M927.4 664.0L981.8 732.0M981.8 664.0L927.4 732.0M930.0 664.0L984.4 732.0M984.4 664.0L930.0 732.0M932.6 664.0L987.0 732.0M987.0 664.0L932.6 732.0M935.2 664.0L989.6 732.0M989.6 664.0L935.2 732.0M937.8 664.0L992.2 732.0M992.2 664.0L937.8 732.0M940.4 664.0L994.8 732.0M994.8 664.0L940.4 732.0M943.0 664.0L997.4 732.0M997.4 664.0L943.0 732.0M945.6 664.0L1000.0 732.0M1000.0 664.0L945.6 732.0M948.2 664.0L1002.6 732.0M1002.6 664.0L948.2 732.0M950.8 664.0L1005.2 732.0M1005.2 664.0L950.8 732.0M953.4 664.0L1007.8 732.0M1007.8 664.0L953.4 732.0M956.0 664.0L1010.4 732.0M1010.4 664.0L956.0 732.0M958.6 664.0L1013.0 732.0M1013.0 664.0L958.6 732.0M961.2 664.0L1015.6 732.0M1015.6 664.0L961.2 732.0M963.8 664.0L1018.2 732.0M1018.2 664.0L963.8 732.0M966.4 664.0L1020.8 732.0M1020.8 664.0L966.4 732.0M969.0 664.0L1023.4 732.0M1023.4 664.0L969.0 732.0M971.6 664.0L1026.0 732.0M1026.0 664.0L971.6 732.0M974.2 664.0L1028.6 732.0M1028.6 664.0L974.2 732.0M976.8 664.0L1031.2 732.0M1031.2 664.0L976.8 732.0M979.4 664.0L1033.8 732.0M1033.8 664.0L979.4 732.0M982.0 664.0L1036.4 732.0M1036.4 664.0L982.0 732.0M984.6 664.0L1039.0 732.0M1039.0 664.0L984.6 732.0M987.2 664.0L1041.6 732.0M1041.6 664.0L987.2 732.0M989.8 664.0L1044.2 732.0M1044.2 664.0L989.8 732.0M992.4 664.0L1046.8 732.0M1046.8 664.0L992.4 732.0M995.0 664.0L1049.4 732.0M1049.4 664.0L995.0 732.0M997.6 664.0L1052.0 732.0M1052.0 664.0L997.6 732.0M868.0 664.0L931.0 664.0M868.0 668.2L931.0 668.2M868.0 672.3L931.0 672.3M868.0 676.5L931.0 676.5M868.0 680.6L931.0 680.6M868.0 684.8L931.0 684.8M868.0 689.0L931.0 689.0M868.0 693.1L931.0 693.1M868.0 697.3L931.0 697.3M868.0 701.4L931.0 701.4M868.0 705.6L931.0 705.6M868.0 709.8L931.0 709.8M868.0 713.9L931.0 713.9M868.0 718.1L931.0 718.1M868.0 722.2L931.0 722.2M868.0 726.4L931.0 726.4M868.0 730.6L931.0 730.6" fill="none" stroke="#0f2837" stroke-width="1.15" stroke-linecap="round" /></g><path d="M871,690 Q871,668 899,668 Q928,668 928,690 V718 Q899,732 871,718 Z" fill="none" stroke="#0f2837" stroke-width="1.2"/>
<path d="M872,697 Q899,708 927,697 V718 Q899,731 872,718 Z" fill="#9fe39b" stroke="#0f2837" stroke-width="0.8"/>
<path d="M872.0 698.0L873.4 719.0M874.9 698.7L876.3 719.9M877.8 699.5L879.2 720.8M880.7 700.1L882.1 721.6M883.6 700.8L885.0 722.4M886.5 701.3L887.9 723.0M889.4 701.8L890.8 723.6M892.3 702.1L893.7 724.0M895.2 702.4L896.6 724.3M898.1 702.5L899.5 724.5M901.0 702.5L902.4 724.5M903.9 702.4L905.3 724.3M906.8 702.1L908.2 724.0M909.7 701.8L911.1 723.6M912.6 701.3L914.0 723.0M915.5 700.8L916.9 722.4M918.4 700.1L919.8 721.6M921.3 699.5L922.7 720.8M924.2 698.7L925.6 719.9M927.1 698.0L928.5 719.0M874.9 698.7L873.4 719.0M877.8 699.5L876.3 719.9M880.7 700.1L879.2 720.8M883.6 700.8L882.1 721.6M886.5 701.3L885.0 722.4M889.4 701.8L887.9 723.0M892.3 702.1L890.8 723.6M895.2 702.4L893.7 724.0M898.1 702.5L896.6 724.3M901.0 702.5L899.5 724.5M903.9 702.4L902.4 724.5M906.8 702.1L905.3 724.3M909.7 701.8L908.2 724.0M912.6 701.3L911.1 723.6M915.5 700.8L914.0 723.0M918.4 700.1L916.9 722.4M921.3 699.5L919.8 721.6M924.2 698.7L922.7 720.8M927.1 698.0L925.6 719.9" fill="none" stroke="#0f2837" stroke-width="0.9" stroke-linecap="round" />
<path d="M840.0,632 A58.5,21.5 0 0 1 957.0,632 V645 A58.5,22.5 0 0 1 840.0,645 Z" fill="#b2f9a9" stroke="#0f2837" stroke-width="1.1"/>
<ellipse cx="898.5" cy="632" rx="58.5" ry="21.5" fill="none" stroke="#0f2837" stroke-width="1"/>
<ellipse cx="898.5" cy="632" rx="47" ry="16.5" fill="none" stroke="#0f2837" stroke-width="1"/>
<path d="M840.0,638 A58.5,22 0 0 0 957.0,638" fill="none" stroke="#0f2837" stroke-width="1"/>
<path d="M912.5 634.0L945.5 632.0M945.5 632.0L956.9 633.5M945.0 634.3L956.9 633.5M956.9 633.5L956.9 646.6M956.9 633.5L955.7 649.8M912.4 634.9L945.0 634.3M945.0 634.3L955.7 636.6M943.6 636.6L955.7 636.6M955.7 636.6L955.7 649.8M955.7 636.6L953.3 652.9M911.9 635.7L943.6 636.6M943.6 636.6L953.3 639.5M941.3 638.9L953.3 639.5M953.3 639.5L953.3 652.9M953.3 639.5L949.8 655.8M911.2 636.5L941.3 638.9M941.3 638.9L949.8 642.3M938.0 640.9L949.8 642.3M949.8 642.3L949.8 655.8M949.8 642.3L945.3 658.5M910.3 637.2L938.0 640.9M938.0 640.9L945.3 644.9M934.0 642.8L945.3 644.9M945.3 644.9L945.3 658.5M945.3 644.9L939.9 660.9M909.1 637.9L934.0 642.8M934.0 642.8L939.9 647.2M929.3 644.5L939.9 647.2M939.9 647.2L939.9 660.9M939.9 647.2L933.6 663.0M907.7 638.5L929.3 644.5M929.3 644.5L933.6 649.2M923.9 645.9L933.6 649.2M933.6 649.2L933.6 663.0M933.6 649.2L926.5 664.7M906.1 639.0L923.9 645.9M923.9 645.9L926.5 650.9M918.0 647.0L926.5 650.9M926.5 650.9L926.5 664.7M926.5 650.9L918.9 666.1M904.3 639.5L918.0 647.0M918.0 647.0L918.9 652.1M911.7 647.8L918.9 652.1M918.9 652.1L918.9 666.1M918.9 652.1L910.9 667.0M902.4 639.8L911.7 647.8M911.7 647.8L910.9 653.0M905.2 648.3L910.9 653.0M910.9 653.0L910.9 667.0M910.9 653.0L902.7 667.4M900.5 639.9L905.2 648.3M905.2 648.3L902.7 653.4M898.5 648.5L902.7 653.4M902.7 653.4L902.7 667.4M902.7 653.4L894.3 667.4M898.5 640.0L898.5 648.5M898.5 648.5L894.3 653.4M891.8 648.3L894.3 653.4M894.3 653.4L894.3 667.4M894.3 653.4L886.1 667.0M896.5 639.9L891.8 648.3M891.8 648.3L886.1 653.0M885.3 647.8L886.1 653.0M886.1 653.0L886.1 667.0M886.1 653.0L878.1 666.1M894.6 639.8L885.3 647.8M885.3 647.8L878.1 652.1M879.0 647.0L878.1 652.1M878.1 652.1L878.1 666.1M878.1 652.1L870.5 664.7M892.7 639.5L879.0 647.0M879.0 647.0L870.5 650.9M873.1 645.9L870.5 650.9M870.5 650.9L870.5 664.7M870.5 650.9L863.4 663.0M890.9 639.0L873.1 645.9M873.1 645.9L863.4 649.2M867.7 644.5L863.4 649.2M863.4 649.2L863.4 663.0M863.4 649.2L857.1 660.9M889.3 638.5L867.7 644.5M867.7 644.5L857.1 647.2M863.0 642.8L857.1 647.2M857.1 647.2L857.1 660.9M857.1 647.2L851.7 658.5M887.9 637.9L863.0 642.8M863.0 642.8L851.7 644.9M859.0 640.9L851.7 644.9M851.7 644.9L851.7 658.5M851.7 644.9L847.2 655.8M886.7 637.2L859.0 640.9M859.0 640.9L847.2 642.3M855.7 638.9L847.2 642.3M847.2 642.3L847.2 655.8M847.2 642.3L843.7 652.9M885.8 636.5L855.7 638.9M855.7 638.9L843.7 639.5M853.4 636.6L843.7 639.5M843.7 639.5L843.7 652.9M843.7 639.5L841.3 649.8M885.1 635.7L853.4 636.6M853.4 636.6L841.3 636.6M852.0 634.3L841.3 636.6M841.3 636.6L841.3 649.8M841.3 636.6L840.1 646.6M884.6 634.9L852.0 634.3M852.0 634.3L840.1 633.5M851.5 632.0L840.1 633.5M840.1 633.5L840.1 646.6M840.1 633.5L840.1 643.4M884.5 634.0L851.5 632.0M851.5 632.0L840.1 630.5M852.0 629.7L840.1 630.5M884.6 633.1L852.0 629.7M852.0 629.7L841.3 627.4M853.4 627.4L841.3 627.4M885.1 632.3L853.4 627.4M853.4 627.4L843.7 624.5M855.7 625.1L843.7 624.5M885.8 631.5L855.7 625.1M855.7 625.1L847.2 621.7M859.0 623.1L847.2 621.7M886.7 630.8L859.0 623.1M859.0 623.1L851.7 619.1M863.0 621.2L851.7 619.1M887.9 630.1L863.0 621.2M863.0 621.2L857.1 616.8M867.7 619.5L857.1 616.8M889.3 629.5L867.7 619.5M867.7 619.5L863.4 614.8M873.1 618.1L863.4 614.8M890.9 629.0L873.1 618.1M873.1 618.1L870.5 613.1M879.0 617.0L870.5 613.1M892.7 628.5L879.0 617.0M879.0 617.0L878.1 611.9M885.3 616.2L878.1 611.9M894.6 628.2L885.3 616.2M885.3 616.2L886.1 611.0M891.8 615.7L886.1 611.0M896.5 628.1L891.8 615.7M891.8 615.7L894.3 610.6M898.5 615.5L894.3 610.6M898.5 628.0L898.5 615.5M898.5 615.5L902.7 610.6M905.2 615.7L902.7 610.6M900.5 628.1L905.2 615.7M905.2 615.7L910.9 611.0M911.7 616.2L910.9 611.0M902.4 628.2L911.7 616.2M911.7 616.2L918.9 611.9M918.0 617.0L918.9 611.9M904.3 628.5L918.0 617.0M918.0 617.0L926.5 613.1M923.9 618.1L926.5 613.1M906.1 629.0L923.9 618.1M923.9 618.1L933.6 614.8M929.3 619.5L933.6 614.8M907.7 629.5L929.3 619.5M929.3 619.5L939.9 616.8M934.0 621.2L939.9 616.8M909.1 630.1L934.0 621.2M934.0 621.2L945.3 619.1M938.0 623.1L945.3 619.1M910.3 630.8L938.0 623.1M938.0 623.1L949.8 621.7M941.3 625.1L949.8 621.7M911.2 631.5L941.3 625.1M941.3 625.1L953.3 624.5M943.6 627.4L953.3 624.5M911.9 632.3L943.6 627.4M943.6 627.4L955.7 627.4M945.0 629.7L955.7 627.4M912.4 633.1L945.0 629.7M945.0 629.7L956.9 630.5M945.5 632.0L956.9 630.5" fill="none" stroke="#0f2837" stroke-width="0.9" stroke-linecap="round" />
<clipPath id="ch2"><path d="M870,590 Q870,582 898.5,582 Q927,582 927,590 Q922,602 903,606 L902,618 Q915,624 916,636 Q912,646 898,646 Q884,646 881,636 Q882,624 895,618 L894,606 Q875,602 870,590 Z"/></clipPath><path d="M870,590 Q870,582 898.5,582 Q927,582 927,590 Q922,602 903,606 L902,618 Q915,624 916,636 Q912,646 898,646 Q884,646 881,636 Q882,624 895,618 L894,606 Q875,602 870,590 Z" fill="#b2f9a9"/><g clip-path="url(#ch2)"><path d="M800.0 580.0L854.4 648.0M854.4 580.0L800.0 648.0M802.5 580.0L856.9 648.0M856.9 580.0L802.5 648.0M805.0 580.0L859.4 648.0M859.4 580.0L805.0 648.0M807.5 580.0L861.9 648.0M861.9 580.0L807.5 648.0M810.0 580.0L864.4 648.0M864.4 580.0L810.0 648.0M812.5 580.0L866.9 648.0M866.9 580.0L812.5 648.0M815.0 580.0L869.4 648.0M869.4 580.0L815.0 648.0M817.5 580.0L871.9 648.0M871.9 580.0L817.5 648.0M820.0 580.0L874.4 648.0M874.4 580.0L820.0 648.0M822.5 580.0L876.9 648.0M876.9 580.0L822.5 648.0M825.0 580.0L879.4 648.0M879.4 580.0L825.0 648.0M827.5 580.0L881.9 648.0M881.9 580.0L827.5 648.0M830.0 580.0L884.4 648.0M884.4 580.0L830.0 648.0M832.5 580.0L886.9 648.0M886.9 580.0L832.5 648.0M835.0 580.0L889.4 648.0M889.4 580.0L835.0 648.0M837.5 580.0L891.9 648.0M891.9 580.0L837.5 648.0M840.0 580.0L894.4 648.0M894.4 580.0L840.0 648.0M842.5 580.0L896.9 648.0M896.9 580.0L842.5 648.0M845.0 580.0L899.4 648.0M899.4 580.0L845.0 648.0M847.5 580.0L901.9 648.0M901.9 580.0L847.5 648.0M850.0 580.0L904.4 648.0M904.4 580.0L850.0 648.0M852.5 580.0L906.9 648.0M906.9 580.0L852.5 648.0M855.0 580.0L909.4 648.0M909.4 580.0L855.0 648.0M857.5 580.0L911.9 648.0M911.9 580.0L857.5 648.0M860.0 580.0L914.4 648.0M914.4 580.0L860.0 648.0M862.5 580.0L916.9 648.0M916.9 580.0L862.5 648.0M865.0 580.0L919.4 648.0M919.4 580.0L865.0 648.0M867.5 580.0L921.9 648.0M921.9 580.0L867.5 648.0M870.0 580.0L924.4 648.0M924.4 580.0L870.0 648.0M872.5 580.0L926.9 648.0M926.9 580.0L872.5 648.0M875.0 580.0L929.4 648.0M929.4 580.0L875.0 648.0M877.5 580.0L931.9 648.0M931.9 580.0L877.5 648.0M880.0 580.0L934.4 648.0M934.4 580.0L880.0 648.0M882.5 580.0L936.9 648.0M936.9 580.0L882.5 648.0M885.0 580.0L939.4 648.0M939.4 580.0L885.0 648.0M887.5 580.0L941.9 648.0M941.9 580.0L887.5 648.0M890.0 580.0L944.4 648.0M944.4 580.0L890.0 648.0M892.5 580.0L946.9 648.0M946.9 580.0L892.5 648.0M895.0 580.0L949.4 648.0M949.4 580.0L895.0 648.0M897.5 580.0L951.9 648.0M951.9 580.0L897.5 648.0M900.0 580.0L954.4 648.0M954.4 580.0L900.0 648.0M902.5 580.0L956.9 648.0M956.9 580.0L902.5 648.0M905.0 580.0L959.4 648.0M959.4 580.0L905.0 648.0M907.5 580.0L961.9 648.0M961.9 580.0L907.5 648.0M910.0 580.0L964.4 648.0M964.4 580.0L910.0 648.0M912.5 580.0L966.9 648.0M966.9 580.0L912.5 648.0M915.0 580.0L969.4 648.0M969.4 580.0L915.0 648.0M917.5 580.0L971.9 648.0M971.9 580.0L917.5 648.0M920.0 580.0L974.4 648.0M974.4 580.0L920.0 648.0M922.5 580.0L976.9 648.0M976.9 580.0L922.5 648.0M925.0 580.0L979.4 648.0M979.4 580.0L925.0 648.0M927.5 580.0L981.9 648.0M981.9 580.0L927.5 648.0M930.0 580.0L984.4 648.0M984.4 580.0L930.0 648.0M932.5 580.0L986.9 648.0M986.9 580.0L932.5 648.0M935.0 580.0L989.4 648.0M989.4 580.0L935.0 648.0M937.5 580.0L991.9 648.0M991.9 580.0L937.5 648.0M940.0 580.0L994.4 648.0M994.4 580.0L940.0 648.0M942.5 580.0L996.9 648.0M996.9 580.0L942.5 648.0M945.0 580.0L999.4 648.0M999.4 580.0L945.0 648.0M947.5 580.0L1001.9 648.0M1001.9 580.0L947.5 648.0M950.0 580.0L1004.4 648.0M1004.4 580.0L950.0 648.0M952.5 580.0L1006.9 648.0M1006.9 580.0L952.5 648.0M955.0 580.0L1009.4 648.0M1009.4 580.0L955.0 648.0M957.5 580.0L1011.9 648.0M1011.9 580.0L957.5 648.0M960.0 580.0L1014.4 648.0M1014.4 580.0L960.0 648.0M962.5 580.0L1016.9 648.0M1016.9 580.0L962.5 648.0M965.0 580.0L1019.4 648.0M1019.4 580.0L965.0 648.0M967.5 580.0L1021.9 648.0M1021.9 580.0L967.5 648.0M970.0 580.0L1024.4 648.0M1024.4 580.0L970.0 648.0M972.5 580.0L1026.9 648.0M1026.9 580.0L972.5 648.0M975.0 580.0L1029.4 648.0M1029.4 580.0L975.0 648.0M977.5 580.0L1031.9 648.0M1031.9 580.0L977.5 648.0M980.0 580.0L1034.4 648.0M1034.4 580.0L980.0 648.0M982.5 580.0L1036.9 648.0M1036.9 580.0L982.5 648.0M985.0 580.0L1039.4 648.0M1039.4 580.0L985.0 648.0M987.5 580.0L1041.9 648.0M1041.9 580.0L987.5 648.0M990.0 580.0L1044.4 648.0M1044.4 580.0L990.0 648.0M992.5 580.0L1046.9 648.0M1046.9 580.0L992.5 648.0M995.0 580.0L1049.4 648.0M1049.4 580.0L995.0 648.0M868.0 580.0L929.0 580.0M868.0 584.0L929.0 584.0M868.0 588.0L929.0 588.0M868.0 592.0L929.0 592.0M868.0 596.0L929.0 596.0M868.0 600.0L929.0 600.0M868.0 604.0L929.0 604.0M868.0 608.0L929.0 608.0M868.0 612.0L929.0 612.0M868.0 616.0L929.0 616.0M868.0 620.0L929.0 620.0M868.0 624.0L929.0 624.0M868.0 628.0L929.0 628.0M868.0 632.0L929.0 632.0M868.0 636.0L929.0 636.0M868.0 640.0L929.0 640.0M868.0 644.0L929.0 644.0" fill="none" stroke="#0f2837" stroke-width="1.15" stroke-linecap="round" /></g><path d="M870,590 Q870,582 898.5,582 Q927,582 927,590 Q922,602 903,606 L902,618 Q915,624 916,636 Q912,646 898,646 Q884,646 881,636 Q882,624 895,618 L894,606 Q875,602 870,590 Z" fill="none" stroke="#0f2837" stroke-width="1.2"/>
<ellipse cx="898.5" cy="590" rx="27" ry="7" fill="none" stroke="#0f2837" stroke-width="1"/>
<ellipse cx="898.5" cy="590.5" rx="12" ry="3" fill="#0f2837" opacity="0.6"/>
<polygon points="1105.2,483.8 1258.6,498.1 1267.4,541.1 1263.4,542.0 1249.8,618.2 1220.5,641.7 1155.0,622.1 1154.0,625.1 1145.3,631.5 1125.7,627.0 1103.3,624.1 1107.2,611.4 1047.6,603.6 1046.6,594.8 1050.5,592.8 1049.5,565.5 1077.9,554.7 1083.7,534.2 1077.9,532.3" fill="#6fc9e4" stroke="#0f2837" stroke-width="1.45" stroke-linejoin="round" /><path d="M1094.5 530.3L1127.7 505.9L1157.0 542.0" fill="none" stroke="#0f2837" stroke-width="1.45" stroke-linejoin="round" stroke-linecap="round" /><path d="M1096.4 532.7L1127.7 508.8L1155.0 543.0" fill="none" stroke="#0f2837" stroke-width="1.45" stroke-linejoin="round" stroke-linecap="round" /><path d="M1176.5 544.0L1196.0 523.5L1206.8 548.9" fill="none" stroke="#0f2837" stroke-width="1.45" stroke-linejoin="round" stroke-linecap="round" /><path d="M1178.9 546.0L1196.0 526.4L1204.8 549.9" fill="none" stroke="#0f2837" stroke-width="1.45" stroke-linejoin="round" stroke-linecap="round" /><path d="M1077.9 532.3L1106.2 527.4L1105.2 533.3L1143.3 541.1L1144.3 546.0L1157.0 547.9L1184.3 546.0L1180.4 548.9" fill="none" stroke="#0f2837" stroke-width="1.45" stroke-linejoin="round" stroke-linecap="round" /><path d="M1198.0 551.8L1237.1 557.7L1258.6 498.1" fill="none" stroke="#0f2837" stroke-width="1.45" stroke-linejoin="round" stroke-linecap="round" /><path d="M1200.0 554.7L1235.1 560.6" fill="none" stroke="#0f2837" stroke-width="1.45" stroke-linejoin="round" stroke-linecap="round" /><path d="M1116.0 485.0L1088.6 524.5" fill="none" stroke="#0f2837" stroke-width="1.45" stroke-linejoin="round" stroke-linecap="round" /><path d="M1127.7 486.4L1100.3 518.6" fill="none" stroke="#0f2837" stroke-width="1.45" stroke-linejoin="round" stroke-linecap="round" /><path d="M1166.7 491.3L1153.1 524.5" fill="none" stroke="#0f2837" stroke-width="1.45" stroke-linejoin="round" stroke-linecap="round" /><path d="M1166.7 491.3L1143.3 502.0L1129.6 505.9" fill="none" stroke="#0f2837" stroke-width="1.45" stroke-linejoin="round" stroke-linecap="round" /><path d="M1208.7 495.2L1157.0 524.5" fill="none" stroke="#0f2837" stroke-width="1.45" stroke-linejoin="round" stroke-linecap="round" /><path d="M1223.4 496.1L1205.8 518.6" fill="none" stroke="#0f2837" stroke-width="1.45" stroke-linejoin="round" stroke-linecap="round" /><path d="M1208.7 495.2L1201.9 518.6" fill="none" stroke="#0f2837" stroke-width="1.45" stroke-linejoin="round" stroke-linecap="round" /><path d="M1258.6 499.1L1207.8 536.2" fill="none" stroke="#0f2837" stroke-width="1.45" stroke-linejoin="round" stroke-linecap="round" /><path d="M1237.1 557.7L1200.0 524.5" fill="none" stroke="#0f2837" stroke-width="1.45" stroke-linejoin="round" stroke-linecap="round" /><path d="M1157.0 547.9L1168.7 628.0" fill="none" stroke="#0f2837" stroke-width="1.45" stroke-linejoin="round" stroke-linecap="round" /><path d="M1180.4 547.9L1168.7 628.0" fill="none" stroke="#0f2837" stroke-width="1.45" stroke-linejoin="round" stroke-linecap="round" /><path d="M1180.4 547.9L1192.1 633.9" fill="none" stroke="#0f2837" stroke-width="1.45" stroke-linejoin="round" stroke-linecap="round" /><path d="M1205.8 553.8L1192.1 633.9" fill="none" stroke="#0f2837" stroke-width="1.45" stroke-linejoin="round" stroke-linecap="round" /><path d="M1205.8 553.8L1220.5 641.7" fill="none" stroke="#0f2837" stroke-width="1.45" stroke-linejoin="round" stroke-linecap="round" /><path d="M1237.1 557.7L1220.5 641.7" fill="none" stroke="#0f2837" stroke-width="1.45" stroke-linejoin="round" stroke-linecap="round" /><path d="M1237.1 557.7L1235.1 630.0" fill="none" stroke="#0f2837" stroke-width="1.45" stroke-linejoin="round" stroke-linecap="round" /><path d="M1254.7 512.7L1235.1 630.0" fill="none" stroke="#0f2837" stroke-width="1.45" stroke-linejoin="round" stroke-linecap="round" /><path d="M1263.4 542.0L1260.5 518.6" fill="none" stroke="#0f2837" stroke-width="1.45" stroke-linejoin="round" stroke-linecap="round" /><path d="M1049.5 565.5L1077.9 554.7L1159.9 570.4L1149.2 587.0L1049.5 565.5" fill="none" stroke="#0f2837" stroke-width="1.45" stroke-linejoin="round" stroke-linecap="round" /><path d="M1088.6 556.7L1149.2 585.0" fill="none" stroke="#0f2837" stroke-width="1.45" stroke-linejoin="round" stroke-linecap="round" /><path d="M1050.5 567.4L1149.2 588.9" fill="none" stroke="#0f2837" stroke-width="1.45" stroke-linejoin="round" stroke-linecap="round" /><path d="M1083.7 534.2L1086.7 555.7" fill="none" stroke="#0f2837" stroke-width="1.45" stroke-linejoin="round" stroke-linecap="round" /><path d="M1097.4 536.2L1096.4 557.7" fill="none" stroke="#0f2837" stroke-width="1.45" stroke-linejoin="round" stroke-linecap="round" /><path d="M1105.2 533.3L1112.0 561.6" fill="none" stroke="#0f2837" stroke-width="1.45" stroke-linejoin="round" stroke-linecap="round" /><path d="M1153.1 546.0L1153.1 569.4" fill="none" stroke="#0f2837" stroke-width="1.45" stroke-linejoin="round" stroke-linecap="round" /><path d="M1046.6 594.8L1145.3 619.2L1154.0 615.3L1154.0 625.1" fill="none" stroke="#0f2837" stroke-width="1.45" stroke-linejoin="round" stroke-linecap="round" /><path d="M1145.3 619.2L1145.3 631.5" fill="none" stroke="#0f2837" stroke-width="1.45" stroke-linejoin="round" stroke-linecap="round" /><path d="M1047.6 603.6L1145.3 631.5" fill="none" stroke="#0f2837" stroke-width="1.45" stroke-linejoin="round" stroke-linecap="round" /><path d="M1077.9 575.3L1077.9 594.8L1050.5 592.8" fill="none" stroke="#0f2837" stroke-width="1.45" stroke-linejoin="round" stroke-linecap="round" /><path d="M1088.6 575.3L1088.6 600.7" fill="none" stroke="#0f2837" stroke-width="1.45" stroke-linejoin="round" stroke-linecap="round" /><path d="M1125.7 585.0L1139.4 612.4" fill="none" stroke="#0f2837" stroke-width="1.45" stroke-linejoin="round" stroke-linecap="round" /><path d="M1094.5 600.7L1147.2 614.3" fill="none" stroke="#0f2837" stroke-width="1.45" stroke-linejoin="round" stroke-linecap="round" />
<path d="M1050.5 566.5L1050.5 593.8" fill="none" stroke="#0f2837" stroke-width="2.2" stroke-linecap="round" />
<path d="M1066.1 569.4L1066.1 597.7" fill="none" stroke="#0f2837" stroke-width="2.2" stroke-linecap="round" />
<path d="M1070.0 570.4L1070.0 599.1" fill="none" stroke="#0f2837" stroke-width="2.2" stroke-linecap="round" />
<path d="M1092.5 575.3L1090.9 605.5" fill="none" stroke="#0f2837" stroke-width="2.2" stroke-linecap="round" />
<path d="M1148.2 587.0L1146.2 617.3" fill="none" stroke="#0f2837" stroke-width="2.2" stroke-linecap="round" />
<polygon points="1107.2,611.4 1125.7,614.3 1125.7,627.0 1103.3,624.1" fill="#2c5d78" stroke="#0f2837" stroke-width="0.8" stroke-linejoin="round" />
<polygon points="562.0,507.1 725.5,491.3 745.8,537.4 743.5,544.1 749.1,613.8 698.6,625.0 697.5,636.3 680.6,640.7 678.4,649.7 660.4,652.0 658.1,645.2 566.0,670.0 554.8,627.3 548.1,598.1 577.3,580.1 575.0,559.9 564.9,544.1" fill="#6fc9e4" stroke="#eefaff" stroke-width="1.45" stroke-linejoin="round" /><path d="M599.7 503.7L575.0 550.9" fill="none" stroke="#eefaff" stroke-width="1.45" stroke-linejoin="round" stroke-linecap="round" /><path d="M599.7 503.7L606.5 544.1" fill="none" stroke="#eefaff" stroke-width="1.45" stroke-linejoin="round" stroke-linecap="round" /><path d="M644.7 499.2L628.9 518.3" fill="none" stroke="#eefaff" stroke-width="1.45" stroke-linejoin="round" stroke-linecap="round" /><path d="M644.7 499.2L667.1 537.4" fill="none" stroke="#eefaff" stroke-width="1.45" stroke-linejoin="round" stroke-linecap="round" /><path d="M682.9 495.8L664.9 523.9" fill="none" stroke="#eefaff" stroke-width="1.45" stroke-linejoin="round" stroke-linecap="round" /><path d="M698.6 494.7L696.3 537.4" fill="none" stroke="#eefaff" stroke-width="1.45" stroke-linejoin="round" stroke-linecap="round" /><path d="M714.3 492.5L700.8 541.9" fill="none" stroke="#eefaff" stroke-width="1.45" stroke-linejoin="round" stroke-linecap="round" /><path d="M725.5 491.3L718.8 535.2" fill="none" stroke="#eefaff" stroke-width="1.45" stroke-linejoin="round" stroke-linecap="round" /><path d="M599.7 559.9L631.2 518.3L671.6 548.6" fill="none" stroke="#eefaff" stroke-width="1.45" stroke-linejoin="round" stroke-linecap="round" /><path d="M602.0 562.1L631.2 521.7L669.4 549.8" fill="none" stroke="#eefaff" stroke-width="1.45" stroke-linejoin="round" stroke-linecap="round" /><path d="M697.5 544.1L712.1 518.3L721.1 541.9" fill="none" stroke="#eefaff" stroke-width="1.45" stroke-linejoin="round" stroke-linecap="round" /><path d="M575.0 552.0L613.2 548.6L615.5 555.4L662.6 547.5L664.9 555.4L698.6 549.8L745.8 541.9" fill="none" stroke="#eefaff" stroke-width="1.45" stroke-linejoin="round" stroke-linecap="round" /><path d="M577.3 566.6L604.2 562.1" fill="none" stroke="#eefaff" stroke-width="1.45" stroke-linejoin="round" stroke-linecap="round" /><path d="M581.8 568.9L586.3 591.3" fill="none" stroke="#eefaff" stroke-width="1.45" stroke-linejoin="round" stroke-linecap="round" /><path d="M606.5 564.4L606.5 589.1" fill="none" stroke="#eefaff" stroke-width="1.45" stroke-linejoin="round" stroke-linecap="round" /><path d="M590.7 566.6L593.0 591.3" fill="none" stroke="#eefaff" stroke-width="1.45" stroke-linejoin="round" stroke-linecap="round" /><path d="M617.7 557.6L631.2 584.6L689.6 575.6" fill="none" stroke="#eefaff" stroke-width="1.45" stroke-linejoin="round" stroke-linecap="round" /><path d="M615.5 556.5L615.5 591.3" fill="none" stroke="#eefaff" stroke-width="1.45" stroke-linejoin="round" stroke-linecap="round" /><path d="M548.1 598.1L613.2 592.4L691.8 586.8L696.3 602.6L554.8 627.3" fill="none" stroke="#eefaff" stroke-width="1.45" stroke-linejoin="round" stroke-linecap="round" /><path d="M581.8 592.4L694.1 601.4" fill="none" stroke="#eefaff" stroke-width="1.45" stroke-linejoin="round" stroke-linecap="round" /><path d="M554.8 613.8L611.0 595.8" fill="none" stroke="#eefaff" stroke-width="1.45" stroke-linejoin="round" stroke-linecap="round" /><path d="M676.1 555.4L678.4 586.8" fill="none" stroke="#eefaff" stroke-width="1.45" stroke-linejoin="round" stroke-linecap="round" /><path d="M685.1 555.4L703.1 625.0" fill="none" stroke="#eefaff" stroke-width="1.45" stroke-linejoin="round" stroke-linecap="round" /><path d="M700.8 550.9L703.1 625.0" fill="none" stroke="#eefaff" stroke-width="1.45" stroke-linejoin="round" stroke-linecap="round" /><path d="M700.8 550.9L721.1 620.5" fill="none" stroke="#eefaff" stroke-width="1.45" stroke-linejoin="round" stroke-linecap="round" /><path d="M721.1 546.4L721.1 620.5" fill="none" stroke="#eefaff" stroke-width="1.45" stroke-linejoin="round" stroke-linecap="round" /><path d="M723.3 546.4L748.0 609.3" fill="none" stroke="#eefaff" stroke-width="1.45" stroke-linejoin="round" stroke-linecap="round" /><path d="M676.1 555.4L691.8 586.8" fill="none" stroke="#eefaff" stroke-width="1.45" stroke-linejoin="round" stroke-linecap="round" /><path d="M563.8 631.8L563.8 649.7" fill="none" stroke="#eefaff" stroke-width="1.45" stroke-linejoin="round" stroke-linecap="round" /><path d="M593.0 618.3L595.2 647.5" fill="none" stroke="#eefaff" stroke-width="1.45" stroke-linejoin="round" stroke-linecap="round" /><path d="M626.7 611.5L628.9 638.5" fill="none" stroke="#eefaff" stroke-width="1.45" stroke-linejoin="round" stroke-linecap="round" /><path d="M691.8 602.6L693.0 625.0" fill="none" stroke="#eefaff" stroke-width="1.45" stroke-linejoin="round" stroke-linecap="round" /><path d="M586.3 618.3L590.7 636.3" fill="none" stroke="#eefaff" stroke-width="1.45" stroke-linejoin="round" stroke-linecap="round" /><path d="M613.2 613.8L615.5 638.5" fill="none" stroke="#eefaff" stroke-width="1.45" stroke-linejoin="round" stroke-linecap="round" /><path d="M662.6 604.8L680.6 625.0" fill="none" stroke="#eefaff" stroke-width="1.45" stroke-linejoin="round" stroke-linecap="round" /><path d="M559.3 649.7L698.6 625.0" fill="none" stroke="#eefaff" stroke-width="1.45" stroke-linejoin="round" stroke-linecap="round" /><path d="M563.8 654.2L697.5 627.3" fill="none" stroke="#eefaff" stroke-width="1.45" stroke-linejoin="round" stroke-linecap="round" /><path d="M563.8 647.5L590.7 649.7" fill="none" stroke="#eefaff" stroke-width="1.45" stroke-linejoin="round" stroke-linecap="round" /><path d="M566.0 670.0L563.8 649.7" fill="none" stroke="#eefaff" stroke-width="1.45" stroke-linejoin="round" stroke-linecap="round" /><path d="M658.1 635.1L678.4 632.9L678.4 649.7" fill="none" stroke="#eefaff" stroke-width="1.45" stroke-linejoin="round" stroke-linecap="round" />
<path d="M658.1 636.9L678.4 634.7M658.1 638.7L678.4 636.5M658.1 640.5L678.4 638.3M658.1 642.3L678.4 640.1M658.1 644.1L678.4 641.9M658.1 645.9L678.4 643.7M658.1 647.7L678.4 645.5M658.1 649.5L678.4 647.3" fill="none" stroke="#eefaff" stroke-width="1" stroke-linecap="round" />
<polygon points="311.0,552.7 421.0,525.4 514.0,590.0 504.0,597.7 520.4,673.0 525.0,690.5 506.3,707.0 502.8,722.0 507.5,739.7 513.4,753.8 494.6,773.7 472.3,775.0 364.5,878.0 311.0,884.0" fill="#6fc9e4" stroke="#0f2837" stroke-width="1.45" stroke-linejoin="round" /><path d="M314.7 586.9L386.0 585.0L348.8 668.0" fill="none" stroke="#0f2837" stroke-width="1.45" stroke-linejoin="round" stroke-linecap="round" /><path d="M386.0 585.0L444.6 618.2" fill="none" stroke="#0f2837" stroke-width="1.45" stroke-linejoin="round" stroke-linecap="round" /><path d="M388.9 587.9L352.7 666.0" fill="none" stroke="#0f2837" stroke-width="1.45" stroke-linejoin="round" stroke-linecap="round" /><path d="M387.9 591.8L440.7 620.1" fill="none" stroke="#0f2837" stroke-width="1.45" stroke-linejoin="round" stroke-linecap="round" /><path d="M421.1 621.1L434.8 633.8L475.8 611.3L471.9 606.5" fill="none" stroke="#0f2837" stroke-width="1.45" stroke-linejoin="round" stroke-linecap="round" /><path d="M421.1 621.1L432.8 628.0L472.9 607.1" fill="none" stroke="#0f2837" stroke-width="1.45" stroke-linejoin="round" stroke-linecap="round" /><path d="M427.0 567.4L470.0 566.4L444.6 586.0L389.9 535.2" fill="none" stroke="#0f2837" stroke-width="1.45" stroke-linejoin="round" stroke-linecap="round" /><path d="M470.0 566.4L487.5 597.7L513.9 589.9" fill="none" stroke="#0f2837" stroke-width="1.45" stroke-linejoin="round" stroke-linecap="round" /><path d="M470.0 566.4L495.4 576.2" fill="none" stroke="#0f2837" stroke-width="1.45" stroke-linejoin="round" stroke-linecap="round" /><path d="M470.0 566.4L464.1 605.5" fill="none" stroke="#0f2837" stroke-width="1.45" stroke-linejoin="round" stroke-linecap="round" /><path d="M471.9 572.3L467.0 601.6" fill="none" stroke="#0f2837" stroke-width="1.45" stroke-linejoin="round" stroke-linecap="round" /><path d="M487.5 597.7L475.8 593.8L479.7 597.7" fill="none" stroke="#0f2837" stroke-width="1.45" stroke-linejoin="round" stroke-linecap="round" /><path d="M370.3 538.1L393.8 586.0" fill="none" stroke="#0f2837" stroke-width="1.45" stroke-linejoin="round" stroke-linecap="round" /><path d="M421.1 525.4L495.4 574.2" fill="none" stroke="#0f2837" stroke-width="1.45" stroke-linejoin="round" stroke-linecap="round" /><path d="M310.7 552.7L325.4 586.0" fill="none" stroke="#0f2837" stroke-width="1.45" stroke-linejoin="round" stroke-linecap="round" /><path d="M391.8 537.1L436.7 564.5" fill="none" stroke="#0f2837" stroke-width="1.45" stroke-linejoin="round" stroke-linecap="round" /><path d="M362.5 652.4L434.8 617.2" fill="none" stroke="#0f2837" stroke-width="1.45" stroke-linejoin="round" stroke-linecap="round" /><path d="M362.5 652.4L376.2 664.1L323.4 695.4" fill="none" stroke="#0f2837" stroke-width="1.45" stroke-linejoin="round" stroke-linecap="round" /><path d="M348.8 668.0L374.2 661.2" fill="none" stroke="#0f2837" stroke-width="1.45" stroke-linejoin="round" stroke-linecap="round" /><path d="M310.7 617.2L335.2 634.8" fill="none" stroke="#0f2837" stroke-width="1.45" stroke-linejoin="round" stroke-linecap="round" /><path d="M310.7 660.2L339.1 648.5" fill="none" stroke="#0f2837" stroke-width="1.45" stroke-linejoin="round" stroke-linecap="round" /><path d="M310.7 687.5L321.5 695.4L319.5 681.7L341.0 654.3" fill="none" stroke="#0f2837" stroke-width="1.45" stroke-linejoin="round" stroke-linecap="round" /><path d="M438.7 636.7L444.6 662.1L456.3 656.3" fill="none" stroke="#0f2837" stroke-width="1.45" stroke-linejoin="round" stroke-linecap="round" /><path d="M395.7 695.4L456.3 656.3L471.9 670.0" fill="none" stroke="#0f2837" stroke-width="1.45" stroke-linejoin="round" stroke-linecap="round" /><path d="M364.5 671.9L397.7 693.4" fill="none" stroke="#0f2837" stroke-width="1.45" stroke-linejoin="round" stroke-linecap="round" /><path d="M487.5 597.7L505.1 695.4" fill="none" stroke="#0f2837" stroke-width="1.45" stroke-linejoin="round" stroke-linecap="round" /><path d="M483.6 601.6L495.4 675.8" fill="none" stroke="#0f2837" stroke-width="1.45" stroke-linejoin="round" stroke-linecap="round" /><path d="M466.0 617.2L487.5 671.9" fill="none" stroke="#0f2837" stroke-width="1.45" stroke-linejoin="round" stroke-linecap="round" /><path d="M440.7 634.8L456.3 656.3" fill="none" stroke="#0f2837" stroke-width="1.45" stroke-linejoin="round" stroke-linecap="round" /><path d="M310.6 739.7L330.5 736.2L492.3 676.4" fill="none" stroke="#0f2837" stroke-width="1.45" stroke-linejoin="round" stroke-linecap="round" /><path d="M335.2 791.3L478.2 685.8" fill="none" stroke="#0f2837" stroke-width="1.45" stroke-linejoin="round" stroke-linecap="round" /><path d="M330.5 736.2L335.2 791.3L310.6 794.8" fill="none" stroke="#0f2837" stroke-width="1.45" stroke-linejoin="round" stroke-linecap="round" /><path d="M337.5 794.8L480.5 689.3" fill="none" stroke="#0f2837" stroke-width="1.45" stroke-linejoin="round" stroke-linecap="round" /><path d="M309.4 682.3L322.3 688.1L375.0 662.3" fill="none" stroke="#0f2837" stroke-width="1.45" stroke-linejoin="round" stroke-linecap="round" /><path d="M323.4 695.2L376.2 668.2" fill="none" stroke="#0f2837" stroke-width="1.45" stroke-linejoin="round" stroke-linecap="round" /><path d="M322.3 688.1L323.4 695.2L309.4 690.5" fill="none" stroke="#0f2837" stroke-width="1.45" stroke-linejoin="round" stroke-linecap="round" /><path d="M342.2 729.2L452.4 681.1" fill="none" stroke="#0f2837" stroke-width="1.45" stroke-linejoin="round" stroke-linecap="round" /><path d="M315.2 692.8L330.5 736.2" fill="none" stroke="#0f2837" stroke-width="1.45" stroke-linejoin="round" stroke-linecap="round" /><path d="M323.4 695.2L342.2 729.2" fill="none" stroke="#0f2837" stroke-width="1.45" stroke-linejoin="round" stroke-linecap="round" /><path d="M351.6 682.3L363.3 715.1" fill="none" stroke="#0f2837" stroke-width="1.45" stroke-linejoin="round" stroke-linecap="round" /><path d="M365.7 675.2L393.8 695.2" fill="none" stroke="#0f2837" stroke-width="1.45" stroke-linejoin="round" stroke-linecap="round" /><path d="M358.6 821.8L473.5 723.3L504.0 722.1" fill="none" stroke="#0f2837" stroke-width="1.45" stroke-linejoin="round" stroke-linecap="round" /><path d="M357.4 859.3L468.8 760.8" fill="none" stroke="#0f2837" stroke-width="1.45" stroke-linejoin="round" stroke-linecap="round" /><path d="M357.4 859.3L364.5 878.1" fill="none" stroke="#0f2837" stroke-width="1.45" stroke-linejoin="round" stroke-linecap="round" /><path d="M310.6 864.0L357.4 859.3L358.6 821.8" fill="none" stroke="#0f2837" stroke-width="1.45" stroke-linejoin="round" stroke-linecap="round" /><path d="M310.6 824.1L358.6 821.8" fill="none" stroke="#0f2837" stroke-width="1.45" stroke-linejoin="round" stroke-linecap="round" /><path d="M310.6 834.7L339.9 824.1" fill="none" stroke="#0f2837" stroke-width="1.45" stroke-linejoin="round" stroke-linecap="round" /><path d="M370.3 772.5L384.4 798.3" fill="none" stroke="#0f2837" stroke-width="1.45" stroke-linejoin="round" stroke-linecap="round" /><path d="M434.8 722.1L455.9 737.4" fill="none" stroke="#0f2837" stroke-width="1.45" stroke-linejoin="round" stroke-linecap="round" /><path d="M455.9 705.7L463.0 730.3" fill="none" stroke="#0f2837" stroke-width="1.45" stroke-linejoin="round" stroke-linecap="round" /><path d="M349.2 791.3L358.6 821.8" fill="none" stroke="#0f2837" stroke-width="1.45" stroke-linejoin="round" stroke-linecap="round" /><path d="M393.8 791.3L450.1 744.4" fill="none" stroke="#0f2837" stroke-width="1.45" stroke-linejoin="round" stroke-linecap="round" /><path d="M361.0 819.4L384.4 798.3" fill="none" stroke="#0f2837" stroke-width="1.45" stroke-linejoin="round" stroke-linecap="round" /><path d="M480.5 688.1L487.6 721.0" fill="none" stroke="#0f2837" stroke-width="1.45" stroke-linejoin="round" stroke-linecap="round" /><path d="M473.5 723.3L494.6 723.3L468.8 760.8" fill="none" stroke="#0f2837" stroke-width="1.45" stroke-linejoin="round" stroke-linecap="round" /><path d="M506.3 706.9L499.3 683.4" fill="none" stroke="#0f2837" stroke-width="1.45" stroke-linejoin="round" stroke-linecap="round" /><path d="M501.6 704.5L492.3 678.8" fill="none" stroke="#0f2837" stroke-width="1.45" stroke-linejoin="round" stroke-linecap="round" /><path d="M310.6 798.3L335.2 794.8" fill="none" stroke="#0f2837" stroke-width="1.45" stroke-linejoin="round" stroke-linecap="round" />
<polygon points="332.8,797.2 338.8,797.2 361.1,855.8 355.1,855.8" fill="#12303c" stroke="#0f2837" stroke-width="0.8" stroke-linejoin="round" />
<polygon points="378.5,763.2 384.5,763.2 402.1,818.3 396.1,818.3" fill="#12303c" stroke="#0f2837" stroke-width="0.8" stroke-linejoin="round" />
<polygon points="418.4,732.7 424.4,732.7 439.6,783.1 433.6,783.1" fill="#12303c" stroke="#0f2837" stroke-width="0.8" stroke-linejoin="round" />
<polygon points="487.6,679.9 493.6,679.9 505.3,723.3 499.3,723.3" fill="#12303c" stroke="#0f2837" stroke-width="0.8" stroke-linejoin="round" />
<polygon points="467.6,758.5 492.3,739.7 513.4,753.8 494.6,773.7 472.3,774.9" fill="#3b7a97" stroke="#0f2837" stroke-width="0.9" stroke-linejoin="round" />
<path d="M467.6 758.5L472.3 774.9M471.7 755.3L479.2 771.4M475.8 752.2L486.0 767.9M480.0 749.1L492.8 764.3M484.1 746.0L499.7 760.8M488.2 742.8L506.5 757.3" fill="none" stroke="#0f2837" stroke-width="1" stroke-linecap="round" />
<polygon points="1414.4,514.8 1514.9,531.2 1514.9,785.1 1511.2,783.6 1467.3,759.4 1444.6,747.3 1441.6,750.3 1414.4,751.8 1385.6,733.7 1365.9,734.6 1340.2,717.0 1356.9,703.4 1276.6,668.6 1281.2,656.5 1290.3,620.2 1287.2,617.1 1341.7,612.6 1347.8,586.9 1338.1,579.3" fill="#6fc9e4" stroke="#0f2837" stroke-width="1.45" stroke-linejoin="round" /><path d="M1362.9 580.8L1421.9 550.5L1467.3 615.6" fill="none" stroke="#0f2837" stroke-width="1.45" stroke-linejoin="round" stroke-linecap="round" /><path d="M1365.9 583.2L1420.4 554.2L1462.8 614.1" fill="none" stroke="#0f2837" stroke-width="1.45" stroke-linejoin="round" stroke-linecap="round" /><path d="M1421.9 550.5L1468.9 549.0" fill="none" stroke="#0f2837" stroke-width="1.45" stroke-linejoin="round" stroke-linecap="round" /><path d="M1338.1 579.3L1375.0 594.4L1384.1 582.3" fill="none" stroke="#0f2837" stroke-width="1.45" stroke-linejoin="round" stroke-linecap="round" /><path d="M1347.8 586.9L1375.0 594.4" fill="none" stroke="#0f2837" stroke-width="1.45" stroke-linejoin="round" stroke-linecap="round" /><path d="M1437.1 614.1L1447.7 603.5L1459.8 612.6" fill="none" stroke="#0f2837" stroke-width="1.45" stroke-linejoin="round" stroke-linecap="round" /><path d="M1437.1 614.1L1505.2 635.3L1514.9 632.3" fill="none" stroke="#0f2837" stroke-width="1.45" stroke-linejoin="round" stroke-linecap="round" /><path d="M1438.6 617.1L1505.2 639.8L1514.9 636.8" fill="none" stroke="#0f2837" stroke-width="1.45" stroke-linejoin="round" stroke-linecap="round" /><path d="M1468.9 592.9L1514.9 611.1" fill="none" stroke="#0f2837" stroke-width="1.45" stroke-linejoin="round" stroke-linecap="round" /><path d="M1468.9 599.0L1514.9 617.1" fill="none" stroke="#0f2837" stroke-width="1.45" stroke-linejoin="round" stroke-linecap="round" /><path d="M1453.7 523.3L1356.9 564.2" fill="none" stroke="#0f2837" stroke-width="1.45" stroke-linejoin="round" stroke-linecap="round" /><path d="M1453.7 523.3L1423.5 547.5" fill="none" stroke="#0f2837" stroke-width="1.45" stroke-linejoin="round" stroke-linecap="round" /><path d="M1468.9 553.6L1514.9 539.9" fill="none" stroke="#0f2837" stroke-width="1.45" stroke-linejoin="round" stroke-linecap="round" /><path d="M1468.9 580.8L1514.9 562.6" fill="none" stroke="#0f2837" stroke-width="1.45" stroke-linejoin="round" stroke-linecap="round" /><path d="M1468.9 589.9L1514.9 577.8" fill="none" stroke="#0f2837" stroke-width="1.45" stroke-linejoin="round" stroke-linecap="round" /><path d="M1499.1 626.2L1514.9 617.1" fill="none" stroke="#0f2837" stroke-width="1.45" stroke-linejoin="round" stroke-linecap="round" /><path d="M1287.2 617.1L1341.7 612.6L1467.3 664.0L1434.0 683.7L1287.2 617.1" fill="none" stroke="#0f2837" stroke-width="1.45" stroke-linejoin="round" stroke-linecap="round" /><path d="M1350.8 617.1L1434.0 680.7" fill="none" stroke="#0f2837" stroke-width="1.45" stroke-linejoin="round" stroke-linecap="round" /><path d="M1288.8 620.8L1432.5 686.7" fill="none" stroke="#0f2837" stroke-width="1.45" stroke-linejoin="round" stroke-linecap="round" /><path d="M1367.5 594.4L1362.9 620.2" fill="none" stroke="#0f2837" stroke-width="1.45" stroke-linejoin="round" stroke-linecap="round" /><path d="M1378.0 595.9L1390.2 630.8" fill="none" stroke="#0f2837" stroke-width="1.45" stroke-linejoin="round" stroke-linecap="round" /><path d="M1347.8 588.4L1343.2 612.6" fill="none" stroke="#0f2837" stroke-width="1.45" stroke-linejoin="round" stroke-linecap="round" /><path d="M1465.8 626.2L1453.7 655.0" fill="none" stroke="#0f2837" stroke-width="1.45" stroke-linejoin="round" stroke-linecap="round" /><path d="M1465.8 626.2L1467.3 759.4" fill="none" stroke="#0f2837" stroke-width="1.45" stroke-linejoin="round" stroke-linecap="round" /><path d="M1505.2 639.8L1467.3 759.4" fill="none" stroke="#0f2837" stroke-width="1.45" stroke-linejoin="round" stroke-linecap="round" /><path d="M1505.2 639.8L1511.2 783.6" fill="none" stroke="#0f2837" stroke-width="1.45" stroke-linejoin="round" stroke-linecap="round" /><path d="M1441.6 686.7L1432.5 723.1" fill="none" stroke="#0f2837" stroke-width="1.45" stroke-linejoin="round" stroke-linecap="round" /><path d="M1444.6 747.3L1429.5 723.1" fill="none" stroke="#0f2837" stroke-width="1.45" stroke-linejoin="round" stroke-linecap="round" /><path d="M1281.2 656.5L1332.6 653.5L1335.7 641.3" fill="none" stroke="#0f2837" stroke-width="1.45" stroke-linejoin="round" stroke-linecap="round" /><path d="M1276.6 668.6L1414.4 751.8L1417.4 733.7L1444.6 732.2L1441.6 750.3" fill="none" stroke="#0f2837" stroke-width="1.45" stroke-linejoin="round" stroke-linecap="round" /><path d="M1281.2 656.5L1417.4 733.7" fill="none" stroke="#0f2837" stroke-width="1.45" stroke-linejoin="round" stroke-linecap="round" /><path d="M1417.4 733.7L1441.6 741.2" fill="none" stroke="#0f2837" stroke-width="1.45" stroke-linejoin="round" stroke-linecap="round" /><path d="M1350.8 653.5L1347.8 677.7" fill="none" stroke="#0f2837" stroke-width="1.45" stroke-linejoin="round" stroke-linecap="round" /><path d="M1356.9 653.5L1405.3 683.7L1420.4 720.0" fill="none" stroke="#0f2837" stroke-width="1.45" stroke-linejoin="round" stroke-linecap="round" /><path d="M1344.8 677.7L1417.4 729.1" fill="none" stroke="#0f2837" stroke-width="1.45" stroke-linejoin="round" stroke-linecap="round" /><path d="M1328.1 668.6L1332.6 653.5" fill="none" stroke="#0f2837" stroke-width="1.45" stroke-linejoin="round" stroke-linecap="round" />
<path d="M1290.3 621.7L1282.7 656.5" fill="none" stroke="#12303c" stroke-width="3" stroke-linecap="round" />
<path d="M1314.5 632.3L1306.9 669.2" fill="none" stroke="#12303c" stroke-width="3.5" stroke-linecap="round" />
<path d="M1322.1 635.3L1319.0 653.5" fill="none" stroke="#12303c" stroke-width="3" stroke-linecap="round" />
<path d="M1344.8 647.4L1337.2 686.7" fill="none" stroke="#12303c" stroke-width="4" stroke-linecap="round" />
<path d="M1431.0 685.2L1417.4 732.2" fill="none" stroke="#12303c" stroke-width="5" stroke-linecap="round" />
<polygon points="1340.2,717.0 1356.9,703.4 1387.1,720.0 1385.6,733.7 1365.9,734.6" fill="#2c5d78" stroke="#0f2837" stroke-width="0.8" stroke-linejoin="round" />
<path d="M1343.2 715.5L1362.9 732.2M1344.8 714.6L1369.0 732.2M1347.2 712.8L1371.4 730.3M1349.6 711.0L1373.8 728.5M1352.0 709.1L1376.2 726.7M1354.4 707.3L1378.7 724.9M1356.9 705.5L1381.1 723.1" fill="none" stroke="#0f2837" stroke-width="1" stroke-linecap="round" />
<path d="M435.7 519.4L597.5 485.7M597.5 485.7L782.8 486.9M782.8 486.9L788.5 598.1M788.5 598.1L719.9 680.1M719.9 680.1L472.8 673.3M472.8 673.3L435.7 519.4M435.7 519.4L708.7 520.6M708.7 520.6L782.8 486.9M708.7 520.6L719.9 680.1M597.5 485.7L615.5 593.6M615.5 593.6L788.5 598.1M615.5 593.6L472.8 673.3" fill="none" stroke="#f9b21c" stroke-width="3.6" stroke-linecap="round" />
<path d="M527.8 503.7L714.3 487.5M575.0 516.1L754.8 498.1M527.8 503.7L563.8 672.2M714.3 487.5L721.1 591.3M754.8 498.1L763.7 602.6M563.8 672.2L766.0 622.8M554.8 627.3L696.3 602.6M721.1 591.3L766.0 622.8M696.3 602.6L763.7 602.6" fill="none" stroke="#f9b21c" stroke-width="3.6" stroke-linecap="round" stroke-dasharray="11 8"/>
<circle cx="1441" cy="182" r="7.2" fill="#f3b7c1"/>
<circle cx="1471.7" cy="174" r="6.5" fill="#9fb7d8"/>
<circle cx="1471.1" cy="211.3" r="6.8" fill="#c6dca3"/>
<path d="M1471.0 160.0L1471.0 183.0" fill="none" stroke="#8bbd1e" stroke-width="1.6" stroke-linecap="round" />
<path d="M1471.0 183.0L1494.0 183.0" fill="none" stroke="#e0354d" stroke-width="1.6" stroke-linecap="round" />
<circle cx="1471.1" cy="153.6" r="7.3" fill="#80b918"/>
<circle cx="1501.3" cy="183.2" r="7.3" fill="#e0354d"/>
<circle cx="1469.7" cy="190.8" r="7" fill="#2f8de4"/>
<text x="1471.1" y="157.3" font-family="Liberation Sans,sans-serif" font-size="10.5" fill="#fff" text-anchor="middle">Y</text>
<text x="1501.3" y="187" font-family="Liberation Sans,sans-serif" font-size="10.5" fill="#fff" text-anchor="middle">X</text>
<text x="1469.7" y="194.6" font-family="Liberation Sans,sans-serif" font-size="10.5" fill="#fff" text-anchor="middle">Z</text></svg>
</div>
<!--BOTTOM BAR-->
<div class="t" style="left:308px;top:1001px">0</div>
<div class="t" style="left:1497px;top:1001px">0</div>
<div class="a" style="left:334px;top:1000.5px;width:1158px;height:16.5px;background:#000"></div>
<div class="a" style="left:336px;top:1002.5px;width:286px;height:12.5px;background:#c0c0c0"></div>
<div class="a" style="left:625px;top:1002.5px;width:286px;height:12.5px;background:#808080"></div>
<div class="a" style="left:914.5px;top:1002.5px;width:286px;height:12.5px;background:#808080"></div>
<div class="a" style="left:1203.5px;top:1002.5px;width:286.5px;height:12.5px;background:#808080"></div>
<!--RIGHT PANEL-->
<svg class="a" style="left:1890px;top:64px" width="28" height="30" viewBox="0 0 28 30"><path d="M23.7,17.3 A9.7,9.7 0 1 1 18.55,8.74" fill="none" stroke="#0b0bd8" stroke-width="2.1" stroke-linecap="round"/><path d="M13.4,2.8 L19.2,7.8 L13.4,12.6" fill="none" stroke="#0b0bd8" stroke-width="2.1" stroke-linecap="round" stroke-linejoin="round"/></svg>
<div class="a b" style="left:1902px;top:106px;font-size:12.5px;line-height:16px;transform-origin:0 0;transform:translate(8px,0) rotate(90deg) scaleX(.926)">Hide controls</div>
<div class="t b" style="left:1524px;top:111.5px;font-size:15.5px">Rendering controls</div>
<div class="t" style="left:1524px;top:139px;font-size:12.8px">Rendering mode</div>
<div class="rad on" style="left:1524px;top:159px"></div>
<div class="t" style="left:1547px;top:159px;font-size:12.8px">Geometry</div>
<div class="rad" style="left:1524px;top:179px"></div>
<div class="t" style="left:1547px;top:179px;font-size:12.5px">Traversal counter</div>
<div class="tog" style="left:1524px;top:209.5px"><i></i></div>
<div class="t" style="left:1571px;top:210.5px;font-size:12.8px">Show geometry</div>
<div class="tog" style="left:1524px;top:232.5px"><i></i></div>
<div class="t" style="left:1571px;top:233.5px;font-size:12.8px">Show bounding volumes</div>
<div class="tog" style="left:1524px;top:255.5px"><i></i></div>
<div class="t" style="left:1571px;top:256.5px;font-size:12.8px">Show instance transforms</div>
<div class="tog" style="left:1524px;top:278.5px"><i></i></div>
<div class="t" style="left:1571px;top:279.5px;font-size:12.8px">Show wireframe</div>
<svg class="a" style="left:1526px;top:312px" width="14" height="10"><path d="M1.5,1.5 L7,7.5 L12.5,1.5" fill="none" stroke="#8a8a8a" stroke-width="2.5"/></svg>
<div class="t" style="left:1546px;top:308px;font-size:13.1px">No culling</div>
<div class="t b" style="left:1524px;top:341.5px;font-size:15.5px">Camera controls</div>
<svg class="a" style="left:1526px;top:372px" width="14" height="10"><path d="M1.5,1.5 L7,7.5 L12.5,1.5" fill="none" stroke="#8a8a8a" stroke-width="2.5"/></svg>
<div class="t" style="left:1546px;top:368px;font-size:12.5px">FPS control style</div>
<svg class="a" style="left:1826px;top:367px" width="50" height="19" viewBox="1826 367 50 19"><rect x="1827.1" y="368.1" width="36.7" height="16.7" rx="2.2" fill="#0b0bd0"/><rect x="1829" y="370" width="3" height="2.8" fill="#fff"/><rect x="1834" y="370" width="3" height="2.8" fill="#fff"/><rect x="1839" y="370" width="3" height="2.8" fill="#fff"/><rect x="1844" y="370" width="3" height="2.8" fill="#fff"/><rect x="1849" y="370" width="3" height="2.8" fill="#fff"/><rect x="1854" y="370" width="3" height="2.8" fill="#fff"/><rect x="1859" y="370" width="3" height="2.8" fill="#fff"/><rect x="1829" y="375" width="5.4" height="3" fill="#fff"/><rect x="1836" y="375" width="3.5" height="3" fill="#fff"/><rect x="1841" y="375" width="3.5" height="3" fill="#fff"/><rect x="1846" y="375" width="3.5" height="3" fill="#fff"/><rect x="1851" y="375" width="3.5" height="3" fill="#fff"/><rect x="1856" y="375" width="6" height="3" fill="#fff"/><rect x="1829" y="380" width="3" height="3.3" fill="#fff"/><rect x="1834" y="380" width="23" height="3.3" fill="#fff"/><rect x="1859" y="380" width="3" height="3.3" fill="#fff"/><rect x="1865.2" y="369.2" width="8.8" height="12.8" rx="2.4" fill="#0b0bd0"/><path d="M1869.6,369.2 V373.6 M1865.2,373.8 H1874" stroke="#fff" stroke-width="0.7" opacity="0.8"/></svg>
<div class="t" style="left:1524px;top:397px">Application 'up' axis</div>
<div class="t" style="left:1701px;top:397px;font-size:11.7px">Coordinate system</div>
<div class="rad" style="left:1524px;top:416px"></div>
<div class="t" style="left:1546px;top:416px">X</div>
<div class="rad on" style="left:1524px;top:435px"></div>
<div class="t" style="left:1546px;top:435px">Y</div>
<div class="rad" style="left:1524px;top:455px"></div>
<div class="t" style="left:1546px;top:455px">Z</div>
<div class="togo" style="left:1701px;top:419px"><i></i></div>
<div class="t" style="left:1748px;top:420px;font-size:12.8px">Invert vertical</div>
<div class="togo" style="left:1701px;top:446px"><i></i></div>
<div class="t" style="left:1748px;top:447px;font-size:13px">Invert horizontal</div>
<div class="t" style="left:1524px;top:483px">Camera position</div>
<svg class="a" style="left:1858px;top:483px" width="15" height="15" viewBox="0 0 28 30"><path d="M23.7,17.3 A9.7,9.7 0 1 1 18.55,8.74" fill="none" stroke="#0b0bd8" stroke-width="2.2" stroke-linecap="round"/><path d="M13.4,2.8 L19.2,7.8 L13.4,12.6" fill="none" stroke="#0b0bd8" stroke-width="2.2" stroke-linecap="round" stroke-linejoin="round"/></svg>
<div class="spin" style="left:1524px;width:112px">0.3743908<b><svg width="14" height="19"><path d="M4,8 L7,4.8 L10,8 Z M4,12 L7,15.5 L10,12 Z" fill="#666"/></svg></b></div>
<div class="spin" style="left:1642px;width:113px">2.7775981<b><svg width="14" height="19"><path d="M4,8 L7,4.8 L10,8 Z M4,12 L7,15.5 L10,12 Z" fill="#666"/></svg></b></div>
<div class="spin" style="left:1761px;width:113px">5.7552528<b><svg width="14" height="19"><path d="M4,8 L7,4.8 L10,8 Z M4,12 L7,15.5 L10,12 Z" fill="#666"/></svg></b></div>
<div class="t" style="left:1524px;top:533px">Field of view</div>
<div class="t r" style="left:1800px;width:74px;top:533px">77</div>
<div class="sl" style="top:554px"></div><div class="sh" style="left:1704px;top:548px"></div>
<div class="t" style="left:1524px;top:579px">Movement speed</div>
<div class="t r" style="left:1800px;width:74px;top:579px">49</div>
<div class="sl" style="top:600px"></div><div class="sh" style="left:1735px;top:594px"></div>
</body>
</html>
